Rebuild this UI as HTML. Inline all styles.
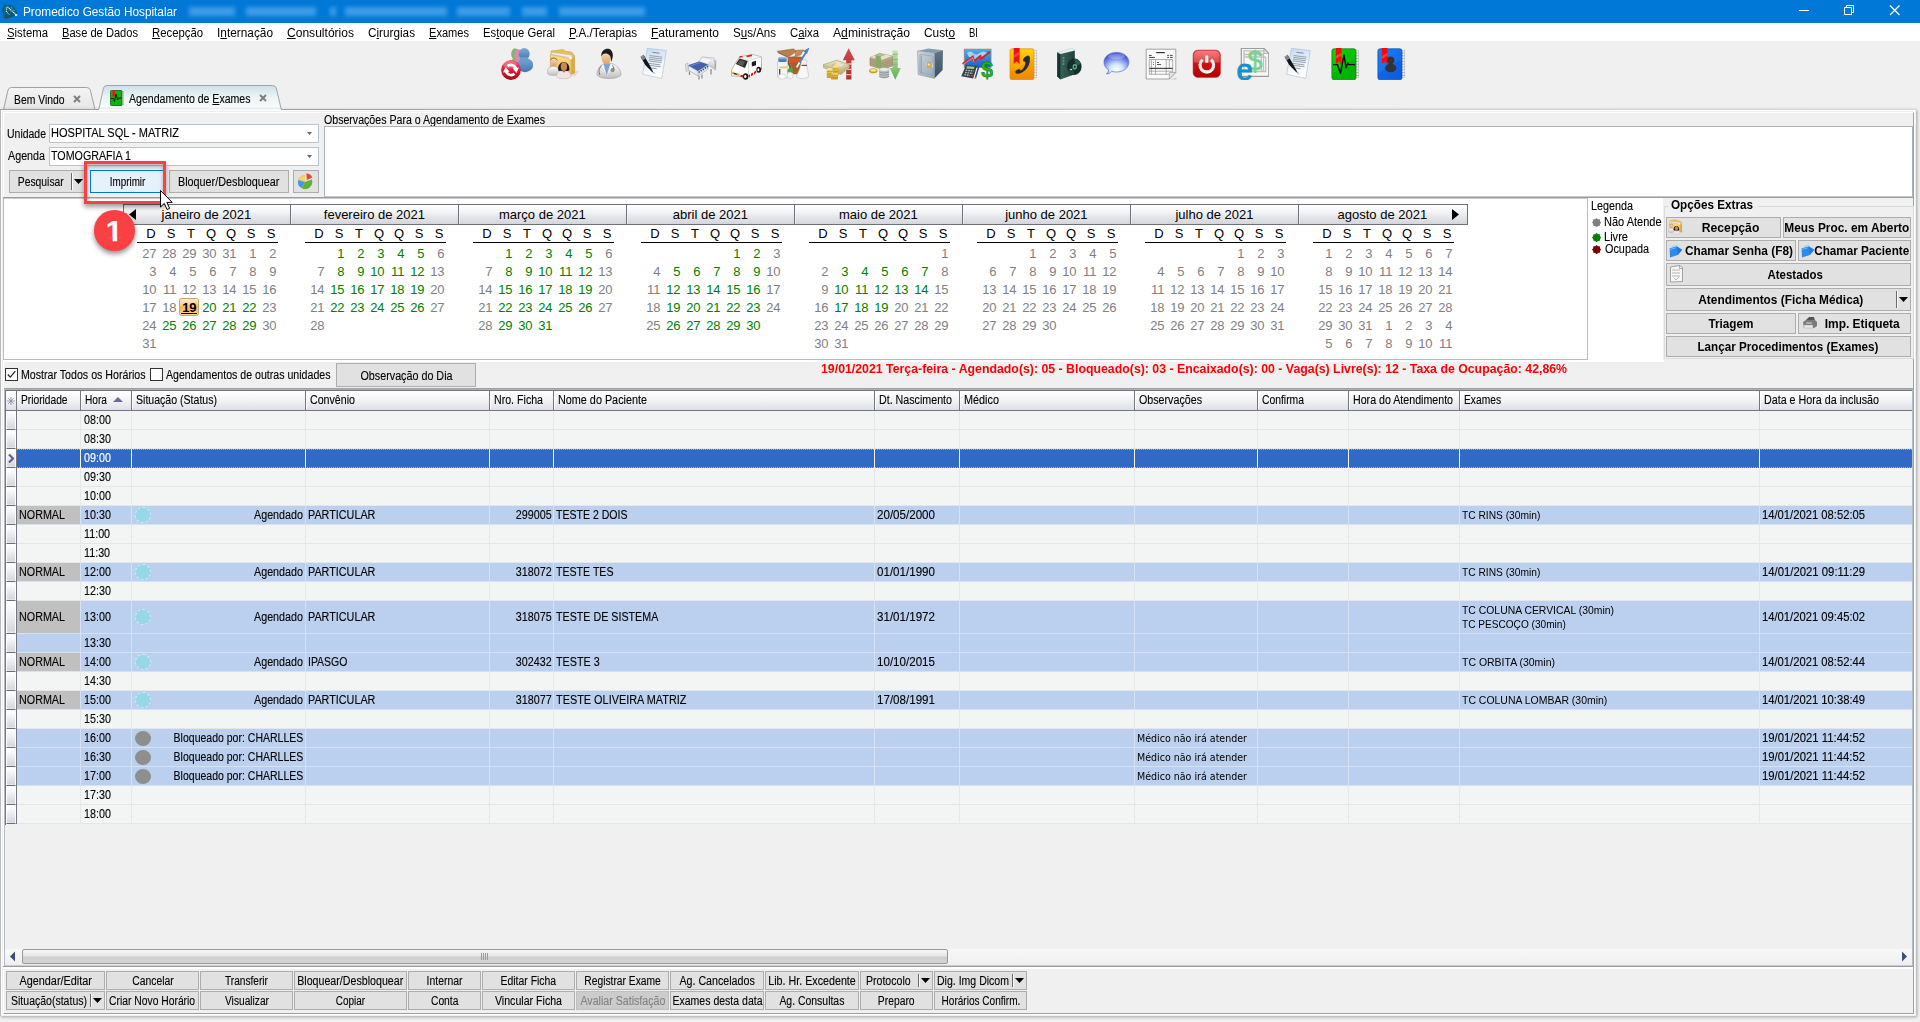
<!DOCTYPE html>
<html lang="pt-BR"><head><meta charset="utf-8"><title>Promedico Gestão Hospitalar</title>
<style>

html,body{margin:0;padding:0;}
body{width:1920px;height:1022px;overflow:hidden;background:#f0f0f0;position:relative;font-family:"Liberation Sans",sans-serif;color:#000;}
div,span.t,svg{position:absolute;box-sizing:border-box;}
span.t{white-space:nowrap;display:block;}
span.m{-webkit-text-stroke:.12px;}
.b{background:#e1e1e1;border:1px solid #adadad;}
.w{background:#fff;}
u{text-decoration:underline;text-underline-offset:1px;}
.hd{background:linear-gradient(#ffffff 0%,#f4f4f8 45%,#dfdfe8 100%);}
.ind{background:linear-gradient(#ffffff 8%,#ececf0 50%,#d6d8de 92%,#eeeef2);border-bottom:1px solid #6a6c72;border-left:1px solid #fff;border-right:1px solid #fff;}

</style></head>
<body>
<div class="" style="left:0px;top:0px;width:1920px;height:23px;background:#0078d7;"></div>
<svg style="left:0;top:0" width="22" height="23" viewBox="0 0 22 23"><path d="M4 4.500L10.500 5 14 7.500 17 12l-.5 3.500L7 18.700 3.500 16.500 2.300 9z" fill="#0b5a72"/><path d="M4 5l6 .5 3 2-9 8z" fill="#0e6a84"/><path d="M7.500 6.800l8.800 8.300" stroke="#fff" stroke-width="1.100" stroke-dasharray="1.200 .700"/><path d="M6.500 7.500v4.500l3.500 3" stroke="#e8f4f8" stroke-width="1" stroke-dasharray="1 .800" fill="none"/><path d="M11 7.500c2 1 3.500 3 3.800 5" stroke="#9fd0dc" stroke-width=".9" stroke-dasharray="1 1" fill="none"/><path d="M15 14.300h2.200v1.500h-2.200z" fill="#fff"/><path d="M4 16.500l2.500 2" stroke="#0a2a3a" stroke-width="1.400"/><path d="M4.500 16.800l1.800 1.400" stroke="#cfe" stroke-width=".6" stroke-dasharray=".8 .8"/></svg>
<span class="t" style="top:5.0px;line-height:15px;font-size:12px;color:#fff;left:22.8px;transform-origin:0 50%;transform:scaleX(0.9826);">Promedico Gestão Hospitalar</span>
<div style="left:0;top:0;width:700px;height:23px;filter:blur(2.2px);opacity:.5"><div style="left:189px;top:7px;width:46px;height:9px;background:#7cc0f8"></div><div style="left:246px;top:7px;width:70px;height:9px;background:#7cc0f8"></div><div style="left:330px;top:7px;width:6px;height:9px;background:#7cc0f8"></div><div style="left:345px;top:7px;width:102px;height:9px;background:#7cc0f8"></div><div style="left:457px;top:7px;width:53px;height:9px;background:#7cc0f8"></div><div style="left:522px;top:7px;width:25px;height:9px;background:#7cc0f8"></div><div style="left:559px;top:7px;width:86px;height:9px;background:#7cc0f8"></div></div>
<svg style="left:1780px;top:0" width="140" height="23" viewBox="0 0 140 23" fill="none" stroke="#fff" stroke-width="1"><path d="M19 10.5h10"/><path d="M64.5 7.5h7v7h-7zM66.5 7.5v-2h7v7h-2"/><path d="M110 5.5l9.5 9.5M119.5 5.5l-9.5 9.5" stroke-width="1.2"/></svg>
<div class="w" style="left:0px;top:23px;width:1920px;height:18px;"></div>
<span class="t" style="top:26.0px;line-height:15px;font-size:12px;left:6.8px;transform-origin:0 50%;transform:scaleX(0.9459);"><u>S</u>istema</span>
<span class="t" style="top:26.0px;line-height:15px;font-size:12px;left:61.8px;transform-origin:0 50%;transform:scaleX(0.9263);"><u>B</u>ase de Dados</span>
<span class="t" style="top:26.0px;line-height:15px;font-size:12px;left:151.8px;transform-origin:0 50%;transform:scaleX(0.9439);"><u>R</u>ecepção</span>
<span class="t" style="top:26.0px;line-height:15px;font-size:12px;left:216.8px;transform-origin:0 50%;transform:scaleX(0.9876);">I<u>n</u>ternação</span>
<span class="t" style="top:26.0px;line-height:15px;font-size:12px;left:286.8px;transform-origin:0 50%;transform:scaleX(1.0046);"><u>C</u>onsultórios</span>
<span class="t" style="top:26.0px;line-height:15px;font-size:12px;left:367.8px;transform-origin:0 50%;transform:scaleX(0.9790);">C<u>i</u>rurgias</span>
<span class="t" style="top:26.0px;line-height:15px;font-size:12px;left:428.8px;transform-origin:0 50%;transform:scaleX(0.9228);"><u>E</u>xames</span>
<span class="t" style="top:26.0px;line-height:15px;font-size:12px;left:482.8px;transform-origin:0 50%;transform:scaleX(0.9386);">Es<u>t</u>oque Geral</span>
<span class="t" style="top:26.0px;line-height:15px;font-size:12px;left:568.8px;transform-origin:0 50%;transform:scaleX(0.9740);"><u>P</u>.A./Terapias</span>
<span class="t" style="top:26.0px;line-height:15px;font-size:12px;left:650.8px;transform-origin:0 50%;transform:scaleX(0.9996);"><u>F</u>aturamento</span>
<span class="t" style="top:26.0px;line-height:15px;font-size:12px;left:732.8px;transform-origin:0 50%;transform:scaleX(0.9622);">S<u>u</u>s/Ans</span>
<span class="t" style="top:26.0px;line-height:15px;font-size:12px;left:789.8px;transform-origin:0 50%;transform:scaleX(0.9453);">C<u>a</u>ixa</span>
<span class="t" style="top:26.0px;line-height:15px;font-size:12px;left:832.8px;transform-origin:0 50%;transform:scaleX(1.0128);">A<u>d</u>ministração</span>
<span class="t" style="top:26.0px;line-height:15px;font-size:12px;left:923.8px;transform-origin:0 50%;transform:scaleX(0.9890);">Cust<u>o</u></span>
<span class="t" style="top:26.0px;line-height:15px;font-size:12px;left:968.8px;transform-origin:0 50%;transform:scaleX(0.7938);">BI</span>
<svg width="0" height="0" style="left:0;top:0"><defs>
<linearGradient id="gRed" x1="0" y1="0" x2="0" y2="1"><stop offset="0" stop-color="#f46"/><stop offset="1" stop-color="#b00010"/></linearGradient>
<linearGradient id="gBlue" x1="0" y1="0" x2="0" y2="1"><stop offset="0" stop-color="#7fa9d6"/><stop offset="1" stop-color="#3f78b4"/></linearGradient>
<linearGradient id="gFold" x1="0" y1="0" x2="0" y2="1"><stop offset="0" stop-color="#fbe08a"/><stop offset="1" stop-color="#e8b84a"/></linearGradient>
<linearGradient id="gSkin" x1="0" y1="0" x2="0" y2="1"><stop offset="0" stop-color="#fde3c0"/><stop offset="1" stop-color="#d9a066"/></linearGradient>
<linearGradient id="gCoat" x1="0" y1="0" x2="0" y2="1"><stop offset="0" stop-color="#ffffff"/><stop offset="1" stop-color="#bfbfbf"/></linearGradient>
<linearGradient id="gPaper" x1="0" y1="0" x2=".25" y2="1"><stop offset="0" stop-color="#bfd9f3"/><stop offset=".75" stop-color="#f4f8fc"/><stop offset="1" stop-color="#ffffff"/></linearGradient>
<linearGradient id="gSafe" x1="0" y1="0" x2="1" y2="1"><stop offset="0" stop-color="#b9c7d2"/><stop offset="1" stop-color="#6f8796"/></linearGradient>
<linearGradient id="gGreenA" x1="0" y1="0" x2="0" y2="1"><stop offset="0" stop-color="#bfe6a8"/><stop offset="1" stop-color="#5fae4a"/></linearGradient>
<linearGradient id="gRedA" x1="0" y1="0" x2="0" y2="1"><stop offset="0" stop-color="#d04a4a"/><stop offset="1" stop-color="#b03030"/></linearGradient>
<linearGradient id="gGold" x1="0" y1="0" x2="0" y2="1"><stop offset="0" stop-color="#f6d768"/><stop offset="1" stop-color="#c79a20"/></linearGradient>
<linearGradient id="gMoney" x1="0" y1="0" x2="0" y2="1"><stop offset="0" stop-color="#e9e3bd"/><stop offset="1" stop-color="#b9b07c"/></linearGradient>
<linearGradient id="gOrange" x1="0" y1="0" x2="0" y2="1"><stop offset="0" stop-color="#ffd200"/><stop offset="1" stop-color="#f08a00"/></linearGradient>
<linearGradient id="gBook" x1="0" y1="0" x2="1" y2="0"><stop offset="0" stop-color="#3f6a62"/><stop offset="1" stop-color="#1f3f3a"/></linearGradient>
<radialGradient id="gBubble" cx=".5" cy=".8" r=".75"><stop offset="0" stop-color="#ffffff"/><stop offset=".35" stop-color="#cfe6fa"/><stop offset=".7" stop-color="#7a8ee8"/><stop offset="1" stop-color="#3a44cc"/></radialGradient>
<linearGradient id="gPower" x1="0" y1="0" x2="0" y2="1"><stop offset="0" stop-color="#f36060"/><stop offset=".5" stop-color="#d01010"/><stop offset="1" stop-color="#b00000"/></linearGradient>
<linearGradient id="gGreenB" x1="0" y1="0" x2="1" y2="1"><stop offset="0" stop-color="#10d010"/><stop offset="1" stop-color="#00b400"/></linearGradient>
<linearGradient id="gBlueB" x1="0" y1="0" x2="1" y2="1"><stop offset="0" stop-color="#2080f8"/><stop offset="1" stop-color="#0a60e8"/></linearGradient>
<linearGradient id="gScreen" x1="0" y1="0" x2="0" y2="1"><stop offset="0" stop-color="#4ab0f0"/><stop offset="1" stop-color="#1a5cc4"/></linearGradient>
<linearGradient id="gHdr" x1="0" y1="0" x2="0" y2="1"><stop offset="0" stop-color="#fff"/><stop offset="1" stop-color="#d9dbe3"/></linearGradient>
<linearGradient id="gSafeF" x1="0" y1="0" x2="1" y2="1"><stop offset="0" stop-color="#ccd6de"/><stop offset="1" stop-color="#97a8b5"/></linearGradient><linearGradient id="gSafeR" x1="0" y1="0" x2="0" y2="1"><stop offset="0" stop-color="#5f7688"/><stop offset="1" stop-color="#3c5060"/></linearGradient>
</defs></svg>
<svg style="left:501px;top:48px" width="32" height="32" viewBox="0 0 32 32"><ellipse cx="14" cy="6" rx="3.800" ry="5.800" fill="#7fb86c"/><ellipse cx="14.500" cy="14" rx="4" ry="4" fill="#7fb86c"/><ellipse cx="17" cy="6.500" rx="3.600" ry="5.600" fill="#d98ab4"/><ellipse cx="17.500" cy="14" rx="3.500" ry="4" fill="#d98ab4"/><ellipse cx="24" cy="17" rx="8.200" ry="7.200" fill="url(#gBlue)"/><ellipse cx="23.200" cy="6" rx="5.500" ry="5.900" fill="url(#gBlue)"/><rect x="19.500" y="9" width="7.500" height="4" fill="#6e9bcb"/><circle cx="10" cy="22" r="9.900" fill="url(#gRed)"/><ellipse cx="9" cy="16.500" rx="7" ry="4" fill="#fff" opacity=".22"/><path d="M6.500 18.300A5.200 5.200 0 0 1 15 21" stroke="#fff" stroke-width="2.800" fill="none"/><path d="M11.600 20.200l6.400-.600-2.600 5.400z" fill="#fff"/><path d="M13.500 25.700A5.200 5.200 0 0 1 5 23" stroke="#fff" stroke-width="2.800" fill="none"/><path d="M8.400 23.800l-6.400.600 2.600-5.400z" fill="#fff"/></svg>
<svg style="left:547px;top:48px" width="32" height="32" viewBox="0 0 32 32"><path d="M24 22l8 1-4 5.500-6-1z" fill="#cfcfcf" opacity=".6"/><path d="M4 3l12-1.500 2.500 1.800 6 .8 3 3.500-.5 18-23-1z" fill="#e9bf55" stroke="#c8983a" stroke-width=".5"/><path d="M4.500 4.500l19 2.500 2 2.500-.3 13-20.700-1z" fill="#f2f2f4" stroke="#bdbdc4" stroke-width=".5"/><path d="M4.500 6.500l18 3" stroke="#c9c9d2" stroke-width=".8"/><path d="M3.500 6.500l17 3.500 3.500 2.500 1 13.500-22-1.500z" fill="url(#gFold)" stroke="#c8983a" stroke-width=".5"/><path d="M24 12l3.500-4.500.5 17.500-3 1z" fill="#d9a940"/><path d="M.300 24.500c0-4 2.400-6 6.200-6s5.800 2 5.800 6c0 1.800-2.600 2.900-6 2.900s-6-1.100-6-2.900z" fill="url(#gCoat)" stroke="#9a9a9a" stroke-width=".5"/><ellipse cx="6.700" cy="13.800" rx="3.500" ry="4.500" fill="url(#gSkin)"/><path d="M3 13.500c-.5-5.500 8-5.500 7.500 0-1-2.500-2-3-3.800-3s-3 1-3.700 3z" fill="#8a5a2e"/><path d="M9.500 28c0-3.500 2.500-5.400 7.200-5.400s7.200 1.900 7.200 5.400c0 1.600-3 2.600-7.200 2.600s-7.200-1-7.200-2.600z" fill="#f3e4e4" stroke="#b8a4a4" stroke-width=".5"/><path d="M11.300 22.600c-1.500-11.500 12.500-11.500 11 0-1.500.800-9.500.800-11 0z" fill="#1f1612"/><ellipse cx="16.900" cy="18.600" rx="3.200" ry="4.300" fill="#c48a5e"/><path d="M14.800 22.500l2.100 2.300 2.100-2.300z" fill="#b07a4e"/></svg>
<svg style="left:593px;top:48px" width="32" height="32" viewBox="0 0 32 32"><path d="M4 27c0-6 3-10 8-11.500h6.500c5 1.500 9.500 5.500 9.500 11.500-2 2.400-7 3.500-12 3.500s-10-1.100-12-3.500z" fill="url(#gCoat)" stroke="#9a9a9a" stroke-width=".6"/><path d="M10.300 15.800l3.400 12.200 3.900-12.200z" fill="#7aa4d8"/><path d="M10.300 15.800l3.400 12.200-5.200-9.500zM17.600 15.800l-3.900 12.200 6.300-9z" fill="#fff" stroke="#c4c4c4" stroke-width=".4"/><ellipse cx="13.300" cy="9.500" rx="4.800" ry="7" fill="url(#gSkin)"/><path d="M8.300 8.500C7.500 0 19-2.500 19.800 6.500c.2 3-.8 6-1.800 7.500.3-4-.5-7.500-4.500-8.500-2.500-.5-4.200.5-5.200 3z" fill="#1c1c1c"/><path d="M8.500 17.500c-2.800 3.500-3 7-1.500 9.500M19.500 17.500c1.500 2 1.500 3 1 4.500" stroke="#6a6a6a" stroke-width=".9" fill="none"/><circle cx="19.600" cy="22" r="1.700" fill="#999" stroke="#555" stroke-width=".5"/></svg>
<svg style="left:639px;top:48px" width="32" height="32" viewBox="0 0 32 32"><path d="M8.400 .300l18.900 2.300-4.500 27.800L3.600 26.300z" fill="url(#gPaper)" stroke="#a9bccf" stroke-width=".6"/><path d="M13.500 4.300l7 .900" stroke="#7f8894" stroke-width="1.100"/><path d="M10.500 7.500l13 1.700M10.200 9.300l13 1.700M9.900 11.100l13 1.700M9.600 12.900l13 1.700M9.300 15.300l12 1.600M9 17.100l12.500 1.700M8.700 19.500l9 1.300" stroke="#9aa2ad" stroke-width="1"/><path d="M1.600 8.800L4.500 6.800l5.200 8.800 5.100 9.500-2.200-1.700-6.300-6.500z" fill="#121418"/><path d="M1.600 8.800L4.500 6.800l2.100 3.600-3 2z" fill="#7d838c"/><path d="M2.300 8.600l1.900-1.300" stroke="#c9ccd2" stroke-width=".7"/><path d="M12.500 23l3.700 3.300" stroke="#777" stroke-width=".5"/></svg>
<svg style="left:685px;top:48px" width="32" height="32" viewBox="0 0 32 32"><path d="M14 13.500L17 9l11.500 1L31 13l-.5 9L23 16.500z" fill="url(#gCoat)" stroke="#9aa0a8" stroke-width=".6"/><path d="M17.300 9.700l9.700 1-4 5.300-8.500-2.500z" fill="#f6f7f8" stroke="#c4c8cc" stroke-width=".4"/><path d="M28.500 12c1.500 1 2 3 1.700 8" stroke="#8f959c" stroke-width=".9" fill="none"/><path d="M3 17.500L13 23l10-6.500V21l-10 7-10-6z" fill="#e9ebee" stroke="#9aa0a8" stroke-width=".6"/><path d="M3 17.300l11-3.800 9 3-10 6.500z" fill="#3f62a8"/><path d="M5 17.300l9-3 2 .7-9.500 3.300z" fill="#6f90cc" opacity=".7"/><path d="M.500 16l2.300-1 .5 7.500-2.300 1z" fill="#dfe2e6" stroke="#9aa0a8" stroke-width=".5"/><path d="M13.500 24.500l9.500-6.300" stroke="#2f4f90" stroke-width="1.600" stroke-dasharray="1.500 1"/><path d="M4.500 23.500v3.500M14 28v3.500M17 26.500v4M26 21v5.500" stroke="#8a8f96" stroke-width="1.300"/><path d="M13 23v5" stroke="#b4b9bf" stroke-width="1"/></svg>
<svg style="left:731px;top:48px" width="32" height="32" viewBox="0 0 32 32"><path d="M8.500 9l13-2.500 9 2.500v11l-14 8.500L.500 28v-6l4-7z" fill="#fff" stroke="#8f8f8f" stroke-width=".6"/><path d="M8.500 9l13-2.500 9 2.500-13 3.500z" fill="#f4f4f4" stroke="#b0b0b0" stroke-width=".4"/><path d="M17.500 12.500v15.500" stroke="#bbb" stroke-width=".5"/><path d="M4.800 16l3.700-5.500 8.300 2.500-2.800 7z" fill="#2a2a2a"/><path d="M6 16l3-4 5 1.500-2 4.500z" fill="#777" opacity=".6"/><path d="M17.500 27.200L30.500 19.200v2.600L17.500 29.800z" fill="#e01010"/><path d="M19.500 25v4M22.500 23.300v4M25.500 21.500v4M28.500 19.700v4" stroke="#fff" stroke-width=".9"/><path d="M9.500 26.800l7 1.300v2.300l-7-1.500z" fill="#e01010"/><path d="M20.800 14l4.200-1.200v4.500l-4.200 1.300z" fill="#1c1c1c"/><path d="M8.500 8.300l3-.600v1.500l-3 .600zM15.500 7.500l5.500-1v1.700l-5.500 1z" fill="#f01818"/><path d="M1 23.500l2 .500v2.300l-2-.500zM5.500 25l3 .700v2.300l-3-.700z" fill="#f0a020"/><path d="M2.800 24.800l3 .700v1.500l-3-.700z" fill="#222"/><ellipse cx="14.600" cy="28.500" rx="2.600" ry="3.200" fill="#111"/><ellipse cx="14.300" cy="28.500" rx="1.200" ry="1.700" fill="#f4f4f4"/><ellipse cx="27.700" cy="21.800" rx="2.300" ry="3" fill="#111"/><ellipse cx="27.400" cy="21.800" rx="1" ry="1.500" fill="#f4f4f4"/></svg>
<svg style="left:777px;top:48px" width="32" height="32" viewBox="0 0 32 32"><path d="M.200 3.200L16.600 .800l2.800 2.800-7.600 5.200z" fill="#b9804e" stroke="#8a5a30" stroke-width=".4"/><path d="M18.700 2.200l8.200-.300-3.400 5.100-5.500 1.200z" fill="#c48a58" stroke="#8a5a30" stroke-width=".4"/><path d="M10.800 9.100L18 8.200l8.300.800-4.900 17.300h-4.800z" fill="#a0622e"/><path d="M10.800 9.100l5.800 17.200-2.500-2-3.500-9z" fill="#8a5428"/><path d="M11.500 10.600l14.300-.200-1 3.500-12.200.300z" fill="#e0502a"/><path d="M.200 3.200l11.600 5.600-1 .900L.800 5z" fill="#9a6a3e"/><rect x=".500" y="12.500" width="9.900" height="17.900" rx="2.300" fill="#f1f4f8" stroke="#a9b2bc" stroke-width=".5"/><rect x="1.300" y="9.400" width="8.300" height="4.500" rx="1.200" fill="#4f78c4"/><rect x="1.500" y="10" width="7.900" height="1.200" fill="#8aa8e0"/><rect x="2.500" y="18.500" width="7.500" height="1.700" fill="#ecc85a"/><rect x="2" y="21" width="1.300" height="6" fill="#444"/><path d="M30.800 1.500L28 3.200l1.600 1.200zM29.500 3.500L22 15.500" stroke="#4f80c8" stroke-width="1.900"/><path d="M22.500 14.500L19.700 19.400" stroke="#f4f4f4" stroke-width="1.700"/><path d="M25 12h4.600v4.500l2.100 11.500c0 3.300-12.300 3.300-12.300 0l3.100-6.500z" fill="#f7f7f8" stroke="#b4b4b8" stroke-width=".5"/><rect x="24.600" y="16.800" width="5.400" height="1.200" fill="#555"/><path d="M10.300 24.500c0-6.500 5.600-6.500 5.600 0z" fill="#3fae3a"/><rect x="10.300" y="24.300" width="5.600" height="6.600" rx="2.300" fill="#f3f3f4" stroke="#b4b4b8" stroke-width=".4"/><ellipse cx="5" cy="28.600" rx="3.800" ry="2.600" fill="#fafafa" stroke="#b4b4b8" stroke-width=".4"/></svg>
<svg style="left:823px;top:48px" width="32" height="32" viewBox="0 0 32 32"><path d="M25.600 .200L31.800 12.200h-3.400v19.200h-5.200V12.200h-3.400z" fill="url(#gRedA)"/><path d="M23.200 16h5.200M23.200 21.400h5.200M23.200 26.600h5.200" stroke="#ecc0c0" stroke-width="1.300"/><path d="M.300 16.600l13.600-4.400 12.400 4.400v3l-8.300 6.900L.300 19.600z" fill="url(#gMoney)" stroke="#98905a" stroke-width=".5"/><path d="M.300 16.600l17.700 6.700 8.300-6.700" stroke="#a8a070" stroke-width=".5" fill="none"/><path d="M.300 18.100l17.700 6.800 8.300-6.800" stroke="#a8a070" stroke-width=".4" fill="none"/><ellipse cx="12.500" cy="17.200" rx="4" ry="1.700" fill="#c8c294"/><path d="M15 14.200l6 2.200-3.500 2.600-6-2.300z" fill="#efeacb" opacity=".8"/><rect x="3.800" y="21" width="5.800" height="9" rx=".8" fill="url(#gGold)"/><rect x="10" y="18.300" width="5.800" height="9" rx=".8" fill="url(#gGold)"/><rect x="8" y="25" width="7" height="6.500" rx=".8" fill="url(#gGold)"/><path d="M3.800 23.500h5.800M3.800 26h5.800M10 20.800h5.800M10 23.300h5.800M8 27.500h7M8 29.500h7" stroke="#a87c10" stroke-width=".5"/><ellipse cx="6.700" cy="21" rx="2.900" ry="1" fill="#fbe58a"/><ellipse cx="12.900" cy="18.300" rx="2.900" ry="1" fill="#fbe58a"/></svg>
<svg style="left:869px;top:48px" width="32" height="32" viewBox="0 0 32 32"><path d="M23.600 2.500h5.100V20h3.100l-5.500 11.800L20.800 20h2.800z" fill="url(#gGreenA)"/><path d="M23.600 6.300h5.100M23.600 11.500h5.100M23.600 16.300h5.100" stroke="#9aa89a" stroke-width="1.100"/><path d="M1 9.500l9.500-4 13 2.500v10l-10 3.500L1 17.500z" fill="#b4a484" stroke="#857a5a" stroke-width=".5"/><path d="M1 9.500l9.500-4 13 2.500-10 3.800z" fill="#e8e0c8"/><path d="M1 11.500l12.500 4 10-3.500M1 13.500l12.500 4 10-3.500M1 15.500l12.500 4 10-3.500" stroke="#8f8464" stroke-width=".5" fill="none"/><path d="M6.500 7.200l4-1.600 5.500 1.100-4.200 1.700 .200 11.600-5.300-1.700z" fill="#8aa86a"/><path d="M6.500 7.200l4-1.600 5.500 1.100-4.200 1.700z" fill="#a8c48a"/><ellipse cx="4.300" cy="22.800" rx="4" ry="2.200" fill="url(#gGold)" stroke="#a87c10" stroke-width=".5"/><ellipse cx="4.300" cy="22.300" rx="2.600" ry="1.200" fill="#fbe58a"/><path d="M10.200 21.500h9.900v7c0 2.500-9.900 2.500-9.900 0z" fill="#c4c8c8"/><path d="M10.200 23.800c2 1.600 7.900 1.600 9.900 0M10.200 26c2 1.600 7.900 1.600 9.900 0M10.200 28.200c2 1.600 7.900 1.600 9.900 0" stroke="#6f7676" stroke-width=".7" fill="none"/><ellipse cx="15.150" cy="21.500" rx="4.950" ry="1.900" fill="#e6eeee" stroke="#8f9696" stroke-width=".5"/></svg>
<svg style="left:915px;top:48px" width="32" height="32" viewBox="0 0 32 32"><path d="M2.500 2.900L13.200 .500 28 2.200 19.400 4.900z" fill="#8a9cac"/><path d="M19.400 4.900L28 2.200l-.400 19.900-8.200 8.300z" fill="url(#gSafeR)"/><path d="M2.500 2.900l16.900 2v25.500L3.200 26.600z" fill="url(#gSafeF)" stroke="#7f909e" stroke-width=".5"/><path d="M4.900 6.300l13.100 1.700v19.300L4.900 24.200z" fill="none" stroke="#8e9eac" stroke-width=".6"/><path d="M6.300 7.700v17.900" stroke="#8a9aa8" stroke-width=".9"/><path d="M10.400 14.200l7.600 1v4.500l-7.600-1z" fill="#d4dce3" stroke="#9aa8b4" stroke-width=".4"/><circle cx="14.200" cy="17" r="2.300" fill="#e8c040" stroke="#a8841a" stroke-width=".6"/><circle cx="13.700" cy="16.400" r=".900" fill="#fff2b0"/></svg>
<svg style="left:961px;top:48px" width="32" height="32" viewBox="0 0 32 32"><rect x="3.300" y="1.200" width="26.700" height="18.200" fill="url(#gScreen)" stroke="#8a8a8a" stroke-width=".9"/><path d="M6 5c2-2 5-1 6 0s3 2 5 1 4-3 7-2 3 3 1 4-6 0-8 2-5 1-7 0-3-2-3-3z" fill="#fff" opacity=".55"/><path d="M1.500 16L11.900 8.700l1 4.500L19.400 8l.600 2.800L28.500 4.200" stroke="#e02020" stroke-width="1.900" fill="none" stroke-linejoin="miter"/><path d="M1.500 16.900L11.900 9.700l1 4.500" stroke="#f8c8c8" stroke-width=".6" fill="none"/><path d="M29.800 3.200l-3.600 .200 2.300 2.700z" fill="#e02020"/><path d="M5 17.300l11 .700-3.800 12.400-12-2.100z" fill="#3a4048"/><path d="M6 18.300l7.600.500-.600 2.100-7.700-.500z" fill="#9fd07a"/><path d="M4.700 22.300l7.900.700M4 24.500l7.900.900M3.300 26.700l5.500.700" stroke="#b4bac2" stroke-width="1.300" stroke-dasharray="1.700 .800"/><path d="M9.800 27.600l2.400.300" stroke="#e03030" stroke-width="1.400"/><path d="M17.700 18.700l-3.400 11.700" stroke="#2a4a8a" stroke-width="1.500"/><path d="M14.600 29.200l-.500 1.800" stroke="#999" stroke-width=".8"/><text x="20" y="29.300" font-family="Liberation Sans,sans-serif" font-weight="bold" font-size="22" fill="#28b028" stroke="#0a7a0a" stroke-width=".5">$</text></svg>
<svg style="left:1007px;top:48px" width="32" height="32" viewBox="0 0 32 32"><rect x="26.500" y="2.200" width="3.300" height="27.500" fill="#f6f6f6" stroke="#aaa" stroke-width=".5"/><path d="M26.500 5h3.300M26.500 7.800h3.300M26.500 10.600h3.300M26.500 13.400h3.300M26.500 16.200h3.300M26.500 19h3.300M26.500 21.800h3.300M26.500 24.600h3.300M26.500 27.400h3.300" stroke="#aaa" stroke-width=".6"/><rect x="3" y=".800" width="24" height="31" rx="2" fill="url(#gOrange)" stroke="#d88400" stroke-width=".6"/><path d="M4 24c6-3 14-10 22-12v18.500H4z" fill="#f08800" opacity=".35"/><path d="M6.700 0h5.900v16l-2.950-2.600L6.700 16z" fill="#ee1020"/><path d="M6.700 7l5.900-3.500v3L6.700 10z" fill="#ff5a5a" opacity=".6"/><path d="M19.200 8.200c1.500-1.200 3.500-.600 3.700 1.800.600 7.500-4.600 14.700-12 15.700-2.800.300-3.300-2.300-1.500-3.500l2.800-1.300 1.300 1.600c2.900-1.300 4.900-4.800 4.900-8.500l-2-.800c-1.100-1.700.300-3.800 2.800-5z" fill="#252a38"/></svg>
<svg style="left:1053px;top:48px" width="32" height="32" viewBox="0 0 32 32"><path d="M4.300 4.300L21.800 2.200v24.100L7.400 31.400 4.300 28.300z" fill="url(#gBook)"/><path d="M4.300 4.300l3.100 1.700v25.400l-3.100-3.100z" fill="#16332f"/><path d="M4.600 4.600L19 .100l3 2.400L7.400 6z" fill="#eef2f2" stroke="#9aa" stroke-width=".3"/><path d="M10.500 9v9" stroke="#5f8a80" stroke-width="1.800" stroke-dasharray="2 1"/><ellipse cx="21.400" cy="18.700" rx="6.900" ry="8" fill="#14302c" stroke="#0c201c" stroke-width=".5"/><path d="M21.400 10.700a6.900 8 0 0 1 6.500 5.300l-5 2z" fill="#2f5a50"/><path d="M21.400 26.700a6.900 8 0 0 1-6.500-5.300l5-2z" fill="#24483f"/><ellipse cx="21.800" cy="18.700" rx="2.200" ry="2.700" fill="#5fae8a"/><ellipse cx="21.800" cy="18.700" rx="1" ry="1.300" fill="#14302c"/><circle cx="18" cy="21.500" r=".800" fill="#e8f0ee"/></svg>
<svg style="left:1099px;top:48px" width="32" height="32" viewBox="0 0 32 32"><path d="M17.400 4.400c7.300 0 12.400 4.300 12.400 9.800s-5.100 9.800-12.400 9.800c-1.700 0-3.400-.200-4.800-.700-1.300 1.700-3.200 2.800-5.200 2.600 1.300-1.100 2-2.500 2.200-4C6.700 20.100 5 17.400 5 14.200c0-5.500 5.100-9.800 12.400-9.800z" fill="url(#gBubble)" stroke="#5a6ad8" stroke-width=".7"/><ellipse cx="17.400" cy="8.200" rx="8.500" ry="3" fill="#fff" opacity=".25"/></svg>
<svg style="left:1145px;top:48px" width="32" height="32" viewBox="0 0 32 32"><path d="M25 31.600h6.500v-2z" fill="#bbb" opacity=".7"/><path d="M1.200 1.200h29.600v23.300L24.300 31H1.200z" fill="#fbfbfb" stroke="#8f8f8f" stroke-width=".8"/><path d="M11.200 4.600h8.600" stroke="#333" stroke-width="1.200"/><path d="M4 7.400h2.700M4 9.400h5.800M22.200 7.400h1.700M24.900 7.400h2.800M22.200 9.400h1.700M24.900 9.400h2.800" stroke="#444" stroke-width="1"/><path d="M4.300 11.500h23.400v14.800H4.300zM6.400 11.500v14.800M10.500 11.500v14.800M21.200 11.500v14.800M24.300 11.500v9M4.300 23.200h23.400" stroke="#9a9a9a" stroke-width=".8" fill="none"/><path d="M4.300 20.400h23.400" stroke="#444" stroke-width="1.200"/><path d="M8.200 14.500h.800M8.200 16.500h.800M12 14.500h2M12 16.500h4" stroke="#555" stroke-width="1"/><path d="M24.300 31v-6.500h6.500z" fill="#e4e4e4" stroke="#8f8f8f" stroke-width=".6"/></svg>
<svg style="left:1191px;top:48px" width="32" height="32" viewBox="0 0 32 32"><rect x="2.200" y="2.200" width="27.100" height="27.100" rx="4.500" fill="url(#gPower)" stroke="#b00000" stroke-width=".6"/><path d="M3 10c0-5 1.500-7 5-7h15.500c3.500 0 5 2 5 7v4.500H3z" fill="#fff" opacity=".2"/><path d="M11.600 11.800a6.800 6.800 0 1 0 8.400 0" stroke="#ececec" stroke-width="3.200" fill="none" stroke-linecap="butt"/><rect x="14.200" y="7.400" width="3.100" height="7.400" rx=".6" fill="#f2f2f2"/><path d="M9.600 21.500a7.600 7.600 0 0 0 12.400 0" stroke="#fff" stroke-width="1.400" fill="none" opacity=".7"/></svg>
<svg style="left:1237px;top:48px" width="32" height="32" viewBox="0 0 32 32"><path d="M4.300 .500H27l4.800 4.800v23H4.300z" fill="#f7f7f7" stroke="#9c9c9c" stroke-width="1.200"/><path d="M27 .500v4.800h4.800" fill="none" stroke="#9c9c9c" stroke-width=".8"/><path d="M7 2.900h19.500v20.600H7zM7 6.500h19.500M7 9h21.700M24.300 9v14.500M28.700 9v14.500h-4.400" stroke="#c0c0c0" stroke-width="1.300" fill="none"/><text x="10.600" y="22.300" font-family="Liberation Sans,sans-serif" font-size="27" fill="#7fd08a" stroke="#7fd08a" stroke-width=".7">$</text><text x="-.500" y="31.600" font-family="Liberation Sans,sans-serif" font-size="29" fill="#1290d0" stroke="#1290d0" stroke-width=".9">e</text></svg>
<svg style="left:1283px;top:48px" width="32" height="32" viewBox="0 0 32 32"><path d="M8.400 .300l18.900 2.300-4.500 27.800L3.600 26.300z" fill="url(#gPaper)" stroke="#a9bccf" stroke-width=".6"/><path d="M13.500 4.300l7 .900" stroke="#7f8894" stroke-width="1.100"/><path d="M10.500 7.500l13 1.700M10.200 9.300l13 1.700M9.900 11.100l13 1.700M9.600 12.900l13 1.700M9.300 15.300l12 1.600M9 17.100l12.500 1.700M8.700 19.500l9 1.300" stroke="#9aa2ad" stroke-width="1"/><path d="M1.600 8.800L4.500 6.800l5.200 8.800 5.100 9.500-2.200-1.700-6.300-6.500z" fill="#121418"/><path d="M1.600 8.800L4.500 6.800l2.100 3.600-3 2z" fill="#7d838c"/><path d="M2.300 8.600l1.900-1.300" stroke="#c9ccd2" stroke-width=".7"/><path d="M12.500 23l3.700 3.300" stroke="#777" stroke-width=".5"/></svg>
<svg style="left:1329px;top:48px" width="32" height="32" viewBox="0 0 32 32"><rect x="26.500" y="2.200" width="3.300" height="27.500" fill="#f6f6f6" stroke="#aaa" stroke-width=".5"/><path d="M26.500 5h3.300M26.500 7.800h3.300M26.500 10.600h3.300M26.500 13.400h3.300M26.500 16.200h3.300M26.500 19h3.300M26.500 21.800h3.300M26.500 24.600h3.300M26.500 27.400h3.300" stroke="#999" stroke-width=".7"/><rect x="2.900" y=".800" width="24.100" height="31" rx="2.200" fill="url(#gGreenB)" stroke="#007800" stroke-width=".7"/><path d="M3.500 25c7-3 15-11 23-13v19H3.500z" fill="#00a000" opacity=".35"/><path d="M6.900 0h5.600v16l-2.800-2.600L6.900 16z" fill="#fa0808"/><path d="M6.900 8l5.600-3.500v3L6.900 11z" fill="#ff6a5a" opacity=".5"/><path d="M4 16.600h4.400l3.100 8.600L15 7l2 12.700 1.700-4.800 1.100 1.700H26" stroke="#1a0a1a" stroke-width="1.400" fill="none" stroke-linejoin="round"/></svg>
<svg style="left:1375px;top:48px" width="32" height="32" viewBox="0 0 32 32"><rect x="26.500" y="2.200" width="3.300" height="27.500" fill="#f6f6f6" stroke="#aaa" stroke-width=".5"/><path d="M26.500 5h3.300M26.500 7.800h3.300M26.500 10.600h3.300M26.500 13.400h3.300M26.500 16.200h3.300M26.500 19h3.300M26.500 21.800h3.300M26.500 24.600h3.300M26.500 27.400h3.300" stroke="#999" stroke-width=".7"/><rect x="2.900" y=".800" width="24.100" height="31" rx="2.200" fill="url(#gBlueB)" stroke="#0048b0" stroke-width=".7"/><path d="M3.500 25c7-3 15-11 23-13v19H3.500z" fill="#0a50d0" opacity=".35"/><path d="M6.900 0h5.600v16l-2.800-2.600L6.900 16z" fill="#fa0808"/><path d="M6.900 8l5.600-3.500v3L6.900 11z" fill="#ff6a5a" opacity=".5"/><circle cx="15.700" cy="12.300" r="3.700" fill="#333"/><ellipse cx="15.700" cy="20" rx="5.600" ry="4.300" fill="#333"/><rect x="13.900" y="14" width="3.600" height="4" fill="#333"/></svg>
<svg style="left:0;top:82px" width="300" height="30" viewBox="0 82 300 30"><defs><linearGradient id="gTab1" x1="0" y1="0" x2="0" y2="1"><stop offset="0" stop-color="#f4f4f4"/><stop offset="1" stop-color="#e6e6e6"/></linearGradient><linearGradient id="gTab2" x1="0" y1="0" x2="0" y2="1"><stop offset="0" stop-color="#cfe0e8"/><stop offset=".5" stop-color="#eef5f8"/><stop offset="1" stop-color="#f8fbfc"/></linearGradient></defs><path d="M3.500 109.500 L8 90 Q8.800 87.500 11.500 87.500 H86.500 Q89.500 87.500 90.300 90 L95 109.500" fill="url(#gTab1)" stroke="#a0a0a0" stroke-width="1"/><path d="M98.500 110.500 L103.500 88 Q104.300 85.500 107 85.500 H272.500 Q275.500 85.500 276.300 88 L281.500 110.500" fill="url(#gTab2)" stroke="#9aa7ad" stroke-width="1"/></svg>
<span class="t m" style="top:91.5px;line-height:16px;font-size:12.5px;left:14.0px;transform-origin:0 50%;transform:scaleX(0.8290);">Bem Vindo</span>
<span class="t m" style="top:91.0px;line-height:16px;font-size:12.5px;left:129.2px;transform-origin:0 50%;transform:scaleX(0.8447);">Agendamento de <u>E</u>xames</span>
<svg style="left:73px;top:95px" width="8" height="8" viewBox="0 0 8 8"><path d="M1 1l6 6M7 1l-6 6" stroke="#808080" stroke-width="2"/></svg>
<svg style="left:259px;top:94px" width="8" height="8" viewBox="0 0 8 8"><path d="M1 1l6 6M7 1l-6 6" stroke="#808080" stroke-width="2"/></svg>
<svg style="left:110px;top:90px" width="14" height="16" viewBox="0 0 14 16"><rect x="11" y="1.500" width="2.500" height="13.500" fill="#eee" stroke="#999" stroke-width=".5"/><rect x=".5" y=".5" width="11.500" height="15" rx="1" fill="#10b010" stroke="#006800" stroke-width=".8"/><path d="M2.500 0h2.500v7l-1.200-1.200L2.500 7z" fill="#f01010"/><path d="M1 8.500h2.500l1 3 1.500-7.500 1.500 6 1-2h3" stroke="#111" stroke-width=".9" fill="none"/></svg>
<div class="" style="left:0px;top:109px;width:1916px;height:907px;background:#f0f0f0;border-left:1px solid #b9b9b9;border-top:1px solid #d9d9d9;box-shadow:1px 1px 3px rgba(0,0,0,.33);"></div>
<div class="" style="left:0px;top:109px;width:1916px;height:1px;background:linear-gradient(to right,#a0a0a0 0,#a2a2a2 320px,#c4c4c4 1000px,#dadada 1916px);"></div>
<div class="" style="left:1px;top:110px;width:1914px;height:905px;border:1px solid #fff;"></div>
<div class="" style="left:3px;top:112px;width:1911px;height:902px;border-top:1px solid #fff;border-left:1px solid #fff;border-right:1px solid #a0a0a0;border-bottom:1px solid #a0a0a0;"></div>
<div class="" style="left:99px;top:109px;width:182px;height:2px;background:#f6fafb;"></div>
<span class="t m" style="top:125.5px;line-height:16px;font-size:12.5px;left:7.0px;transform-origin:0 50%;transform:scaleX(0.8376);">Unidade</span>
<span class="t m" style="top:148.0px;line-height:16px;font-size:12.5px;left:7.5px;transform-origin:0 50%;transform:scaleX(0.8586);">Agenda</span>
<div class="w" style="left:49px;top:124px;width:270px;height:19px;border:1px solid #b8c4cf;"></div>
<span class="t m" style="top:124.7px;line-height:16px;font-size:12.5px;left:51.3px;transform-origin:0 50%;transform:scaleX(0.8818);">HOSPITAL SQL - MATRIZ</span>
<svg style="left:307px;top:132px" width="5" height="3" viewBox="0 0 5 3"><path d="M0 0h5L2.500 3z" fill="#666"/></svg>
<div class="w" style="left:49px;top:147px;width:270px;height:19px;border:1px solid #b8c4cf;"></div>
<span class="t m" style="top:147.7px;line-height:16px;font-size:12.5px;left:51.3px;transform-origin:0 50%;transform:scaleX(0.8553);">TOMOGRAFIA 1</span>
<svg style="left:307px;top:155px" width="5" height="3" viewBox="0 0 5 3"><path d="M0 0h5L2.500 3z" fill="#666"/></svg>
<div class="b" style="left:9px;top:170px;width:76px;height:23px;"></div>
<span class="t m" style="top:173.5px;line-height:16px;font-size:12.5px;left:11.7px;width:57.6px;text-align:center;transform-origin:50% 50%;transform:scaleX(0.8276);">Pesquisar</span>
<div class="" style="left:71px;top:173px;width:1px;height:17px;background:#6a6a6a;"></div>
<div class="" style="left:72px;top:173px;width:1px;height:17px;background:#fff;"></div>
<svg style="left:74px;top:179px" width="9" height="5" viewBox="0 0 9 5"><path d="M0 0h9L4.500 5z" fill="#000"/></svg>
<div class="" style="left:90px;top:170px;width:74px;height:23px;background:#e5f1fb;border:1px solid #0078d7;"></div>
<span class="t m" style="top:173.5px;line-height:16px;font-size:12.5px;left:104.0px;width:47.1px;text-align:center;transform-origin:50% 50%;transform:scaleX(0.7867);">Imprimir</span>
<div class="b" style="left:169px;top:170px;width:120px;height:23px;"></div>
<span class="t m" style="top:173.5px;line-height:16px;font-size:12.5px;left:169.3px;width:119.4px;text-align:center;transform-origin:50% 50%;transform:scaleX(0.8643);">Bloquer/Desbloquear</span>
<div class="b" style="left:293px;top:170px;width:26px;height:23px;"></div>
<svg style="left:297px;top:172px" width="17" height="18" viewBox="0 0 17 18"><path d="M8 10V3A7 7 0 0 0 1.300 8z" fill="#f2c230"/><path d="M8 10L1.300 8A7 7 0 0 0 4.500 16z" fill="#3f9ae0"/><path d="M8 10L4.500 16A7 7 0 0 0 14.700 7.500z" fill="#5fb03a"/><path d="M9.500 8.300V1.300a7 7 0 0 1 5.800 4.200z" fill="#e04a3a"/><ellipse cx="6.500" cy="6.500" rx="4" ry="2.300" fill="#fff" opacity=".3"/></svg>
<span class="t m" style="top:111.5px;line-height:16px;font-size:12.5px;left:324.2px;transform-origin:0 50%;transform:scaleX(0.8482);">Observações Para o Agendamento de Exames</span>
<div class="w" style="left:324px;top:126px;width:1589px;height:71px;border:1px solid #aab2bc;border-bottom-color:#c4c8cc;"></div>
<div class="" style="left:3px;top:197px;width:1911px;height:1px;background:#9a9c9e;"></div>
<div class="w" style="left:3px;top:198px;width:1585px;height:162px;border:1px solid #b4bcc8;border-top-color:#c4ccd4;"></div>
<div class="hdm" style="left:123px;top:204px;width:1345px;height:21px;background:linear-gradient(#ffffff 0%,#f4f5f7 35%,#e4e5e9 65%,#d4d6dc 100%);border:1px solid #6e7076;"></div>
<span class="t" style="top:206.0px;line-height:17px;font-size:13px;left:160.6px;width:91.6px;text-align:center;transform-origin:50% 50%;transform:scaleX(1.0000);">janeiro de 2021</span>
<span class="t" style="top:225.0px;line-height:17px;font-size:13px;left:145.3px;width:11.4px;text-align:center;transform-origin:50% 50%;transform:scaleX(1.0000);">D</span>
<span class="t" style="top:225.0px;line-height:17px;font-size:13px;left:165.7px;width:10.7px;text-align:center;transform-origin:50% 50%;transform:scaleX(1.0000);">S</span>
<span class="t" style="top:225.0px;line-height:17px;font-size:13px;left:186.0px;width:9.9px;text-align:center;transform-origin:50% 50%;transform:scaleX(1.0000);">T</span>
<span class="t" style="top:225.0px;line-height:17px;font-size:13px;left:204.9px;width:12.1px;text-align:center;transform-origin:50% 50%;transform:scaleX(1.0000);">Q</span>
<span class="t" style="top:225.0px;line-height:17px;font-size:13px;left:224.9px;width:12.1px;text-align:center;transform-origin:50% 50%;transform:scaleX(1.0000);">Q</span>
<span class="t" style="top:225.0px;line-height:17px;font-size:13px;left:245.7px;width:10.7px;text-align:center;transform-origin:50% 50%;transform:scaleX(1.0000);">S</span>
<span class="t" style="top:225.0px;line-height:17px;font-size:13px;left:265.7px;width:10.7px;text-align:center;transform-origin:50% 50%;transform:scaleX(1.0000);">S</span>
<div class="" style="left:137px;top:242px;width:141px;height:1px;background:#000;"></div>
<span class="t" style="top:245.0px;line-height:17px;font-size:13px;color:#7f7f7f;left:142.1px;width:16.5px;margin-left:-2px;text-align:right;transform-origin:100% 50%;transform:scaleX(1.0000);">27</span>
<span class="t" style="top:245.0px;line-height:17px;font-size:13px;color:#7f7f7f;left:162.1px;width:16.5px;margin-left:-2px;text-align:right;transform-origin:100% 50%;transform:scaleX(1.0000);">28</span>
<span class="t" style="top:245.0px;line-height:17px;font-size:13px;color:#7f7f7f;left:182.1px;width:16.5px;margin-left:-2px;text-align:right;transform-origin:100% 50%;transform:scaleX(1.0000);">29</span>
<span class="t" style="top:245.0px;line-height:17px;font-size:13px;color:#7f7f7f;left:202.1px;width:16.5px;margin-left:-2px;text-align:right;transform-origin:100% 50%;transform:scaleX(1.0000);">30</span>
<span class="t" style="top:245.0px;line-height:17px;font-size:13px;color:#7f7f7f;left:222.1px;width:16.5px;margin-left:-2px;text-align:right;transform-origin:100% 50%;transform:scaleX(1.0000);">31</span>
<span class="t" style="top:245.0px;line-height:17px;font-size:13px;color:#7f7f7f;left:249.4px;width:9.2px;margin-left:-2px;text-align:right;transform-origin:100% 50%;transform:scaleX(1.0000);">1</span>
<span class="t" style="top:245.0px;line-height:17px;font-size:13px;color:#7f7f7f;left:269.4px;width:9.2px;margin-left:-2px;text-align:right;transform-origin:100% 50%;transform:scaleX(1.0000);">2</span>
<span class="t" style="top:263.0px;line-height:17px;font-size:13px;color:#7f7f7f;left:149.4px;width:9.2px;margin-left:-2px;text-align:right;transform-origin:100% 50%;transform:scaleX(1.0000);">3</span>
<span class="t" style="top:263.0px;line-height:17px;font-size:13px;color:#7f7f7f;left:169.4px;width:9.2px;margin-left:-2px;text-align:right;transform-origin:100% 50%;transform:scaleX(1.0000);">4</span>
<span class="t" style="top:263.0px;line-height:17px;font-size:13px;color:#7f7f7f;left:189.4px;width:9.2px;margin-left:-2px;text-align:right;transform-origin:100% 50%;transform:scaleX(1.0000);">5</span>
<span class="t" style="top:263.0px;line-height:17px;font-size:13px;color:#7f7f7f;left:209.4px;width:9.2px;margin-left:-2px;text-align:right;transform-origin:100% 50%;transform:scaleX(1.0000);">6</span>
<span class="t" style="top:263.0px;line-height:17px;font-size:13px;color:#7f7f7f;left:229.4px;width:9.2px;margin-left:-2px;text-align:right;transform-origin:100% 50%;transform:scaleX(1.0000);">7</span>
<span class="t" style="top:263.0px;line-height:17px;font-size:13px;color:#7f7f7f;left:249.4px;width:9.2px;margin-left:-2px;text-align:right;transform-origin:100% 50%;transform:scaleX(1.0000);">8</span>
<span class="t" style="top:263.0px;line-height:17px;font-size:13px;color:#7f7f7f;left:269.4px;width:9.2px;margin-left:-2px;text-align:right;transform-origin:100% 50%;transform:scaleX(1.0000);">9</span>
<span class="t" style="top:281.0px;line-height:17px;font-size:13px;color:#7f7f7f;left:142.1px;width:16.5px;margin-left:-2px;text-align:right;transform-origin:100% 50%;transform:scaleX(1.0000);">10</span>
<span class="t" style="top:281.0px;line-height:17px;font-size:13px;color:#7f7f7f;left:163.1px;width:15.5px;margin-left:-2px;text-align:right;transform-origin:100% 50%;transform:scaleX(1.0000);">11</span>
<span class="t" style="top:281.0px;line-height:17px;font-size:13px;color:#7f7f7f;left:182.1px;width:16.5px;margin-left:-2px;text-align:right;transform-origin:100% 50%;transform:scaleX(1.0000);">12</span>
<span class="t" style="top:281.0px;line-height:17px;font-size:13px;color:#7f7f7f;left:202.1px;width:16.5px;margin-left:-2px;text-align:right;transform-origin:100% 50%;transform:scaleX(1.0000);">13</span>
<span class="t" style="top:281.0px;line-height:17px;font-size:13px;color:#7f7f7f;left:222.1px;width:16.5px;margin-left:-2px;text-align:right;transform-origin:100% 50%;transform:scaleX(1.0000);">14</span>
<span class="t" style="top:281.0px;line-height:17px;font-size:13px;color:#7f7f7f;left:242.1px;width:16.5px;margin-left:-2px;text-align:right;transform-origin:100% 50%;transform:scaleX(1.0000);">15</span>
<span class="t" style="top:281.0px;line-height:17px;font-size:13px;color:#7f7f7f;left:262.1px;width:16.5px;margin-left:-2px;text-align:right;transform-origin:100% 50%;transform:scaleX(1.0000);">16</span>
<span class="t" style="top:299.0px;line-height:17px;font-size:13px;color:#7f7f7f;left:142.1px;width:16.5px;margin-left:-2px;text-align:right;transform-origin:100% 50%;transform:scaleX(1.0000);">17</span>
<span class="t" style="top:299.0px;line-height:17px;font-size:13px;color:#7f7f7f;left:162.1px;width:16.5px;margin-left:-2px;text-align:right;transform-origin:100% 50%;transform:scaleX(1.0000);">18</span>
<div class="" style="left:179px;top:298px;width:20px;height:18px;background:linear-gradient(#fde6c6 0%,#fbd49a 30%,#fbbc52 50%,#fcc66a 75%,#fddc9c 100%);border:1px solid #c8a468;border-radius:2.5px;"></div>
<span class="t" style="top:299.0px;line-height:17px;font-size:13px;font-weight:bold;color:#000;left:182.1px;width:16.5px;margin-left:-2px;text-align:right;transform-origin:100% 50%;transform:scaleX(1.0000);">19</span>
<div class="" style="left:181px;top:313px;width:16px;height:1px;background:#000;"></div>
<span class="t" style="top:299.0px;line-height:17px;font-size:13px;color:#008000;left:202.1px;width:16.5px;margin-left:-2px;text-align:right;transform-origin:100% 50%;transform:scaleX(1.0000);">20</span>
<span class="t" style="top:299.0px;line-height:17px;font-size:13px;color:#008000;left:222.1px;width:16.5px;margin-left:-2px;text-align:right;transform-origin:100% 50%;transform:scaleX(1.0000);">21</span>
<span class="t" style="top:299.0px;line-height:17px;font-size:13px;color:#008000;left:242.1px;width:16.5px;margin-left:-2px;text-align:right;transform-origin:100% 50%;transform:scaleX(1.0000);">22</span>
<span class="t" style="top:299.0px;line-height:17px;font-size:13px;color:#7f7f7f;left:262.1px;width:16.5px;margin-left:-2px;text-align:right;transform-origin:100% 50%;transform:scaleX(1.0000);">23</span>
<span class="t" style="top:317.0px;line-height:17px;font-size:13px;color:#7f7f7f;left:142.1px;width:16.5px;margin-left:-2px;text-align:right;transform-origin:100% 50%;transform:scaleX(1.0000);">24</span>
<span class="t" style="top:317.0px;line-height:17px;font-size:13px;color:#008000;left:162.1px;width:16.5px;margin-left:-2px;text-align:right;transform-origin:100% 50%;transform:scaleX(1.0000);">25</span>
<span class="t" style="top:317.0px;line-height:17px;font-size:13px;color:#008000;left:182.1px;width:16.5px;margin-left:-2px;text-align:right;transform-origin:100% 50%;transform:scaleX(1.0000);">26</span>
<span class="t" style="top:317.0px;line-height:17px;font-size:13px;color:#008000;left:202.1px;width:16.5px;margin-left:-2px;text-align:right;transform-origin:100% 50%;transform:scaleX(1.0000);">27</span>
<span class="t" style="top:317.0px;line-height:17px;font-size:13px;color:#008000;left:222.1px;width:16.5px;margin-left:-2px;text-align:right;transform-origin:100% 50%;transform:scaleX(1.0000);">28</span>
<span class="t" style="top:317.0px;line-height:17px;font-size:13px;color:#008000;left:242.1px;width:16.5px;margin-left:-2px;text-align:right;transform-origin:100% 50%;transform:scaleX(1.0000);">29</span>
<span class="t" style="top:317.0px;line-height:17px;font-size:13px;color:#7f7f7f;left:262.1px;width:16.5px;margin-left:-2px;text-align:right;transform-origin:100% 50%;transform:scaleX(1.0000);">30</span>
<span class="t" style="top:335.0px;line-height:17px;font-size:13px;color:#7f7f7f;left:142.1px;width:16.5px;margin-left:-2px;text-align:right;transform-origin:100% 50%;transform:scaleX(1.0000);">31</span>
<div class="" style="left:290px;top:205px;width:1px;height:19px;background:#6e7076;"></div>
<div class="" style="left:291px;top:205px;width:1px;height:19px;background:rgba(255,255,255,.45);"></div>
<span class="t" style="top:206.0px;line-height:17px;font-size:13px;left:322.8px;width:103.2px;text-align:center;transform-origin:50% 50%;transform:scaleX(1.0000);">fevereiro de 2021</span>
<span class="t" style="top:225.0px;line-height:17px;font-size:13px;left:313.3px;width:11.4px;text-align:center;transform-origin:50% 50%;transform:scaleX(1.0000);">D</span>
<span class="t" style="top:225.0px;line-height:17px;font-size:13px;left:333.7px;width:10.7px;text-align:center;transform-origin:50% 50%;transform:scaleX(1.0000);">S</span>
<span class="t" style="top:225.0px;line-height:17px;font-size:13px;left:354.0px;width:9.9px;text-align:center;transform-origin:50% 50%;transform:scaleX(1.0000);">T</span>
<span class="t" style="top:225.0px;line-height:17px;font-size:13px;left:372.9px;width:12.1px;text-align:center;transform-origin:50% 50%;transform:scaleX(1.0000);">Q</span>
<span class="t" style="top:225.0px;line-height:17px;font-size:13px;left:392.9px;width:12.1px;text-align:center;transform-origin:50% 50%;transform:scaleX(1.0000);">Q</span>
<span class="t" style="top:225.0px;line-height:17px;font-size:13px;left:413.7px;width:10.7px;text-align:center;transform-origin:50% 50%;transform:scaleX(1.0000);">S</span>
<span class="t" style="top:225.0px;line-height:17px;font-size:13px;left:433.7px;width:10.7px;text-align:center;transform-origin:50% 50%;transform:scaleX(1.0000);">S</span>
<div class="" style="left:305px;top:242px;width:141px;height:1px;background:#000;"></div>
<span class="t" style="top:245.0px;line-height:17px;font-size:13px;color:#008000;left:337.4px;width:9.2px;margin-left:-2px;text-align:right;transform-origin:100% 50%;transform:scaleX(1.0000);">1</span>
<span class="t" style="top:245.0px;line-height:17px;font-size:13px;color:#008000;left:357.4px;width:9.2px;margin-left:-2px;text-align:right;transform-origin:100% 50%;transform:scaleX(1.0000);">2</span>
<span class="t" style="top:245.0px;line-height:17px;font-size:13px;color:#008000;left:377.4px;width:9.2px;margin-left:-2px;text-align:right;transform-origin:100% 50%;transform:scaleX(1.0000);">3</span>
<span class="t" style="top:245.0px;line-height:17px;font-size:13px;color:#008000;left:397.4px;width:9.2px;margin-left:-2px;text-align:right;transform-origin:100% 50%;transform:scaleX(1.0000);">4</span>
<span class="t" style="top:245.0px;line-height:17px;font-size:13px;color:#008000;left:417.4px;width:9.2px;margin-left:-2px;text-align:right;transform-origin:100% 50%;transform:scaleX(1.0000);">5</span>
<span class="t" style="top:245.0px;line-height:17px;font-size:13px;color:#7f7f7f;left:437.4px;width:9.2px;margin-left:-2px;text-align:right;transform-origin:100% 50%;transform:scaleX(1.0000);">6</span>
<span class="t" style="top:263.0px;line-height:17px;font-size:13px;color:#7f7f7f;left:317.4px;width:9.2px;margin-left:-2px;text-align:right;transform-origin:100% 50%;transform:scaleX(1.0000);">7</span>
<span class="t" style="top:263.0px;line-height:17px;font-size:13px;color:#008000;left:337.4px;width:9.2px;margin-left:-2px;text-align:right;transform-origin:100% 50%;transform:scaleX(1.0000);">8</span>
<span class="t" style="top:263.0px;line-height:17px;font-size:13px;color:#008000;left:357.4px;width:9.2px;margin-left:-2px;text-align:right;transform-origin:100% 50%;transform:scaleX(1.0000);">9</span>
<span class="t" style="top:263.0px;line-height:17px;font-size:13px;color:#008000;left:370.1px;width:16.5px;margin-left:-2px;text-align:right;transform-origin:100% 50%;transform:scaleX(1.0000);">10</span>
<span class="t" style="top:263.0px;line-height:17px;font-size:13px;color:#008000;left:391.1px;width:15.5px;margin-left:-2px;text-align:right;transform-origin:100% 50%;transform:scaleX(1.0000);">11</span>
<span class="t" style="top:263.0px;line-height:17px;font-size:13px;color:#008000;left:410.1px;width:16.5px;margin-left:-2px;text-align:right;transform-origin:100% 50%;transform:scaleX(1.0000);">12</span>
<span class="t" style="top:263.0px;line-height:17px;font-size:13px;color:#7f7f7f;left:430.1px;width:16.5px;margin-left:-2px;text-align:right;transform-origin:100% 50%;transform:scaleX(1.0000);">13</span>
<span class="t" style="top:281.0px;line-height:17px;font-size:13px;color:#7f7f7f;left:310.1px;width:16.5px;margin-left:-2px;text-align:right;transform-origin:100% 50%;transform:scaleX(1.0000);">14</span>
<span class="t" style="top:281.0px;line-height:17px;font-size:13px;color:#008000;left:330.1px;width:16.5px;margin-left:-2px;text-align:right;transform-origin:100% 50%;transform:scaleX(1.0000);">15</span>
<span class="t" style="top:281.0px;line-height:17px;font-size:13px;color:#008000;left:350.1px;width:16.5px;margin-left:-2px;text-align:right;transform-origin:100% 50%;transform:scaleX(1.0000);">16</span>
<span class="t" style="top:281.0px;line-height:17px;font-size:13px;color:#008000;left:370.1px;width:16.5px;margin-left:-2px;text-align:right;transform-origin:100% 50%;transform:scaleX(1.0000);">17</span>
<span class="t" style="top:281.0px;line-height:17px;font-size:13px;color:#008000;left:390.1px;width:16.5px;margin-left:-2px;text-align:right;transform-origin:100% 50%;transform:scaleX(1.0000);">18</span>
<span class="t" style="top:281.0px;line-height:17px;font-size:13px;color:#008000;left:410.1px;width:16.5px;margin-left:-2px;text-align:right;transform-origin:100% 50%;transform:scaleX(1.0000);">19</span>
<span class="t" style="top:281.0px;line-height:17px;font-size:13px;color:#7f7f7f;left:430.1px;width:16.5px;margin-left:-2px;text-align:right;transform-origin:100% 50%;transform:scaleX(1.0000);">20</span>
<span class="t" style="top:299.0px;line-height:17px;font-size:13px;color:#7f7f7f;left:310.1px;width:16.5px;margin-left:-2px;text-align:right;transform-origin:100% 50%;transform:scaleX(1.0000);">21</span>
<span class="t" style="top:299.0px;line-height:17px;font-size:13px;color:#008000;left:330.1px;width:16.5px;margin-left:-2px;text-align:right;transform-origin:100% 50%;transform:scaleX(1.0000);">22</span>
<span class="t" style="top:299.0px;line-height:17px;font-size:13px;color:#008000;left:350.1px;width:16.5px;margin-left:-2px;text-align:right;transform-origin:100% 50%;transform:scaleX(1.0000);">23</span>
<span class="t" style="top:299.0px;line-height:17px;font-size:13px;color:#008000;left:370.1px;width:16.5px;margin-left:-2px;text-align:right;transform-origin:100% 50%;transform:scaleX(1.0000);">24</span>
<span class="t" style="top:299.0px;line-height:17px;font-size:13px;color:#008000;left:390.1px;width:16.5px;margin-left:-2px;text-align:right;transform-origin:100% 50%;transform:scaleX(1.0000);">25</span>
<span class="t" style="top:299.0px;line-height:17px;font-size:13px;color:#008000;left:410.1px;width:16.5px;margin-left:-2px;text-align:right;transform-origin:100% 50%;transform:scaleX(1.0000);">26</span>
<span class="t" style="top:299.0px;line-height:17px;font-size:13px;color:#7f7f7f;left:430.1px;width:16.5px;margin-left:-2px;text-align:right;transform-origin:100% 50%;transform:scaleX(1.0000);">27</span>
<span class="t" style="top:317.0px;line-height:17px;font-size:13px;color:#7f7f7f;left:310.1px;width:16.5px;margin-left:-2px;text-align:right;transform-origin:100% 50%;transform:scaleX(1.0000);">28</span>
<div class="" style="left:458px;top:205px;width:1px;height:19px;background:#6e7076;"></div>
<div class="" style="left:459px;top:205px;width:1px;height:19px;background:rgba(255,255,255,.45);"></div>
<span class="t" style="top:206.0px;line-height:17px;font-size:13px;left:498.0px;width:88.7px;text-align:center;transform-origin:50% 50%;transform:scaleX(1.0000);">março de 2021</span>
<span class="t" style="top:225.0px;line-height:17px;font-size:13px;left:481.3px;width:11.4px;text-align:center;transform-origin:50% 50%;transform:scaleX(1.0000);">D</span>
<span class="t" style="top:225.0px;line-height:17px;font-size:13px;left:501.7px;width:10.7px;text-align:center;transform-origin:50% 50%;transform:scaleX(1.0000);">S</span>
<span class="t" style="top:225.0px;line-height:17px;font-size:13px;left:522.0px;width:9.9px;text-align:center;transform-origin:50% 50%;transform:scaleX(1.0000);">T</span>
<span class="t" style="top:225.0px;line-height:17px;font-size:13px;left:540.9px;width:12.1px;text-align:center;transform-origin:50% 50%;transform:scaleX(1.0000);">Q</span>
<span class="t" style="top:225.0px;line-height:17px;font-size:13px;left:560.9px;width:12.1px;text-align:center;transform-origin:50% 50%;transform:scaleX(1.0000);">Q</span>
<span class="t" style="top:225.0px;line-height:17px;font-size:13px;left:581.7px;width:10.7px;text-align:center;transform-origin:50% 50%;transform:scaleX(1.0000);">S</span>
<span class="t" style="top:225.0px;line-height:17px;font-size:13px;left:601.7px;width:10.7px;text-align:center;transform-origin:50% 50%;transform:scaleX(1.0000);">S</span>
<div class="" style="left:473px;top:242px;width:141px;height:1px;background:#000;"></div>
<span class="t" style="top:245.0px;line-height:17px;font-size:13px;color:#008000;left:505.4px;width:9.2px;margin-left:-2px;text-align:right;transform-origin:100% 50%;transform:scaleX(1.0000);">1</span>
<span class="t" style="top:245.0px;line-height:17px;font-size:13px;color:#008000;left:525.4px;width:9.2px;margin-left:-2px;text-align:right;transform-origin:100% 50%;transform:scaleX(1.0000);">2</span>
<span class="t" style="top:245.0px;line-height:17px;font-size:13px;color:#008000;left:545.4px;width:9.2px;margin-left:-2px;text-align:right;transform-origin:100% 50%;transform:scaleX(1.0000);">3</span>
<span class="t" style="top:245.0px;line-height:17px;font-size:13px;color:#008000;left:565.4px;width:9.2px;margin-left:-2px;text-align:right;transform-origin:100% 50%;transform:scaleX(1.0000);">4</span>
<span class="t" style="top:245.0px;line-height:17px;font-size:13px;color:#008000;left:585.4px;width:9.2px;margin-left:-2px;text-align:right;transform-origin:100% 50%;transform:scaleX(1.0000);">5</span>
<span class="t" style="top:245.0px;line-height:17px;font-size:13px;color:#7f7f7f;left:605.4px;width:9.2px;margin-left:-2px;text-align:right;transform-origin:100% 50%;transform:scaleX(1.0000);">6</span>
<span class="t" style="top:263.0px;line-height:17px;font-size:13px;color:#7f7f7f;left:485.4px;width:9.2px;margin-left:-2px;text-align:right;transform-origin:100% 50%;transform:scaleX(1.0000);">7</span>
<span class="t" style="top:263.0px;line-height:17px;font-size:13px;color:#008000;left:505.4px;width:9.2px;margin-left:-2px;text-align:right;transform-origin:100% 50%;transform:scaleX(1.0000);">8</span>
<span class="t" style="top:263.0px;line-height:17px;font-size:13px;color:#008000;left:525.4px;width:9.2px;margin-left:-2px;text-align:right;transform-origin:100% 50%;transform:scaleX(1.0000);">9</span>
<span class="t" style="top:263.0px;line-height:17px;font-size:13px;color:#008000;left:538.1px;width:16.5px;margin-left:-2px;text-align:right;transform-origin:100% 50%;transform:scaleX(1.0000);">10</span>
<span class="t" style="top:263.0px;line-height:17px;font-size:13px;color:#008000;left:559.1px;width:15.5px;margin-left:-2px;text-align:right;transform-origin:100% 50%;transform:scaleX(1.0000);">11</span>
<span class="t" style="top:263.0px;line-height:17px;font-size:13px;color:#008000;left:578.1px;width:16.5px;margin-left:-2px;text-align:right;transform-origin:100% 50%;transform:scaleX(1.0000);">12</span>
<span class="t" style="top:263.0px;line-height:17px;font-size:13px;color:#7f7f7f;left:598.1px;width:16.5px;margin-left:-2px;text-align:right;transform-origin:100% 50%;transform:scaleX(1.0000);">13</span>
<span class="t" style="top:281.0px;line-height:17px;font-size:13px;color:#7f7f7f;left:478.1px;width:16.5px;margin-left:-2px;text-align:right;transform-origin:100% 50%;transform:scaleX(1.0000);">14</span>
<span class="t" style="top:281.0px;line-height:17px;font-size:13px;color:#008000;left:498.1px;width:16.5px;margin-left:-2px;text-align:right;transform-origin:100% 50%;transform:scaleX(1.0000);">15</span>
<span class="t" style="top:281.0px;line-height:17px;font-size:13px;color:#008000;left:518.1px;width:16.5px;margin-left:-2px;text-align:right;transform-origin:100% 50%;transform:scaleX(1.0000);">16</span>
<span class="t" style="top:281.0px;line-height:17px;font-size:13px;color:#008000;left:538.1px;width:16.5px;margin-left:-2px;text-align:right;transform-origin:100% 50%;transform:scaleX(1.0000);">17</span>
<span class="t" style="top:281.0px;line-height:17px;font-size:13px;color:#008000;left:558.1px;width:16.5px;margin-left:-2px;text-align:right;transform-origin:100% 50%;transform:scaleX(1.0000);">18</span>
<span class="t" style="top:281.0px;line-height:17px;font-size:13px;color:#008000;left:578.1px;width:16.5px;margin-left:-2px;text-align:right;transform-origin:100% 50%;transform:scaleX(1.0000);">19</span>
<span class="t" style="top:281.0px;line-height:17px;font-size:13px;color:#7f7f7f;left:598.1px;width:16.5px;margin-left:-2px;text-align:right;transform-origin:100% 50%;transform:scaleX(1.0000);">20</span>
<span class="t" style="top:299.0px;line-height:17px;font-size:13px;color:#7f7f7f;left:478.1px;width:16.5px;margin-left:-2px;text-align:right;transform-origin:100% 50%;transform:scaleX(1.0000);">21</span>
<span class="t" style="top:299.0px;line-height:17px;font-size:13px;color:#008000;left:498.1px;width:16.5px;margin-left:-2px;text-align:right;transform-origin:100% 50%;transform:scaleX(1.0000);">22</span>
<span class="t" style="top:299.0px;line-height:17px;font-size:13px;color:#008000;left:518.1px;width:16.5px;margin-left:-2px;text-align:right;transform-origin:100% 50%;transform:scaleX(1.0000);">23</span>
<span class="t" style="top:299.0px;line-height:17px;font-size:13px;color:#008000;left:538.1px;width:16.5px;margin-left:-2px;text-align:right;transform-origin:100% 50%;transform:scaleX(1.0000);">24</span>
<span class="t" style="top:299.0px;line-height:17px;font-size:13px;color:#008000;left:558.1px;width:16.5px;margin-left:-2px;text-align:right;transform-origin:100% 50%;transform:scaleX(1.0000);">25</span>
<span class="t" style="top:299.0px;line-height:17px;font-size:13px;color:#008000;left:578.1px;width:16.5px;margin-left:-2px;text-align:right;transform-origin:100% 50%;transform:scaleX(1.0000);">26</span>
<span class="t" style="top:299.0px;line-height:17px;font-size:13px;color:#7f7f7f;left:598.1px;width:16.5px;margin-left:-2px;text-align:right;transform-origin:100% 50%;transform:scaleX(1.0000);">27</span>
<span class="t" style="top:317.0px;line-height:17px;font-size:13px;color:#7f7f7f;left:478.1px;width:16.5px;margin-left:-2px;text-align:right;transform-origin:100% 50%;transform:scaleX(1.0000);">28</span>
<span class="t" style="top:317.0px;line-height:17px;font-size:13px;color:#008000;left:498.1px;width:16.5px;margin-left:-2px;text-align:right;transform-origin:100% 50%;transform:scaleX(1.0000);">29</span>
<span class="t" style="top:317.0px;line-height:17px;font-size:13px;color:#008000;left:518.1px;width:16.5px;margin-left:-2px;text-align:right;transform-origin:100% 50%;transform:scaleX(1.0000);">30</span>
<span class="t" style="top:317.0px;line-height:17px;font-size:13px;color:#008000;left:538.1px;width:16.5px;margin-left:-2px;text-align:right;transform-origin:100% 50%;transform:scaleX(1.0000);">31</span>
<div class="" style="left:626px;top:205px;width:1px;height:19px;background:#6e7076;"></div>
<div class="" style="left:627px;top:205px;width:1px;height:19px;background:rgba(255,255,255,.45);"></div>
<span class="t" style="top:206.0px;line-height:17px;font-size:13px;left:671.8px;width:77.2px;text-align:center;transform-origin:50% 50%;transform:scaleX(1.0000);">abril de 2021</span>
<span class="t" style="top:225.0px;line-height:17px;font-size:13px;left:649.3px;width:11.4px;text-align:center;transform-origin:50% 50%;transform:scaleX(1.0000);">D</span>
<span class="t" style="top:225.0px;line-height:17px;font-size:13px;left:669.7px;width:10.7px;text-align:center;transform-origin:50% 50%;transform:scaleX(1.0000);">S</span>
<span class="t" style="top:225.0px;line-height:17px;font-size:13px;left:690.0px;width:9.9px;text-align:center;transform-origin:50% 50%;transform:scaleX(1.0000);">T</span>
<span class="t" style="top:225.0px;line-height:17px;font-size:13px;left:708.9px;width:12.1px;text-align:center;transform-origin:50% 50%;transform:scaleX(1.0000);">Q</span>
<span class="t" style="top:225.0px;line-height:17px;font-size:13px;left:728.9px;width:12.1px;text-align:center;transform-origin:50% 50%;transform:scaleX(1.0000);">Q</span>
<span class="t" style="top:225.0px;line-height:17px;font-size:13px;left:749.7px;width:10.7px;text-align:center;transform-origin:50% 50%;transform:scaleX(1.0000);">S</span>
<span class="t" style="top:225.0px;line-height:17px;font-size:13px;left:769.7px;width:10.7px;text-align:center;transform-origin:50% 50%;transform:scaleX(1.0000);">S</span>
<div class="" style="left:641px;top:242px;width:141px;height:1px;background:#000;"></div>
<span class="t" style="top:245.0px;line-height:17px;font-size:13px;color:#008000;left:733.4px;width:9.2px;margin-left:-2px;text-align:right;transform-origin:100% 50%;transform:scaleX(1.0000);">1</span>
<span class="t" style="top:245.0px;line-height:17px;font-size:13px;color:#008000;left:753.4px;width:9.2px;margin-left:-2px;text-align:right;transform-origin:100% 50%;transform:scaleX(1.0000);">2</span>
<span class="t" style="top:245.0px;line-height:17px;font-size:13px;color:#7f7f7f;left:773.4px;width:9.2px;margin-left:-2px;text-align:right;transform-origin:100% 50%;transform:scaleX(1.0000);">3</span>
<span class="t" style="top:263.0px;line-height:17px;font-size:13px;color:#7f7f7f;left:653.4px;width:9.2px;margin-left:-2px;text-align:right;transform-origin:100% 50%;transform:scaleX(1.0000);">4</span>
<span class="t" style="top:263.0px;line-height:17px;font-size:13px;color:#008000;left:673.4px;width:9.2px;margin-left:-2px;text-align:right;transform-origin:100% 50%;transform:scaleX(1.0000);">5</span>
<span class="t" style="top:263.0px;line-height:17px;font-size:13px;color:#008000;left:693.4px;width:9.2px;margin-left:-2px;text-align:right;transform-origin:100% 50%;transform:scaleX(1.0000);">6</span>
<span class="t" style="top:263.0px;line-height:17px;font-size:13px;color:#008000;left:713.4px;width:9.2px;margin-left:-2px;text-align:right;transform-origin:100% 50%;transform:scaleX(1.0000);">7</span>
<span class="t" style="top:263.0px;line-height:17px;font-size:13px;color:#008000;left:733.4px;width:9.2px;margin-left:-2px;text-align:right;transform-origin:100% 50%;transform:scaleX(1.0000);">8</span>
<span class="t" style="top:263.0px;line-height:17px;font-size:13px;color:#008000;left:753.4px;width:9.2px;margin-left:-2px;text-align:right;transform-origin:100% 50%;transform:scaleX(1.0000);">9</span>
<span class="t" style="top:263.0px;line-height:17px;font-size:13px;color:#7f7f7f;left:766.1px;width:16.5px;margin-left:-2px;text-align:right;transform-origin:100% 50%;transform:scaleX(1.0000);">10</span>
<span class="t" style="top:281.0px;line-height:17px;font-size:13px;color:#7f7f7f;left:647.1px;width:15.5px;margin-left:-2px;text-align:right;transform-origin:100% 50%;transform:scaleX(1.0000);">11</span>
<span class="t" style="top:281.0px;line-height:17px;font-size:13px;color:#008000;left:666.1px;width:16.5px;margin-left:-2px;text-align:right;transform-origin:100% 50%;transform:scaleX(1.0000);">12</span>
<span class="t" style="top:281.0px;line-height:17px;font-size:13px;color:#008000;left:686.1px;width:16.5px;margin-left:-2px;text-align:right;transform-origin:100% 50%;transform:scaleX(1.0000);">13</span>
<span class="t" style="top:281.0px;line-height:17px;font-size:13px;color:#008000;left:706.1px;width:16.5px;margin-left:-2px;text-align:right;transform-origin:100% 50%;transform:scaleX(1.0000);">14</span>
<span class="t" style="top:281.0px;line-height:17px;font-size:13px;color:#008000;left:726.1px;width:16.5px;margin-left:-2px;text-align:right;transform-origin:100% 50%;transform:scaleX(1.0000);">15</span>
<span class="t" style="top:281.0px;line-height:17px;font-size:13px;color:#008000;left:746.1px;width:16.5px;margin-left:-2px;text-align:right;transform-origin:100% 50%;transform:scaleX(1.0000);">16</span>
<span class="t" style="top:281.0px;line-height:17px;font-size:13px;color:#7f7f7f;left:766.1px;width:16.5px;margin-left:-2px;text-align:right;transform-origin:100% 50%;transform:scaleX(1.0000);">17</span>
<span class="t" style="top:299.0px;line-height:17px;font-size:13px;color:#7f7f7f;left:646.1px;width:16.5px;margin-left:-2px;text-align:right;transform-origin:100% 50%;transform:scaleX(1.0000);">18</span>
<span class="t" style="top:299.0px;line-height:17px;font-size:13px;color:#008000;left:666.1px;width:16.5px;margin-left:-2px;text-align:right;transform-origin:100% 50%;transform:scaleX(1.0000);">19</span>
<span class="t" style="top:299.0px;line-height:17px;font-size:13px;color:#008000;left:686.1px;width:16.5px;margin-left:-2px;text-align:right;transform-origin:100% 50%;transform:scaleX(1.0000);">20</span>
<span class="t" style="top:299.0px;line-height:17px;font-size:13px;color:#008000;left:706.1px;width:16.5px;margin-left:-2px;text-align:right;transform-origin:100% 50%;transform:scaleX(1.0000);">21</span>
<span class="t" style="top:299.0px;line-height:17px;font-size:13px;color:#008000;left:726.1px;width:16.5px;margin-left:-2px;text-align:right;transform-origin:100% 50%;transform:scaleX(1.0000);">22</span>
<span class="t" style="top:299.0px;line-height:17px;font-size:13px;color:#008000;left:746.1px;width:16.5px;margin-left:-2px;text-align:right;transform-origin:100% 50%;transform:scaleX(1.0000);">23</span>
<span class="t" style="top:299.0px;line-height:17px;font-size:13px;color:#7f7f7f;left:766.1px;width:16.5px;margin-left:-2px;text-align:right;transform-origin:100% 50%;transform:scaleX(1.0000);">24</span>
<span class="t" style="top:317.0px;line-height:17px;font-size:13px;color:#7f7f7f;left:646.1px;width:16.5px;margin-left:-2px;text-align:right;transform-origin:100% 50%;transform:scaleX(1.0000);">25</span>
<span class="t" style="top:317.0px;line-height:17px;font-size:13px;color:#008000;left:666.1px;width:16.5px;margin-left:-2px;text-align:right;transform-origin:100% 50%;transform:scaleX(1.0000);">26</span>
<span class="t" style="top:317.0px;line-height:17px;font-size:13px;color:#008000;left:686.1px;width:16.5px;margin-left:-2px;text-align:right;transform-origin:100% 50%;transform:scaleX(1.0000);">27</span>
<span class="t" style="top:317.0px;line-height:17px;font-size:13px;color:#008000;left:706.1px;width:16.5px;margin-left:-2px;text-align:right;transform-origin:100% 50%;transform:scaleX(1.0000);">28</span>
<span class="t" style="top:317.0px;line-height:17px;font-size:13px;color:#008000;left:726.1px;width:16.5px;margin-left:-2px;text-align:right;transform-origin:100% 50%;transform:scaleX(1.0000);">29</span>
<span class="t" style="top:317.0px;line-height:17px;font-size:13px;color:#008000;left:746.1px;width:16.5px;margin-left:-2px;text-align:right;transform-origin:100% 50%;transform:scaleX(1.0000);">30</span>
<div class="" style="left:794px;top:205px;width:1px;height:19px;background:#6e7076;"></div>
<div class="" style="left:795px;top:205px;width:1px;height:19px;background:rgba(255,255,255,.45);"></div>
<span class="t" style="top:206.0px;line-height:17px;font-size:13px;left:838.0px;width:80.8px;text-align:center;transform-origin:50% 50%;transform:scaleX(1.0000);">maio de 2021</span>
<span class="t" style="top:225.0px;line-height:17px;font-size:13px;left:817.3px;width:11.4px;text-align:center;transform-origin:50% 50%;transform:scaleX(1.0000);">D</span>
<span class="t" style="top:225.0px;line-height:17px;font-size:13px;left:837.7px;width:10.7px;text-align:center;transform-origin:50% 50%;transform:scaleX(1.0000);">S</span>
<span class="t" style="top:225.0px;line-height:17px;font-size:13px;left:858.0px;width:9.9px;text-align:center;transform-origin:50% 50%;transform:scaleX(1.0000);">T</span>
<span class="t" style="top:225.0px;line-height:17px;font-size:13px;left:876.9px;width:12.1px;text-align:center;transform-origin:50% 50%;transform:scaleX(1.0000);">Q</span>
<span class="t" style="top:225.0px;line-height:17px;font-size:13px;left:896.9px;width:12.1px;text-align:center;transform-origin:50% 50%;transform:scaleX(1.0000);">Q</span>
<span class="t" style="top:225.0px;line-height:17px;font-size:13px;left:917.7px;width:10.7px;text-align:center;transform-origin:50% 50%;transform:scaleX(1.0000);">S</span>
<span class="t" style="top:225.0px;line-height:17px;font-size:13px;left:937.7px;width:10.7px;text-align:center;transform-origin:50% 50%;transform:scaleX(1.0000);">S</span>
<div class="" style="left:809px;top:242px;width:141px;height:1px;background:#000;"></div>
<span class="t" style="top:245.0px;line-height:17px;font-size:13px;color:#7f7f7f;left:941.4px;width:9.2px;margin-left:-2px;text-align:right;transform-origin:100% 50%;transform:scaleX(1.0000);">1</span>
<span class="t" style="top:263.0px;line-height:17px;font-size:13px;color:#7f7f7f;left:821.4px;width:9.2px;margin-left:-2px;text-align:right;transform-origin:100% 50%;transform:scaleX(1.0000);">2</span>
<span class="t" style="top:263.0px;line-height:17px;font-size:13px;color:#008000;left:841.4px;width:9.2px;margin-left:-2px;text-align:right;transform-origin:100% 50%;transform:scaleX(1.0000);">3</span>
<span class="t" style="top:263.0px;line-height:17px;font-size:13px;color:#008000;left:861.4px;width:9.2px;margin-left:-2px;text-align:right;transform-origin:100% 50%;transform:scaleX(1.0000);">4</span>
<span class="t" style="top:263.0px;line-height:17px;font-size:13px;color:#008000;left:881.4px;width:9.2px;margin-left:-2px;text-align:right;transform-origin:100% 50%;transform:scaleX(1.0000);">5</span>
<span class="t" style="top:263.0px;line-height:17px;font-size:13px;color:#008000;left:901.4px;width:9.2px;margin-left:-2px;text-align:right;transform-origin:100% 50%;transform:scaleX(1.0000);">6</span>
<span class="t" style="top:263.0px;line-height:17px;font-size:13px;color:#008000;left:921.4px;width:9.2px;margin-left:-2px;text-align:right;transform-origin:100% 50%;transform:scaleX(1.0000);">7</span>
<span class="t" style="top:263.0px;line-height:17px;font-size:13px;color:#7f7f7f;left:941.4px;width:9.2px;margin-left:-2px;text-align:right;transform-origin:100% 50%;transform:scaleX(1.0000);">8</span>
<span class="t" style="top:281.0px;line-height:17px;font-size:13px;color:#7f7f7f;left:821.4px;width:9.2px;margin-left:-2px;text-align:right;transform-origin:100% 50%;transform:scaleX(1.0000);">9</span>
<span class="t" style="top:281.0px;line-height:17px;font-size:13px;color:#008000;left:834.1px;width:16.5px;margin-left:-2px;text-align:right;transform-origin:100% 50%;transform:scaleX(1.0000);">10</span>
<span class="t" style="top:281.0px;line-height:17px;font-size:13px;color:#008000;left:855.1px;width:15.5px;margin-left:-2px;text-align:right;transform-origin:100% 50%;transform:scaleX(1.0000);">11</span>
<span class="t" style="top:281.0px;line-height:17px;font-size:13px;color:#008000;left:874.1px;width:16.5px;margin-left:-2px;text-align:right;transform-origin:100% 50%;transform:scaleX(1.0000);">12</span>
<span class="t" style="top:281.0px;line-height:17px;font-size:13px;color:#008000;left:894.1px;width:16.5px;margin-left:-2px;text-align:right;transform-origin:100% 50%;transform:scaleX(1.0000);">13</span>
<span class="t" style="top:281.0px;line-height:17px;font-size:13px;color:#008000;left:914.1px;width:16.5px;margin-left:-2px;text-align:right;transform-origin:100% 50%;transform:scaleX(1.0000);">14</span>
<span class="t" style="top:281.0px;line-height:17px;font-size:13px;color:#7f7f7f;left:934.1px;width:16.5px;margin-left:-2px;text-align:right;transform-origin:100% 50%;transform:scaleX(1.0000);">15</span>
<span class="t" style="top:299.0px;line-height:17px;font-size:13px;color:#7f7f7f;left:814.1px;width:16.5px;margin-left:-2px;text-align:right;transform-origin:100% 50%;transform:scaleX(1.0000);">16</span>
<span class="t" style="top:299.0px;line-height:17px;font-size:13px;color:#008000;left:834.1px;width:16.5px;margin-left:-2px;text-align:right;transform-origin:100% 50%;transform:scaleX(1.0000);">17</span>
<span class="t" style="top:299.0px;line-height:17px;font-size:13px;color:#008000;left:854.1px;width:16.5px;margin-left:-2px;text-align:right;transform-origin:100% 50%;transform:scaleX(1.0000);">18</span>
<span class="t" style="top:299.0px;line-height:17px;font-size:13px;color:#008000;left:874.1px;width:16.5px;margin-left:-2px;text-align:right;transform-origin:100% 50%;transform:scaleX(1.0000);">19</span>
<span class="t" style="top:299.0px;line-height:17px;font-size:13px;color:#7f7f7f;left:894.1px;width:16.5px;margin-left:-2px;text-align:right;transform-origin:100% 50%;transform:scaleX(1.0000);">20</span>
<span class="t" style="top:299.0px;line-height:17px;font-size:13px;color:#7f7f7f;left:914.1px;width:16.5px;margin-left:-2px;text-align:right;transform-origin:100% 50%;transform:scaleX(1.0000);">21</span>
<span class="t" style="top:299.0px;line-height:17px;font-size:13px;color:#7f7f7f;left:934.1px;width:16.5px;margin-left:-2px;text-align:right;transform-origin:100% 50%;transform:scaleX(1.0000);">22</span>
<span class="t" style="top:317.0px;line-height:17px;font-size:13px;color:#7f7f7f;left:814.1px;width:16.5px;margin-left:-2px;text-align:right;transform-origin:100% 50%;transform:scaleX(1.0000);">23</span>
<span class="t" style="top:317.0px;line-height:17px;font-size:13px;color:#7f7f7f;left:834.1px;width:16.5px;margin-left:-2px;text-align:right;transform-origin:100% 50%;transform:scaleX(1.0000);">24</span>
<span class="t" style="top:317.0px;line-height:17px;font-size:13px;color:#7f7f7f;left:854.1px;width:16.5px;margin-left:-2px;text-align:right;transform-origin:100% 50%;transform:scaleX(1.0000);">25</span>
<span class="t" style="top:317.0px;line-height:17px;font-size:13px;color:#7f7f7f;left:874.1px;width:16.5px;margin-left:-2px;text-align:right;transform-origin:100% 50%;transform:scaleX(1.0000);">26</span>
<span class="t" style="top:317.0px;line-height:17px;font-size:13px;color:#7f7f7f;left:894.1px;width:16.5px;margin-left:-2px;text-align:right;transform-origin:100% 50%;transform:scaleX(1.0000);">27</span>
<span class="t" style="top:317.0px;line-height:17px;font-size:13px;color:#7f7f7f;left:914.1px;width:16.5px;margin-left:-2px;text-align:right;transform-origin:100% 50%;transform:scaleX(1.0000);">28</span>
<span class="t" style="top:317.0px;line-height:17px;font-size:13px;color:#7f7f7f;left:934.1px;width:16.5px;margin-left:-2px;text-align:right;transform-origin:100% 50%;transform:scaleX(1.0000);">29</span>
<span class="t" style="top:335.0px;line-height:17px;font-size:13px;color:#7f7f7f;left:814.1px;width:16.5px;margin-left:-2px;text-align:right;transform-origin:100% 50%;transform:scaleX(1.0000);">30</span>
<span class="t" style="top:335.0px;line-height:17px;font-size:13px;color:#7f7f7f;left:834.1px;width:16.5px;margin-left:-2px;text-align:right;transform-origin:100% 50%;transform:scaleX(1.0000);">31</span>
<div class="" style="left:962px;top:205px;width:1px;height:19px;background:#6e7076;"></div>
<div class="" style="left:963px;top:205px;width:1px;height:19px;background:rgba(255,255,255,.45);"></div>
<span class="t" style="top:206.0px;line-height:17px;font-size:13px;left:1004.2px;width:84.4px;text-align:center;transform-origin:50% 50%;transform:scaleX(1.0000);">junho de 2021</span>
<span class="t" style="top:225.0px;line-height:17px;font-size:13px;left:985.3px;width:11.4px;text-align:center;transform-origin:50% 50%;transform:scaleX(1.0000);">D</span>
<span class="t" style="top:225.0px;line-height:17px;font-size:13px;left:1005.7px;width:10.7px;text-align:center;transform-origin:50% 50%;transform:scaleX(1.0000);">S</span>
<span class="t" style="top:225.0px;line-height:17px;font-size:13px;left:1026.0px;width:9.9px;text-align:center;transform-origin:50% 50%;transform:scaleX(1.0000);">T</span>
<span class="t" style="top:225.0px;line-height:17px;font-size:13px;left:1044.9px;width:12.1px;text-align:center;transform-origin:50% 50%;transform:scaleX(1.0000);">Q</span>
<span class="t" style="top:225.0px;line-height:17px;font-size:13px;left:1064.9px;width:12.1px;text-align:center;transform-origin:50% 50%;transform:scaleX(1.0000);">Q</span>
<span class="t" style="top:225.0px;line-height:17px;font-size:13px;left:1085.7px;width:10.7px;text-align:center;transform-origin:50% 50%;transform:scaleX(1.0000);">S</span>
<span class="t" style="top:225.0px;line-height:17px;font-size:13px;left:1105.7px;width:10.7px;text-align:center;transform-origin:50% 50%;transform:scaleX(1.0000);">S</span>
<div class="" style="left:977px;top:242px;width:141px;height:1px;background:#000;"></div>
<span class="t" style="top:245.0px;line-height:17px;font-size:13px;color:#7f7f7f;left:1029.4px;width:9.2px;margin-left:-2px;text-align:right;transform-origin:100% 50%;transform:scaleX(1.0000);">1</span>
<span class="t" style="top:245.0px;line-height:17px;font-size:13px;color:#7f7f7f;left:1049.4px;width:9.2px;margin-left:-2px;text-align:right;transform-origin:100% 50%;transform:scaleX(1.0000);">2</span>
<span class="t" style="top:245.0px;line-height:17px;font-size:13px;color:#7f7f7f;left:1069.4px;width:9.2px;margin-left:-2px;text-align:right;transform-origin:100% 50%;transform:scaleX(1.0000);">3</span>
<span class="t" style="top:245.0px;line-height:17px;font-size:13px;color:#7f7f7f;left:1089.4px;width:9.2px;margin-left:-2px;text-align:right;transform-origin:100% 50%;transform:scaleX(1.0000);">4</span>
<span class="t" style="top:245.0px;line-height:17px;font-size:13px;color:#7f7f7f;left:1109.4px;width:9.2px;margin-left:-2px;text-align:right;transform-origin:100% 50%;transform:scaleX(1.0000);">5</span>
<span class="t" style="top:263.0px;line-height:17px;font-size:13px;color:#7f7f7f;left:989.4px;width:9.2px;margin-left:-2px;text-align:right;transform-origin:100% 50%;transform:scaleX(1.0000);">6</span>
<span class="t" style="top:263.0px;line-height:17px;font-size:13px;color:#7f7f7f;left:1009.4px;width:9.2px;margin-left:-2px;text-align:right;transform-origin:100% 50%;transform:scaleX(1.0000);">7</span>
<span class="t" style="top:263.0px;line-height:17px;font-size:13px;color:#7f7f7f;left:1029.4px;width:9.2px;margin-left:-2px;text-align:right;transform-origin:100% 50%;transform:scaleX(1.0000);">8</span>
<span class="t" style="top:263.0px;line-height:17px;font-size:13px;color:#7f7f7f;left:1049.4px;width:9.2px;margin-left:-2px;text-align:right;transform-origin:100% 50%;transform:scaleX(1.0000);">9</span>
<span class="t" style="top:263.0px;line-height:17px;font-size:13px;color:#7f7f7f;left:1062.1px;width:16.5px;margin-left:-2px;text-align:right;transform-origin:100% 50%;transform:scaleX(1.0000);">10</span>
<span class="t" style="top:263.0px;line-height:17px;font-size:13px;color:#7f7f7f;left:1083.1px;width:15.5px;margin-left:-2px;text-align:right;transform-origin:100% 50%;transform:scaleX(1.0000);">11</span>
<span class="t" style="top:263.0px;line-height:17px;font-size:13px;color:#7f7f7f;left:1102.1px;width:16.5px;margin-left:-2px;text-align:right;transform-origin:100% 50%;transform:scaleX(1.0000);">12</span>
<span class="t" style="top:281.0px;line-height:17px;font-size:13px;color:#7f7f7f;left:982.1px;width:16.5px;margin-left:-2px;text-align:right;transform-origin:100% 50%;transform:scaleX(1.0000);">13</span>
<span class="t" style="top:281.0px;line-height:17px;font-size:13px;color:#7f7f7f;left:1002.1px;width:16.5px;margin-left:-2px;text-align:right;transform-origin:100% 50%;transform:scaleX(1.0000);">14</span>
<span class="t" style="top:281.0px;line-height:17px;font-size:13px;color:#7f7f7f;left:1022.1px;width:16.5px;margin-left:-2px;text-align:right;transform-origin:100% 50%;transform:scaleX(1.0000);">15</span>
<span class="t" style="top:281.0px;line-height:17px;font-size:13px;color:#7f7f7f;left:1042.1px;width:16.5px;margin-left:-2px;text-align:right;transform-origin:100% 50%;transform:scaleX(1.0000);">16</span>
<span class="t" style="top:281.0px;line-height:17px;font-size:13px;color:#7f7f7f;left:1062.1px;width:16.5px;margin-left:-2px;text-align:right;transform-origin:100% 50%;transform:scaleX(1.0000);">17</span>
<span class="t" style="top:281.0px;line-height:17px;font-size:13px;color:#7f7f7f;left:1082.1px;width:16.5px;margin-left:-2px;text-align:right;transform-origin:100% 50%;transform:scaleX(1.0000);">18</span>
<span class="t" style="top:281.0px;line-height:17px;font-size:13px;color:#7f7f7f;left:1102.1px;width:16.5px;margin-left:-2px;text-align:right;transform-origin:100% 50%;transform:scaleX(1.0000);">19</span>
<span class="t" style="top:299.0px;line-height:17px;font-size:13px;color:#7f7f7f;left:982.1px;width:16.5px;margin-left:-2px;text-align:right;transform-origin:100% 50%;transform:scaleX(1.0000);">20</span>
<span class="t" style="top:299.0px;line-height:17px;font-size:13px;color:#7f7f7f;left:1002.1px;width:16.5px;margin-left:-2px;text-align:right;transform-origin:100% 50%;transform:scaleX(1.0000);">21</span>
<span class="t" style="top:299.0px;line-height:17px;font-size:13px;color:#7f7f7f;left:1022.1px;width:16.5px;margin-left:-2px;text-align:right;transform-origin:100% 50%;transform:scaleX(1.0000);">22</span>
<span class="t" style="top:299.0px;line-height:17px;font-size:13px;color:#7f7f7f;left:1042.1px;width:16.5px;margin-left:-2px;text-align:right;transform-origin:100% 50%;transform:scaleX(1.0000);">23</span>
<span class="t" style="top:299.0px;line-height:17px;font-size:13px;color:#7f7f7f;left:1062.1px;width:16.5px;margin-left:-2px;text-align:right;transform-origin:100% 50%;transform:scaleX(1.0000);">24</span>
<span class="t" style="top:299.0px;line-height:17px;font-size:13px;color:#7f7f7f;left:1082.1px;width:16.5px;margin-left:-2px;text-align:right;transform-origin:100% 50%;transform:scaleX(1.0000);">25</span>
<span class="t" style="top:299.0px;line-height:17px;font-size:13px;color:#7f7f7f;left:1102.1px;width:16.5px;margin-left:-2px;text-align:right;transform-origin:100% 50%;transform:scaleX(1.0000);">26</span>
<span class="t" style="top:317.0px;line-height:17px;font-size:13px;color:#7f7f7f;left:982.1px;width:16.5px;margin-left:-2px;text-align:right;transform-origin:100% 50%;transform:scaleX(1.0000);">27</span>
<span class="t" style="top:317.0px;line-height:17px;font-size:13px;color:#7f7f7f;left:1002.1px;width:16.5px;margin-left:-2px;text-align:right;transform-origin:100% 50%;transform:scaleX(1.0000);">28</span>
<span class="t" style="top:317.0px;line-height:17px;font-size:13px;color:#7f7f7f;left:1022.1px;width:16.5px;margin-left:-2px;text-align:right;transform-origin:100% 50%;transform:scaleX(1.0000);">29</span>
<span class="t" style="top:317.0px;line-height:17px;font-size:13px;color:#7f7f7f;left:1042.1px;width:16.5px;margin-left:-2px;text-align:right;transform-origin:100% 50%;transform:scaleX(1.0000);">30</span>
<div class="" style="left:1130px;top:205px;width:1px;height:19px;background:#6e7076;"></div>
<div class="" style="left:1131px;top:205px;width:1px;height:19px;background:rgba(255,255,255,.45);"></div>
<span class="t" style="top:206.0px;line-height:17px;font-size:13px;left:1174.4px;width:80.1px;text-align:center;transform-origin:50% 50%;transform:scaleX(1.0000);">julho de 2021</span>
<span class="t" style="top:225.0px;line-height:17px;font-size:13px;left:1153.3px;width:11.4px;text-align:center;transform-origin:50% 50%;transform:scaleX(1.0000);">D</span>
<span class="t" style="top:225.0px;line-height:17px;font-size:13px;left:1173.7px;width:10.7px;text-align:center;transform-origin:50% 50%;transform:scaleX(1.0000);">S</span>
<span class="t" style="top:225.0px;line-height:17px;font-size:13px;left:1194.0px;width:9.9px;text-align:center;transform-origin:50% 50%;transform:scaleX(1.0000);">T</span>
<span class="t" style="top:225.0px;line-height:17px;font-size:13px;left:1212.9px;width:12.1px;text-align:center;transform-origin:50% 50%;transform:scaleX(1.0000);">Q</span>
<span class="t" style="top:225.0px;line-height:17px;font-size:13px;left:1232.9px;width:12.1px;text-align:center;transform-origin:50% 50%;transform:scaleX(1.0000);">Q</span>
<span class="t" style="top:225.0px;line-height:17px;font-size:13px;left:1253.7px;width:10.7px;text-align:center;transform-origin:50% 50%;transform:scaleX(1.0000);">S</span>
<span class="t" style="top:225.0px;line-height:17px;font-size:13px;left:1273.7px;width:10.7px;text-align:center;transform-origin:50% 50%;transform:scaleX(1.0000);">S</span>
<div class="" style="left:1145px;top:242px;width:141px;height:1px;background:#000;"></div>
<span class="t" style="top:245.0px;line-height:17px;font-size:13px;color:#7f7f7f;left:1237.4px;width:9.2px;margin-left:-2px;text-align:right;transform-origin:100% 50%;transform:scaleX(1.0000);">1</span>
<span class="t" style="top:245.0px;line-height:17px;font-size:13px;color:#7f7f7f;left:1257.4px;width:9.2px;margin-left:-2px;text-align:right;transform-origin:100% 50%;transform:scaleX(1.0000);">2</span>
<span class="t" style="top:245.0px;line-height:17px;font-size:13px;color:#7f7f7f;left:1277.4px;width:9.2px;margin-left:-2px;text-align:right;transform-origin:100% 50%;transform:scaleX(1.0000);">3</span>
<span class="t" style="top:263.0px;line-height:17px;font-size:13px;color:#7f7f7f;left:1157.4px;width:9.2px;margin-left:-2px;text-align:right;transform-origin:100% 50%;transform:scaleX(1.0000);">4</span>
<span class="t" style="top:263.0px;line-height:17px;font-size:13px;color:#7f7f7f;left:1177.4px;width:9.2px;margin-left:-2px;text-align:right;transform-origin:100% 50%;transform:scaleX(1.0000);">5</span>
<span class="t" style="top:263.0px;line-height:17px;font-size:13px;color:#7f7f7f;left:1197.4px;width:9.2px;margin-left:-2px;text-align:right;transform-origin:100% 50%;transform:scaleX(1.0000);">6</span>
<span class="t" style="top:263.0px;line-height:17px;font-size:13px;color:#7f7f7f;left:1217.4px;width:9.2px;margin-left:-2px;text-align:right;transform-origin:100% 50%;transform:scaleX(1.0000);">7</span>
<span class="t" style="top:263.0px;line-height:17px;font-size:13px;color:#7f7f7f;left:1237.4px;width:9.2px;margin-left:-2px;text-align:right;transform-origin:100% 50%;transform:scaleX(1.0000);">8</span>
<span class="t" style="top:263.0px;line-height:17px;font-size:13px;color:#7f7f7f;left:1257.4px;width:9.2px;margin-left:-2px;text-align:right;transform-origin:100% 50%;transform:scaleX(1.0000);">9</span>
<span class="t" style="top:263.0px;line-height:17px;font-size:13px;color:#7f7f7f;left:1270.1px;width:16.5px;margin-left:-2px;text-align:right;transform-origin:100% 50%;transform:scaleX(1.0000);">10</span>
<span class="t" style="top:281.0px;line-height:17px;font-size:13px;color:#7f7f7f;left:1151.1px;width:15.5px;margin-left:-2px;text-align:right;transform-origin:100% 50%;transform:scaleX(1.0000);">11</span>
<span class="t" style="top:281.0px;line-height:17px;font-size:13px;color:#7f7f7f;left:1170.1px;width:16.5px;margin-left:-2px;text-align:right;transform-origin:100% 50%;transform:scaleX(1.0000);">12</span>
<span class="t" style="top:281.0px;line-height:17px;font-size:13px;color:#7f7f7f;left:1190.1px;width:16.5px;margin-left:-2px;text-align:right;transform-origin:100% 50%;transform:scaleX(1.0000);">13</span>
<span class="t" style="top:281.0px;line-height:17px;font-size:13px;color:#7f7f7f;left:1210.1px;width:16.5px;margin-left:-2px;text-align:right;transform-origin:100% 50%;transform:scaleX(1.0000);">14</span>
<span class="t" style="top:281.0px;line-height:17px;font-size:13px;color:#7f7f7f;left:1230.1px;width:16.5px;margin-left:-2px;text-align:right;transform-origin:100% 50%;transform:scaleX(1.0000);">15</span>
<span class="t" style="top:281.0px;line-height:17px;font-size:13px;color:#7f7f7f;left:1250.1px;width:16.5px;margin-left:-2px;text-align:right;transform-origin:100% 50%;transform:scaleX(1.0000);">16</span>
<span class="t" style="top:281.0px;line-height:17px;font-size:13px;color:#7f7f7f;left:1270.1px;width:16.5px;margin-left:-2px;text-align:right;transform-origin:100% 50%;transform:scaleX(1.0000);">17</span>
<span class="t" style="top:299.0px;line-height:17px;font-size:13px;color:#7f7f7f;left:1150.1px;width:16.5px;margin-left:-2px;text-align:right;transform-origin:100% 50%;transform:scaleX(1.0000);">18</span>
<span class="t" style="top:299.0px;line-height:17px;font-size:13px;color:#7f7f7f;left:1170.1px;width:16.5px;margin-left:-2px;text-align:right;transform-origin:100% 50%;transform:scaleX(1.0000);">19</span>
<span class="t" style="top:299.0px;line-height:17px;font-size:13px;color:#7f7f7f;left:1190.1px;width:16.5px;margin-left:-2px;text-align:right;transform-origin:100% 50%;transform:scaleX(1.0000);">20</span>
<span class="t" style="top:299.0px;line-height:17px;font-size:13px;color:#7f7f7f;left:1210.1px;width:16.5px;margin-left:-2px;text-align:right;transform-origin:100% 50%;transform:scaleX(1.0000);">21</span>
<span class="t" style="top:299.0px;line-height:17px;font-size:13px;color:#7f7f7f;left:1230.1px;width:16.5px;margin-left:-2px;text-align:right;transform-origin:100% 50%;transform:scaleX(1.0000);">22</span>
<span class="t" style="top:299.0px;line-height:17px;font-size:13px;color:#7f7f7f;left:1250.1px;width:16.5px;margin-left:-2px;text-align:right;transform-origin:100% 50%;transform:scaleX(1.0000);">23</span>
<span class="t" style="top:299.0px;line-height:17px;font-size:13px;color:#7f7f7f;left:1270.1px;width:16.5px;margin-left:-2px;text-align:right;transform-origin:100% 50%;transform:scaleX(1.0000);">24</span>
<span class="t" style="top:317.0px;line-height:17px;font-size:13px;color:#7f7f7f;left:1150.1px;width:16.5px;margin-left:-2px;text-align:right;transform-origin:100% 50%;transform:scaleX(1.0000);">25</span>
<span class="t" style="top:317.0px;line-height:17px;font-size:13px;color:#7f7f7f;left:1170.1px;width:16.5px;margin-left:-2px;text-align:right;transform-origin:100% 50%;transform:scaleX(1.0000);">26</span>
<span class="t" style="top:317.0px;line-height:17px;font-size:13px;color:#7f7f7f;left:1190.1px;width:16.5px;margin-left:-2px;text-align:right;transform-origin:100% 50%;transform:scaleX(1.0000);">27</span>
<span class="t" style="top:317.0px;line-height:17px;font-size:13px;color:#7f7f7f;left:1210.1px;width:16.5px;margin-left:-2px;text-align:right;transform-origin:100% 50%;transform:scaleX(1.0000);">28</span>
<span class="t" style="top:317.0px;line-height:17px;font-size:13px;color:#7f7f7f;left:1230.1px;width:16.5px;margin-left:-2px;text-align:right;transform-origin:100% 50%;transform:scaleX(1.0000);">29</span>
<span class="t" style="top:317.0px;line-height:17px;font-size:13px;color:#7f7f7f;left:1250.1px;width:16.5px;margin-left:-2px;text-align:right;transform-origin:100% 50%;transform:scaleX(1.0000);">30</span>
<span class="t" style="top:317.0px;line-height:17px;font-size:13px;color:#7f7f7f;left:1270.1px;width:16.5px;margin-left:-2px;text-align:right;transform-origin:100% 50%;transform:scaleX(1.0000);">31</span>
<div class="" style="left:1298px;top:205px;width:1px;height:19px;background:#6e7076;"></div>
<div class="" style="left:1299px;top:205px;width:1px;height:19px;background:rgba(255,255,255,.45);"></div>
<span class="t" style="top:206.0px;line-height:17px;font-size:13px;left:1336.6px;width:91.6px;text-align:center;transform-origin:50% 50%;transform:scaleX(1.0000);">agosto de 2021</span>
<span class="t" style="top:225.0px;line-height:17px;font-size:13px;left:1321.3px;width:11.4px;text-align:center;transform-origin:50% 50%;transform:scaleX(1.0000);">D</span>
<span class="t" style="top:225.0px;line-height:17px;font-size:13px;left:1341.7px;width:10.7px;text-align:center;transform-origin:50% 50%;transform:scaleX(1.0000);">S</span>
<span class="t" style="top:225.0px;line-height:17px;font-size:13px;left:1362.0px;width:9.9px;text-align:center;transform-origin:50% 50%;transform:scaleX(1.0000);">T</span>
<span class="t" style="top:225.0px;line-height:17px;font-size:13px;left:1380.9px;width:12.1px;text-align:center;transform-origin:50% 50%;transform:scaleX(1.0000);">Q</span>
<span class="t" style="top:225.0px;line-height:17px;font-size:13px;left:1400.9px;width:12.1px;text-align:center;transform-origin:50% 50%;transform:scaleX(1.0000);">Q</span>
<span class="t" style="top:225.0px;line-height:17px;font-size:13px;left:1421.7px;width:10.7px;text-align:center;transform-origin:50% 50%;transform:scaleX(1.0000);">S</span>
<span class="t" style="top:225.0px;line-height:17px;font-size:13px;left:1441.7px;width:10.7px;text-align:center;transform-origin:50% 50%;transform:scaleX(1.0000);">S</span>
<div class="" style="left:1313px;top:242px;width:141px;height:1px;background:#000;"></div>
<span class="t" style="top:245.0px;line-height:17px;font-size:13px;color:#7f7f7f;left:1325.4px;width:9.2px;margin-left:-2px;text-align:right;transform-origin:100% 50%;transform:scaleX(1.0000);">1</span>
<span class="t" style="top:245.0px;line-height:17px;font-size:13px;color:#7f7f7f;left:1345.4px;width:9.2px;margin-left:-2px;text-align:right;transform-origin:100% 50%;transform:scaleX(1.0000);">2</span>
<span class="t" style="top:245.0px;line-height:17px;font-size:13px;color:#7f7f7f;left:1365.4px;width:9.2px;margin-left:-2px;text-align:right;transform-origin:100% 50%;transform:scaleX(1.0000);">3</span>
<span class="t" style="top:245.0px;line-height:17px;font-size:13px;color:#7f7f7f;left:1385.4px;width:9.2px;margin-left:-2px;text-align:right;transform-origin:100% 50%;transform:scaleX(1.0000);">4</span>
<span class="t" style="top:245.0px;line-height:17px;font-size:13px;color:#7f7f7f;left:1405.4px;width:9.2px;margin-left:-2px;text-align:right;transform-origin:100% 50%;transform:scaleX(1.0000);">5</span>
<span class="t" style="top:245.0px;line-height:17px;font-size:13px;color:#7f7f7f;left:1425.4px;width:9.2px;margin-left:-2px;text-align:right;transform-origin:100% 50%;transform:scaleX(1.0000);">6</span>
<span class="t" style="top:245.0px;line-height:17px;font-size:13px;color:#7f7f7f;left:1445.4px;width:9.2px;margin-left:-2px;text-align:right;transform-origin:100% 50%;transform:scaleX(1.0000);">7</span>
<span class="t" style="top:263.0px;line-height:17px;font-size:13px;color:#7f7f7f;left:1325.4px;width:9.2px;margin-left:-2px;text-align:right;transform-origin:100% 50%;transform:scaleX(1.0000);">8</span>
<span class="t" style="top:263.0px;line-height:17px;font-size:13px;color:#7f7f7f;left:1345.4px;width:9.2px;margin-left:-2px;text-align:right;transform-origin:100% 50%;transform:scaleX(1.0000);">9</span>
<span class="t" style="top:263.0px;line-height:17px;font-size:13px;color:#7f7f7f;left:1358.1px;width:16.5px;margin-left:-2px;text-align:right;transform-origin:100% 50%;transform:scaleX(1.0000);">10</span>
<span class="t" style="top:263.0px;line-height:17px;font-size:13px;color:#7f7f7f;left:1379.1px;width:15.5px;margin-left:-2px;text-align:right;transform-origin:100% 50%;transform:scaleX(1.0000);">11</span>
<span class="t" style="top:263.0px;line-height:17px;font-size:13px;color:#7f7f7f;left:1398.1px;width:16.5px;margin-left:-2px;text-align:right;transform-origin:100% 50%;transform:scaleX(1.0000);">12</span>
<span class="t" style="top:263.0px;line-height:17px;font-size:13px;color:#7f7f7f;left:1418.1px;width:16.5px;margin-left:-2px;text-align:right;transform-origin:100% 50%;transform:scaleX(1.0000);">13</span>
<span class="t" style="top:263.0px;line-height:17px;font-size:13px;color:#7f7f7f;left:1438.1px;width:16.5px;margin-left:-2px;text-align:right;transform-origin:100% 50%;transform:scaleX(1.0000);">14</span>
<span class="t" style="top:281.0px;line-height:17px;font-size:13px;color:#7f7f7f;left:1318.1px;width:16.5px;margin-left:-2px;text-align:right;transform-origin:100% 50%;transform:scaleX(1.0000);">15</span>
<span class="t" style="top:281.0px;line-height:17px;font-size:13px;color:#7f7f7f;left:1338.1px;width:16.5px;margin-left:-2px;text-align:right;transform-origin:100% 50%;transform:scaleX(1.0000);">16</span>
<span class="t" style="top:281.0px;line-height:17px;font-size:13px;color:#7f7f7f;left:1358.1px;width:16.5px;margin-left:-2px;text-align:right;transform-origin:100% 50%;transform:scaleX(1.0000);">17</span>
<span class="t" style="top:281.0px;line-height:17px;font-size:13px;color:#7f7f7f;left:1378.1px;width:16.5px;margin-left:-2px;text-align:right;transform-origin:100% 50%;transform:scaleX(1.0000);">18</span>
<span class="t" style="top:281.0px;line-height:17px;font-size:13px;color:#7f7f7f;left:1398.1px;width:16.5px;margin-left:-2px;text-align:right;transform-origin:100% 50%;transform:scaleX(1.0000);">19</span>
<span class="t" style="top:281.0px;line-height:17px;font-size:13px;color:#7f7f7f;left:1418.1px;width:16.5px;margin-left:-2px;text-align:right;transform-origin:100% 50%;transform:scaleX(1.0000);">20</span>
<span class="t" style="top:281.0px;line-height:17px;font-size:13px;color:#7f7f7f;left:1438.1px;width:16.5px;margin-left:-2px;text-align:right;transform-origin:100% 50%;transform:scaleX(1.0000);">21</span>
<span class="t" style="top:299.0px;line-height:17px;font-size:13px;color:#7f7f7f;left:1318.1px;width:16.5px;margin-left:-2px;text-align:right;transform-origin:100% 50%;transform:scaleX(1.0000);">22</span>
<span class="t" style="top:299.0px;line-height:17px;font-size:13px;color:#7f7f7f;left:1338.1px;width:16.5px;margin-left:-2px;text-align:right;transform-origin:100% 50%;transform:scaleX(1.0000);">23</span>
<span class="t" style="top:299.0px;line-height:17px;font-size:13px;color:#7f7f7f;left:1358.1px;width:16.5px;margin-left:-2px;text-align:right;transform-origin:100% 50%;transform:scaleX(1.0000);">24</span>
<span class="t" style="top:299.0px;line-height:17px;font-size:13px;color:#7f7f7f;left:1378.1px;width:16.5px;margin-left:-2px;text-align:right;transform-origin:100% 50%;transform:scaleX(1.0000);">25</span>
<span class="t" style="top:299.0px;line-height:17px;font-size:13px;color:#7f7f7f;left:1398.1px;width:16.5px;margin-left:-2px;text-align:right;transform-origin:100% 50%;transform:scaleX(1.0000);">26</span>
<span class="t" style="top:299.0px;line-height:17px;font-size:13px;color:#7f7f7f;left:1418.1px;width:16.5px;margin-left:-2px;text-align:right;transform-origin:100% 50%;transform:scaleX(1.0000);">27</span>
<span class="t" style="top:299.0px;line-height:17px;font-size:13px;color:#7f7f7f;left:1438.1px;width:16.5px;margin-left:-2px;text-align:right;transform-origin:100% 50%;transform:scaleX(1.0000);">28</span>
<span class="t" style="top:317.0px;line-height:17px;font-size:13px;color:#7f7f7f;left:1318.1px;width:16.5px;margin-left:-2px;text-align:right;transform-origin:100% 50%;transform:scaleX(1.0000);">29</span>
<span class="t" style="top:317.0px;line-height:17px;font-size:13px;color:#7f7f7f;left:1338.1px;width:16.5px;margin-left:-2px;text-align:right;transform-origin:100% 50%;transform:scaleX(1.0000);">30</span>
<span class="t" style="top:317.0px;line-height:17px;font-size:13px;color:#7f7f7f;left:1358.1px;width:16.5px;margin-left:-2px;text-align:right;transform-origin:100% 50%;transform:scaleX(1.0000);">31</span>
<span class="t" style="top:317.0px;line-height:17px;font-size:13px;color:#7f7f7f;left:1385.4px;width:9.2px;margin-left:-2px;text-align:right;transform-origin:100% 50%;transform:scaleX(1.0000);">1</span>
<span class="t" style="top:317.0px;line-height:17px;font-size:13px;color:#7f7f7f;left:1405.4px;width:9.2px;margin-left:-2px;text-align:right;transform-origin:100% 50%;transform:scaleX(1.0000);">2</span>
<span class="t" style="top:317.0px;line-height:17px;font-size:13px;color:#7f7f7f;left:1425.4px;width:9.2px;margin-left:-2px;text-align:right;transform-origin:100% 50%;transform:scaleX(1.0000);">3</span>
<span class="t" style="top:317.0px;line-height:17px;font-size:13px;color:#7f7f7f;left:1445.4px;width:9.2px;margin-left:-2px;text-align:right;transform-origin:100% 50%;transform:scaleX(1.0000);">4</span>
<span class="t" style="top:335.0px;line-height:17px;font-size:13px;color:#7f7f7f;left:1325.4px;width:9.2px;margin-left:-2px;text-align:right;transform-origin:100% 50%;transform:scaleX(1.0000);">5</span>
<span class="t" style="top:335.0px;line-height:17px;font-size:13px;color:#7f7f7f;left:1345.4px;width:9.2px;margin-left:-2px;text-align:right;transform-origin:100% 50%;transform:scaleX(1.0000);">6</span>
<span class="t" style="top:335.0px;line-height:17px;font-size:13px;color:#7f7f7f;left:1365.4px;width:9.2px;margin-left:-2px;text-align:right;transform-origin:100% 50%;transform:scaleX(1.0000);">7</span>
<span class="t" style="top:335.0px;line-height:17px;font-size:13px;color:#7f7f7f;left:1385.4px;width:9.2px;margin-left:-2px;text-align:right;transform-origin:100% 50%;transform:scaleX(1.0000);">8</span>
<span class="t" style="top:335.0px;line-height:17px;font-size:13px;color:#7f7f7f;left:1405.4px;width:9.2px;margin-left:-2px;text-align:right;transform-origin:100% 50%;transform:scaleX(1.0000);">9</span>
<span class="t" style="top:335.0px;line-height:17px;font-size:13px;color:#7f7f7f;left:1418.1px;width:16.5px;margin-left:-2px;text-align:right;transform-origin:100% 50%;transform:scaleX(1.0000);">10</span>
<span class="t" style="top:335.0px;line-height:17px;font-size:13px;color:#7f7f7f;left:1439.1px;width:15.5px;margin-left:-2px;text-align:right;transform-origin:100% 50%;transform:scaleX(1.0000);">11</span>
<svg style="left:129px;top:209px" width="7" height="11" viewBox="0 0 7 11"><path d="M7 0v11L0 5.500z" fill="#000"/></svg>
<svg style="left:1452px;top:209px" width="7" height="11" viewBox="0 0 7 11"><path d="M0 0v11L7 5.500z" fill="#000"/></svg>
<div class="w" style="left:1588px;top:198px;width:75px;height:164px;"></div>
<div class="w" style="left:3px;top:360px;width:1661px;height:2px;"></div>
<span class="t m" style="top:198.0px;line-height:16px;font-size:12.5px;left:1591.0px;transform-origin:0 50%;transform:scaleX(0.8632);">Legenda</span>
<span class="t m" style="top:214.0px;line-height:16px;font-size:12.5px;left:1603.5px;transform-origin:0 50%;transform:scaleX(0.8802);">Não Atende</span>
<span class="t m" style="top:229.0px;line-height:16px;font-size:12.5px;left:1603.5px;transform-origin:0 50%;transform:scaleX(0.8859);">Livre</span>
<span class="t m" style="top:241.0px;line-height:16px;font-size:12.5px;left:1604.5px;transform-origin:0 50%;transform:scaleX(0.8674);">Ocupada</span>
<svg style="left:1591.6000000000001px;top:217.9px" width="9.2" height="9.2" viewBox="0 0 9.2 9.2"><polygon points="9.20,4.60 8.02,6.02 7.85,7.85 6.02,8.02 4.60,9.20 3.18,8.02 1.35,7.85 1.18,6.02 0.00,4.60 1.18,3.18 1.35,1.35 3.18,1.18 4.60,0.00 6.02,1.18 7.85,1.35 8.02,3.18" fill="#7f7f7f"/></svg>
<svg style="left:1591.6000000000001px;top:232.9px" width="9.2" height="9.2" viewBox="0 0 9.2 9.2"><polygon points="9.20,4.60 8.02,6.02 7.85,7.85 6.02,8.02 4.60,9.20 3.18,8.02 1.35,7.85 1.18,6.02 0.00,4.60 1.18,3.18 1.35,1.35 3.18,1.18 4.60,0.00 6.02,1.18 7.85,1.35 8.02,3.18" fill="#008000"/></svg>
<svg style="left:1591.6000000000001px;top:244.9px" width="9.2" height="9.2" viewBox="0 0 9.2 9.2"><polygon points="9.20,4.60 8.02,6.02 7.85,7.85 6.02,8.02 4.60,9.20 3.18,8.02 1.35,7.85 1.18,6.02 0.00,4.60 1.18,3.18 1.35,1.35 3.18,1.18 4.60,0.00 6.02,1.18 7.85,1.35 8.02,3.18" fill="#800000"/></svg>
<div class="" style="left:1664px;top:206px;width:250px;height:153px;border:1px solid #dcdcdc;border-top-color:#d8d8d8;"></div>
<div class="" style="left:1668px;top:199px;width:90px;height:13px;background:#f0f0f0;"></div>
<span class="t" style="top:197.0px;line-height:16px;font-size:12.5px;font-weight:bold;left:1670.5px;transform-origin:0 50%;transform:scaleX(0.9367);">Opções Extras</span>
<div class="b" style="left:1666px;top:217px;width:115px;height:21px;"></div>
<span class="t" style="top:220.0px;line-height:16px;font-size:12.5px;font-weight:bold;left:1699.9px;width:61.1px;text-align:center;transform-origin:50% 50%;transform:scaleX(0.9754);">Recepção</span>
<div class="b" style="left:1783px;top:217px;width:128px;height:21px;"></div>
<span class="t" style="top:220.0px;line-height:16px;font-size:12.5px;font-weight:bold;left:1780.2px;width:133.5px;text-align:center;transform-origin:50% 50%;transform:scaleX(0.9505);">Meus Proc. em Aberto</span>
<div class="b" style="left:1666px;top:240px;width:130px;height:21px;"></div>
<span class="t" style="top:243.0px;line-height:16px;font-size:12.5px;font-weight:bold;left:1680.5px;width:115.9px;text-align:center;transform-origin:50% 50%;transform:scaleX(0.9481);">Chamar Senha (F8)</span>
<div class="b" style="left:1798px;top:240px;width:113px;height:21px;"></div>
<span class="t" style="top:243.0px;line-height:16px;font-size:12.5px;font-weight:bold;left:1810.3px;width:103.4px;text-align:center;transform-origin:50% 50%;transform:scaleX(0.9366);">Chamar Paciente</span>
<div class="b" style="left:1666px;top:263px;width:245px;height:23px;"></div>
<span class="t" style="top:267.0px;line-height:16px;font-size:12.5px;font-weight:bold;left:1764.3px;width:62.4px;text-align:center;transform-origin:50% 50%;transform:scaleX(0.9152);">Atestados</span>
<div class="b" style="left:1666px;top:288px;width:245px;height:23px;"></div>
<span class="t" style="top:292.0px;line-height:16px;font-size:12.5px;font-weight:bold;left:1692.7px;width:175.6px;text-align:center;transform-origin:50% 50%;transform:scaleX(0.9504);">Atendimentos (Ficha Médica)</span>
<div class="b" style="left:1666px;top:313px;width:130px;height:21px;"></div>
<span class="t" style="top:316.0px;line-height:16px;font-size:12.5px;font-weight:bold;left:1706.0px;width:49.9px;text-align:center;transform-origin:50% 50%;transform:scaleX(0.9388);">Triagem</span>
<div class="b" style="left:1798px;top:313px;width:113px;height:21px;"></div>
<span class="t" style="top:316.0px;line-height:16px;font-size:12.5px;font-weight:bold;left:1821.8px;width:80.5px;text-align:center;transform-origin:50% 50%;transform:scaleX(0.9557);">Imp. Etiqueta</span>
<div class="b" style="left:1666px;top:336px;width:245px;height:21px;"></div>
<span class="t" style="top:339.0px;line-height:16px;font-size:12.5px;font-weight:bold;left:1690.1px;width:195.8px;text-align:center;transform-origin:50% 50%;transform:scaleX(0.9339);">Lançar Procedimentos (Exames)</span>
<div class="" style="left:1896px;top:291px;width:1px;height:17px;background:#6a6a6a;"></div>
<div class="" style="left:1897px;top:291px;width:1px;height:17px;background:#fff;"></div>
<svg style="left:1899px;top:297px" width="9" height="5" viewBox="0 0 9 5"><path d="M0 0h9L4.500 5z" fill="#000"/></svg>
<svg style="left:1668px;top:219px" width="16" height="16" viewBox="0 0 32 32"><path d="M24 22l8 1-4 5.500-6-1z" fill="#cfcfcf" opacity=".6"/><path d="M4 3l12-1.500 2.500 1.800 6 .8 3 3.500-.5 18-23-1z" fill="#e9bf55" stroke="#c8983a" stroke-width=".5"/><path d="M4.500 4.500l19 2.500 2 2.500-.3 13-20.700-1z" fill="#f2f2f4" stroke="#bdbdc4" stroke-width=".5"/><path d="M4.500 6.500l18 3" stroke="#c9c9d2" stroke-width=".8"/><path d="M3.500 6.500l17 3.500 3.500 2.500 1 13.500-22-1.500z" fill="url(#gFold)" stroke="#c8983a" stroke-width=".5"/><path d="M24 12l3.500-4.500.5 17.500-3 1z" fill="#d9a940"/><path d="M.300 24.500c0-4 2.400-6 6.200-6s5.800 2 5.800 6c0 1.800-2.600 2.900-6 2.900s-6-1.100-6-2.900z" fill="url(#gCoat)" stroke="#9a9a9a" stroke-width=".5"/><ellipse cx="6.700" cy="13.800" rx="3.500" ry="4.500" fill="url(#gSkin)"/><path d="M3 13.500c-.5-5.500 8-5.500 7.500 0-1-2.500-2-3-3.800-3s-3 1-3.700 3z" fill="#8a5a2e"/><path d="M9.500 28c0-3.500 2.500-5.400 7.200-5.400s7.200 1.900 7.200 5.400c0 1.600-3 2.600-7.200 2.600s-7.200-1-7.200-2.600z" fill="#f3e4e4" stroke="#b8a4a4" stroke-width=".5"/><path d="M11.300 22.600c-1.500-11.500 12.500-11.500 11 0-1.500.800-9.500.800-11 0z" fill="#1f1612"/><ellipse cx="16.900" cy="18.600" rx="3.200" ry="4.300" fill="#c48a5e"/><path d="M14.800 22.500l2.100 2.300 2.100-2.300z" fill="#b07a4e"/></svg>
<svg style="left:1669px;top:243px" width="14" height="15" viewBox="0 0 14 15"><path d="M.600 5.200L7.500 3.200 13.200 6.800 8.800 12 1 14.600z" fill="#2f8af0"/><path d="M.600 5.200L4.200 2.400 9 1.300 7.500 3.200z" fill="#a8d4ff"/><path d="M7.500 3.200l5.700 3.600-4.400 5.200z" fill="#2478e0"/><path d="M1 6.500l5.500-1.600" stroke="#7fbcff" stroke-width=".8"/></svg>
<svg style="left:1801px;top:243px" width="14" height="15" viewBox="0 0 14 15"><path d="M.600 5.200L7.500 3.200 13.200 6.800 8.800 12 1 14.600z" fill="#2f8af0"/><path d="M.600 5.200L4.200 2.400 9 1.300 7.500 3.200z" fill="#a8d4ff"/><path d="M7.500 3.200l5.700 3.600-4.400 5.200z" fill="#2478e0"/><path d="M1 6.500l5.500-1.600" stroke="#7fbcff" stroke-width=".8"/></svg>
<svg style="left:1669px;top:265px" width="15" height="18" viewBox="0 0 15 18"><path d="M1.500 2l9-1.500 3 2v14l-12 .5z" fill="#f6f6f6" stroke="#8f8f8f" stroke-width=".8"/><path d="M3 5h8M3 8h8M3 11h8M5 13l2 2 3-3" stroke="#a8a8a8" stroke-width=".8" fill="none"/><path d="M10.500 .500v3h3" fill="none" stroke="#8f8f8f" stroke-width=".7"/></svg>
<svg style="left:1802px;top:316px" width="16" height="13" viewBox="0 0 16 13"><path d="M4 4l3-3h5l1 4z" fill="#555"/><path d="M1 6l3-2h9l2 2v4l-3 2H2z" fill="#7a7a7a"/><path d="M2 9h9v3H2z" fill="#e8e8e8" stroke="#999" stroke-width=".4"/><path d="M4 7h6" stroke="#ddd" stroke-width="1"/></svg>
<div class="w" style="left:5px;top:368px;width:13px;height:13px;border:1px solid #333;"></div>
<div class="w" style="left:150px;top:368px;width:13px;height:13px;border:1px solid #333;"></div>
<svg style="left:7px;top:370px" width="9" height="9" viewBox="0 0 9 9"><path d="M.800 4.500l2.500 2.700L8.300 1.200" stroke="#222" stroke-width="1.200" fill="none"/></svg>
<span class="t m" style="top:367.0px;line-height:16px;font-size:12.5px;left:21.2px;transform-origin:0 50%;transform:scaleX(0.8508);">Mostrar Todos os Horários</span>
<span class="t m" style="top:367.0px;line-height:16px;font-size:12.5px;left:165.5px;transform-origin:0 50%;transform:scaleX(0.8485);">Agendamentos de outras unidades</span>
<div class="b" style="left:336px;top:363px;width:140px;height:24px;"></div>
<span class="t m" style="top:368.0px;line-height:16px;font-size:12.5px;left:351.5px;width:109.0px;text-align:center;transform-origin:50% 50%;transform:scaleX(0.8599);">Observação do Dia</span>
<span class="t" style="top:361.0px;line-height:16px;font-size:12.5px;font-weight:bold;color:#ff0000;left:820.5px;transform-origin:0 50%;transform:scaleX(0.9856);">19/01/2021 Terça-feira - Agendado(s): 05 - Bloqueado(s): 03 - Encaixado(s): 00 - Vaga(s) Livre(s): 12 - Taxa de Ocupação: 42,86%</span>
<div class="" style="left:4px;top:388px;width:1909px;height:1px;background:#a0a0a0;"></div>
<div class="" style="left:4px;top:388px;width:1px;height:578px;background:#b4bcc8;"></div>
<div class="" style="left:5px;top:389px;width:1907px;height:1px;background:#a9b0b8;"></div>
<div class="" style="left:5px;top:390px;width:1907px;height:1px;background:#72767e;"></div>
<div class="" style="left:1912px;top:389px;width:1px;height:577px;background:#b4bcc8;"></div>
<div class="hd" style="left:5px;top:391px;width:1907px;height:19px;"></div>
<div class="" style="left:5px;top:410px;width:1907px;height:1px;background:#72767e;"></div>
<div class="" style="left:5px;top:391px;width:1px;height:434px;background:#72767e;"></div>
<div class="" style="left:16px;top:391px;width:1px;height:19px;background:#72767e;"></div>
<svg style="left:7px;top:397px" width="8" height="8" viewBox="0 0 8 8"><path d="M4 0v8M0 4h8M1.200 1.200l5.600 5.600M6.800 1.200L1.200 6.800" stroke="#8a8aa0" stroke-width=".8"/></svg>
<div class="" style="left:80px;top:391px;width:1px;height:19px;background:#72767e;"></div>
<div class="" style="left:81px;top:392px;width:1px;height:17px;background:#fff;"></div>
<span class="t m" style="top:392.0px;line-height:16px;font-size:12.5px;left:21.0px;transform-origin:0 50%;transform:scaleX(0.8162);">Prioridade</span>
<div class="" style="left:131px;top:391px;width:1px;height:19px;background:#72767e;"></div>
<div class="" style="left:132px;top:392px;width:1px;height:17px;background:#fff;"></div>
<span class="t m" style="top:392.0px;line-height:16px;font-size:12.5px;left:85.0px;transform-origin:0 50%;transform:scaleX(0.8121);">Hora</span>
<div class="" style="left:305px;top:391px;width:1px;height:19px;background:#72767e;"></div>
<div class="" style="left:306px;top:392px;width:1px;height:17px;background:#fff;"></div>
<span class="t m" style="top:392.0px;line-height:16px;font-size:12.5px;left:136.0px;transform-origin:0 50%;transform:scaleX(0.8449);">Situação (Status)</span>
<div class="" style="left:489px;top:391px;width:1px;height:19px;background:#72767e;"></div>
<div class="" style="left:490px;top:392px;width:1px;height:17px;background:#fff;"></div>
<span class="t m" style="top:392.0px;line-height:16px;font-size:12.5px;left:310.0px;transform-origin:0 50%;transform:scaleX(0.8521);">Convênio</span>
<div class="" style="left:553px;top:391px;width:1px;height:19px;background:#72767e;"></div>
<div class="" style="left:554px;top:392px;width:1px;height:17px;background:#fff;"></div>
<span class="t m" style="top:392.0px;line-height:16px;font-size:12.5px;left:494.0px;transform-origin:0 50%;transform:scaleX(0.8500);">Nro. Ficha</span>
<div class="" style="left:874px;top:391px;width:1px;height:19px;background:#72767e;"></div>
<div class="" style="left:875px;top:392px;width:1px;height:17px;background:#fff;"></div>
<span class="t m" style="top:392.0px;line-height:16px;font-size:12.5px;left:558.0px;transform-origin:0 50%;transform:scaleX(0.8655);">Nome do Paciente</span>
<div class="" style="left:959px;top:391px;width:1px;height:19px;background:#72767e;"></div>
<div class="" style="left:960px;top:392px;width:1px;height:17px;background:#fff;"></div>
<span class="t m" style="top:392.0px;line-height:16px;font-size:12.5px;left:879.0px;transform-origin:0 50%;transform:scaleX(0.8544);">Dt. Nascimento</span>
<div class="" style="left:1134px;top:391px;width:1px;height:19px;background:#72767e;"></div>
<div class="" style="left:1135px;top:392px;width:1px;height:17px;background:#fff;"></div>
<span class="t m" style="top:392.0px;line-height:16px;font-size:12.5px;left:964.0px;transform-origin:0 50%;transform:scaleX(0.8686);">Médico</span>
<div class="" style="left:1257px;top:391px;width:1px;height:19px;background:#72767e;"></div>
<div class="" style="left:1258px;top:392px;width:1px;height:17px;background:#fff;"></div>
<span class="t m" style="top:392.0px;line-height:16px;font-size:12.5px;left:1139.0px;transform-origin:0 50%;transform:scaleX(0.8555);">Observações</span>
<div class="" style="left:1348px;top:391px;width:1px;height:19px;background:#72767e;"></div>
<div class="" style="left:1349px;top:392px;width:1px;height:17px;background:#fff;"></div>
<span class="t m" style="top:392.0px;line-height:16px;font-size:12.5px;left:1262.0px;transform-origin:0 50%;transform:scaleX(0.8283);">Confirma</span>
<div class="" style="left:1459px;top:391px;width:1px;height:19px;background:#72767e;"></div>
<div class="" style="left:1460px;top:392px;width:1px;height:17px;background:#fff;"></div>
<span class="t m" style="top:392.0px;line-height:16px;font-size:12.5px;left:1353.0px;transform-origin:0 50%;transform:scaleX(0.8516);">Hora do Atendimento</span>
<div class="" style="left:1759px;top:391px;width:1px;height:19px;background:#72767e;"></div>
<div class="" style="left:1760px;top:392px;width:1px;height:17px;background:#fff;"></div>
<span class="t m" style="top:392.0px;line-height:16px;font-size:12.5px;left:1464.0px;transform-origin:0 50%;transform:scaleX(0.8194);">Exames</span>
<span class="t m" style="top:392.0px;line-height:16px;font-size:12.5px;left:1764.0px;transform-origin:0 50%;transform:scaleX(0.8576);">Data e Hora da inclusão</span>
<svg style="left:113px;top:397px" width="10" height="5" viewBox="0 0 10 5"><path d="M0 5h10L5 0z" fill="#6a6a94"/></svg>
<div class="ind" style="left:6px;top:411px;width:10px;height:19px;"></div>
<div class="" style="left:16px;top:411px;width:1px;height:19px;background:#72767e;"></div>
<div class="" style="left:17px;top:411px;width:1895px;height:19px;background:#f3f5f5;"></div>
<div class="" style="left:17px;top:429px;width:1895px;height:1px;background:#e4e6ea;"></div>
<div class="" style="left:80px;top:411px;width:1px;height:19px;background:#e6e8e8;"></div>
<div class="" style="left:131px;top:411px;width:1px;height:19px;background:#e6e8e8;"></div>
<div class="" style="left:305px;top:411px;width:1px;height:19px;background:#e6e8e8;"></div>
<div class="" style="left:489px;top:411px;width:1px;height:19px;background:#e6e8e8;"></div>
<div class="" style="left:553px;top:411px;width:1px;height:19px;background:#e6e8e8;"></div>
<div class="" style="left:874px;top:411px;width:1px;height:19px;background:#e6e8e8;"></div>
<div class="" style="left:959px;top:411px;width:1px;height:19px;background:#e6e8e8;"></div>
<div class="" style="left:1134px;top:411px;width:1px;height:19px;background:#e6e8e8;"></div>
<div class="" style="left:1257px;top:411px;width:1px;height:19px;background:#e6e8e8;"></div>
<div class="" style="left:1348px;top:411px;width:1px;height:19px;background:#e6e8e8;"></div>
<div class="" style="left:1459px;top:411px;width:1px;height:19px;background:#e6e8e8;"></div>
<div class="" style="left:1759px;top:411px;width:1px;height:19px;background:#e6e8e8;"></div>
<span class="t m" style="top:411.5px;line-height:16px;font-size:12.5px;left:83.7px;transform-origin:0 50%;transform:scaleX(0.8600);">08:00</span>
<div class="ind" style="left:6px;top:430px;width:10px;height:19px;"></div>
<div class="" style="left:16px;top:430px;width:1px;height:19px;background:#72767e;"></div>
<div class="" style="left:17px;top:430px;width:1895px;height:19px;background:#f3f5f5;"></div>
<div class="" style="left:17px;top:448px;width:1895px;height:1px;background:#e4e6ea;"></div>
<div class="" style="left:80px;top:430px;width:1px;height:19px;background:#e6e8e8;"></div>
<div class="" style="left:131px;top:430px;width:1px;height:19px;background:#e6e8e8;"></div>
<div class="" style="left:305px;top:430px;width:1px;height:19px;background:#e6e8e8;"></div>
<div class="" style="left:489px;top:430px;width:1px;height:19px;background:#e6e8e8;"></div>
<div class="" style="left:553px;top:430px;width:1px;height:19px;background:#e6e8e8;"></div>
<div class="" style="left:874px;top:430px;width:1px;height:19px;background:#e6e8e8;"></div>
<div class="" style="left:959px;top:430px;width:1px;height:19px;background:#e6e8e8;"></div>
<div class="" style="left:1134px;top:430px;width:1px;height:19px;background:#e6e8e8;"></div>
<div class="" style="left:1257px;top:430px;width:1px;height:19px;background:#e6e8e8;"></div>
<div class="" style="left:1348px;top:430px;width:1px;height:19px;background:#e6e8e8;"></div>
<div class="" style="left:1459px;top:430px;width:1px;height:19px;background:#e6e8e8;"></div>
<div class="" style="left:1759px;top:430px;width:1px;height:19px;background:#e6e8e8;"></div>
<span class="t m" style="top:430.5px;line-height:16px;font-size:12.5px;left:83.7px;transform-origin:0 50%;transform:scaleX(0.8600);">08:30</span>
<div class="ind" style="left:6px;top:449px;width:10px;height:19px;"></div>
<div class="" style="left:16px;top:449px;width:1px;height:19px;background:#72767e;"></div>
<div class="" style="left:17px;top:449px;width:1895px;height:19px;background:#316ac5;"></div>
<div class="" style="left:17px;top:449px;width:1895px;height:19px;border-top:1px dotted #e8a030;border-bottom:1px dotted #e8a030;"></div>
<svg style="left:8px;top:454px" width="6" height="9" viewBox="0 0 6 9"><path d="M1 .500l4 4-4 4" stroke="#5a5a8c" stroke-width="2" fill="none"/></svg>
<div class="" style="left:80px;top:449px;width:1px;height:19px;background:#f4f4fa;"></div>
<div class="" style="left:131px;top:449px;width:1px;height:19px;background:#f4f4fa;"></div>
<div class="" style="left:305px;top:449px;width:1px;height:19px;background:#f4f4fa;"></div>
<div class="" style="left:489px;top:449px;width:1px;height:19px;background:#f4f4fa;"></div>
<div class="" style="left:553px;top:449px;width:1px;height:19px;background:#f4f4fa;"></div>
<div class="" style="left:874px;top:449px;width:1px;height:19px;background:#f4f4fa;"></div>
<div class="" style="left:959px;top:449px;width:1px;height:19px;background:#f4f4fa;"></div>
<div class="" style="left:1134px;top:449px;width:1px;height:19px;background:#f4f4fa;"></div>
<div class="" style="left:1257px;top:449px;width:1px;height:19px;background:#f4f4fa;"></div>
<div class="" style="left:1348px;top:449px;width:1px;height:19px;background:#f4f4fa;"></div>
<div class="" style="left:1459px;top:449px;width:1px;height:19px;background:#f4f4fa;"></div>
<div class="" style="left:1759px;top:449px;width:1px;height:19px;background:#f4f4fa;"></div>
<span class="t m" style="top:449.5px;line-height:16px;font-size:12.5px;color:#fff;left:83.7px;transform-origin:0 50%;transform:scaleX(0.8600);">09:00</span>
<div class="ind" style="left:6px;top:468px;width:10px;height:19px;"></div>
<div class="" style="left:16px;top:468px;width:1px;height:19px;background:#72767e;"></div>
<div class="" style="left:17px;top:468px;width:1895px;height:19px;background:#f3f5f5;"></div>
<div class="" style="left:17px;top:486px;width:1895px;height:1px;background:#e4e6ea;"></div>
<div class="" style="left:80px;top:468px;width:1px;height:19px;background:#e6e8e8;"></div>
<div class="" style="left:131px;top:468px;width:1px;height:19px;background:#e6e8e8;"></div>
<div class="" style="left:305px;top:468px;width:1px;height:19px;background:#e6e8e8;"></div>
<div class="" style="left:489px;top:468px;width:1px;height:19px;background:#e6e8e8;"></div>
<div class="" style="left:553px;top:468px;width:1px;height:19px;background:#e6e8e8;"></div>
<div class="" style="left:874px;top:468px;width:1px;height:19px;background:#e6e8e8;"></div>
<div class="" style="left:959px;top:468px;width:1px;height:19px;background:#e6e8e8;"></div>
<div class="" style="left:1134px;top:468px;width:1px;height:19px;background:#e6e8e8;"></div>
<div class="" style="left:1257px;top:468px;width:1px;height:19px;background:#e6e8e8;"></div>
<div class="" style="left:1348px;top:468px;width:1px;height:19px;background:#e6e8e8;"></div>
<div class="" style="left:1459px;top:468px;width:1px;height:19px;background:#e6e8e8;"></div>
<div class="" style="left:1759px;top:468px;width:1px;height:19px;background:#e6e8e8;"></div>
<span class="t m" style="top:468.5px;line-height:16px;font-size:12.5px;left:83.7px;transform-origin:0 50%;transform:scaleX(0.8600);">09:30</span>
<div class="ind" style="left:6px;top:487px;width:10px;height:19px;"></div>
<div class="" style="left:16px;top:487px;width:1px;height:19px;background:#72767e;"></div>
<div class="" style="left:17px;top:487px;width:1895px;height:19px;background:#f3f5f5;"></div>
<div class="" style="left:17px;top:505px;width:1895px;height:1px;background:#e4e6ea;"></div>
<div class="" style="left:80px;top:487px;width:1px;height:19px;background:#e6e8e8;"></div>
<div class="" style="left:131px;top:487px;width:1px;height:19px;background:#e6e8e8;"></div>
<div class="" style="left:305px;top:487px;width:1px;height:19px;background:#e6e8e8;"></div>
<div class="" style="left:489px;top:487px;width:1px;height:19px;background:#e6e8e8;"></div>
<div class="" style="left:553px;top:487px;width:1px;height:19px;background:#e6e8e8;"></div>
<div class="" style="left:874px;top:487px;width:1px;height:19px;background:#e6e8e8;"></div>
<div class="" style="left:959px;top:487px;width:1px;height:19px;background:#e6e8e8;"></div>
<div class="" style="left:1134px;top:487px;width:1px;height:19px;background:#e6e8e8;"></div>
<div class="" style="left:1257px;top:487px;width:1px;height:19px;background:#e6e8e8;"></div>
<div class="" style="left:1348px;top:487px;width:1px;height:19px;background:#e6e8e8;"></div>
<div class="" style="left:1459px;top:487px;width:1px;height:19px;background:#e6e8e8;"></div>
<div class="" style="left:1759px;top:487px;width:1px;height:19px;background:#e6e8e8;"></div>
<span class="t m" style="top:487.5px;line-height:16px;font-size:12.5px;left:83.7px;transform-origin:0 50%;transform:scaleX(0.8600);">10:00</span>
<div class="ind" style="left:6px;top:506px;width:10px;height:19px;"></div>
<div class="" style="left:16px;top:506px;width:1px;height:19px;background:#72767e;"></div>
<div class="" style="left:17px;top:506px;width:1895px;height:19px;background:#bbcfee;"></div>
<div class="" style="left:17px;top:524px;width:1895px;height:1px;background:#d6e1f4;"></div>
<div class="" style="left:80px;top:506px;width:1px;height:19px;background:#d6e1f4;"></div>
<div class="" style="left:131px;top:506px;width:1px;height:19px;background:#d6e1f4;"></div>
<div class="" style="left:305px;top:506px;width:1px;height:19px;background:#d6e1f4;"></div>
<div class="" style="left:489px;top:506px;width:1px;height:19px;background:#d6e1f4;"></div>
<div class="" style="left:553px;top:506px;width:1px;height:19px;background:#d6e1f4;"></div>
<div class="" style="left:874px;top:506px;width:1px;height:19px;background:#d6e1f4;"></div>
<div class="" style="left:959px;top:506px;width:1px;height:19px;background:#d6e1f4;"></div>
<div class="" style="left:1134px;top:506px;width:1px;height:19px;background:#d6e1f4;"></div>
<div class="" style="left:1257px;top:506px;width:1px;height:19px;background:#d6e1f4;"></div>
<div class="" style="left:1348px;top:506px;width:1px;height:19px;background:#d6e1f4;"></div>
<div class="" style="left:1459px;top:506px;width:1px;height:19px;background:#d6e1f4;"></div>
<div class="" style="left:1759px;top:506px;width:1px;height:19px;background:#d6e1f4;"></div>
<span class="t m" style="top:506.5px;line-height:16px;font-size:12.5px;left:83.7px;transform-origin:0 50%;transform:scaleX(0.8600);">10:30</span>
<div class="" style="left:17px;top:506px;width:63px;height:18px;background:#c0c0c0;"></div>
<span class="t m" style="top:506.5px;line-height:16px;font-size:12.5px;left:19.3px;transform-origin:0 50%;transform:scaleX(0.8602);">NORMAL</span>
<div class="" style="left:135px;top:507px;width:16px;height:16px;background:#97d7e7;border-radius:50%;border:1px dashed #cfeef6;"></div>
<span class="t m" style="top:506.5px;line-height:16px;font-size:12.5px;left:246.0px;width:59.0px;margin-left:-2px;text-align:right;transform-origin:100% 50%;transform:scaleX(0.8597);">Agendado</span>
<span class="t m" style="top:506.5px;line-height:16px;font-size:12.5px;left:307.8px;transform-origin:0 50%;transform:scaleX(0.8638);">PARTICULAR</span>
<span class="t m" style="top:506.5px;line-height:16px;font-size:12.5px;left:509.8px;width:43.7px;margin-left:-2px;text-align:right;transform-origin:100% 50%;transform:scaleX(0.8600);">299005</span>
<span class="t m" style="top:506.5px;line-height:16px;font-size:12.5px;left:556.3px;transform-origin:0 50%;transform:scaleX(0.8438);">TESTE 2 DOIS</span>
<span class="t m" style="top:506.5px;line-height:16px;font-size:12.5px;left:877.0px;transform-origin:0 50%;transform:scaleX(0.9272);">20/05/2000</span>
<span class="t" style="top:507.5px;line-height:14px;font-size:11px;left:1461.5px;transform-origin:0 50%;transform:scaleX(0.9284);">TC RINS (30min)</span>
<span class="t m" style="top:506.5px;line-height:16px;font-size:12.5px;left:1762.3px;transform-origin:0 50%;transform:scaleX(0.8982);">14/01/2021 08:52:05</span>
<div class="ind" style="left:6px;top:525px;width:10px;height:19px;"></div>
<div class="" style="left:16px;top:525px;width:1px;height:19px;background:#72767e;"></div>
<div class="" style="left:17px;top:525px;width:1895px;height:19px;background:#f3f5f5;"></div>
<div class="" style="left:17px;top:543px;width:1895px;height:1px;background:#e4e6ea;"></div>
<div class="" style="left:80px;top:525px;width:1px;height:19px;background:#e6e8e8;"></div>
<div class="" style="left:131px;top:525px;width:1px;height:19px;background:#e6e8e8;"></div>
<div class="" style="left:305px;top:525px;width:1px;height:19px;background:#e6e8e8;"></div>
<div class="" style="left:489px;top:525px;width:1px;height:19px;background:#e6e8e8;"></div>
<div class="" style="left:553px;top:525px;width:1px;height:19px;background:#e6e8e8;"></div>
<div class="" style="left:874px;top:525px;width:1px;height:19px;background:#e6e8e8;"></div>
<div class="" style="left:959px;top:525px;width:1px;height:19px;background:#e6e8e8;"></div>
<div class="" style="left:1134px;top:525px;width:1px;height:19px;background:#e6e8e8;"></div>
<div class="" style="left:1257px;top:525px;width:1px;height:19px;background:#e6e8e8;"></div>
<div class="" style="left:1348px;top:525px;width:1px;height:19px;background:#e6e8e8;"></div>
<div class="" style="left:1459px;top:525px;width:1px;height:19px;background:#e6e8e8;"></div>
<div class="" style="left:1759px;top:525px;width:1px;height:19px;background:#e6e8e8;"></div>
<span class="t m" style="top:525.5px;line-height:16px;font-size:12.5px;left:83.7px;transform-origin:0 50%;transform:scaleX(0.8600);">11:00</span>
<div class="ind" style="left:6px;top:544px;width:10px;height:19px;"></div>
<div class="" style="left:16px;top:544px;width:1px;height:19px;background:#72767e;"></div>
<div class="" style="left:17px;top:544px;width:1895px;height:19px;background:#f3f5f5;"></div>
<div class="" style="left:17px;top:562px;width:1895px;height:1px;background:#e4e6ea;"></div>
<div class="" style="left:80px;top:544px;width:1px;height:19px;background:#e6e8e8;"></div>
<div class="" style="left:131px;top:544px;width:1px;height:19px;background:#e6e8e8;"></div>
<div class="" style="left:305px;top:544px;width:1px;height:19px;background:#e6e8e8;"></div>
<div class="" style="left:489px;top:544px;width:1px;height:19px;background:#e6e8e8;"></div>
<div class="" style="left:553px;top:544px;width:1px;height:19px;background:#e6e8e8;"></div>
<div class="" style="left:874px;top:544px;width:1px;height:19px;background:#e6e8e8;"></div>
<div class="" style="left:959px;top:544px;width:1px;height:19px;background:#e6e8e8;"></div>
<div class="" style="left:1134px;top:544px;width:1px;height:19px;background:#e6e8e8;"></div>
<div class="" style="left:1257px;top:544px;width:1px;height:19px;background:#e6e8e8;"></div>
<div class="" style="left:1348px;top:544px;width:1px;height:19px;background:#e6e8e8;"></div>
<div class="" style="left:1459px;top:544px;width:1px;height:19px;background:#e6e8e8;"></div>
<div class="" style="left:1759px;top:544px;width:1px;height:19px;background:#e6e8e8;"></div>
<span class="t m" style="top:544.5px;line-height:16px;font-size:12.5px;left:83.7px;transform-origin:0 50%;transform:scaleX(0.8600);">11:30</span>
<div class="ind" style="left:6px;top:563px;width:10px;height:19px;"></div>
<div class="" style="left:16px;top:563px;width:1px;height:19px;background:#72767e;"></div>
<div class="" style="left:17px;top:563px;width:1895px;height:19px;background:#bbcfee;"></div>
<div class="" style="left:17px;top:581px;width:1895px;height:1px;background:#d6e1f4;"></div>
<div class="" style="left:80px;top:563px;width:1px;height:19px;background:#d6e1f4;"></div>
<div class="" style="left:131px;top:563px;width:1px;height:19px;background:#d6e1f4;"></div>
<div class="" style="left:305px;top:563px;width:1px;height:19px;background:#d6e1f4;"></div>
<div class="" style="left:489px;top:563px;width:1px;height:19px;background:#d6e1f4;"></div>
<div class="" style="left:553px;top:563px;width:1px;height:19px;background:#d6e1f4;"></div>
<div class="" style="left:874px;top:563px;width:1px;height:19px;background:#d6e1f4;"></div>
<div class="" style="left:959px;top:563px;width:1px;height:19px;background:#d6e1f4;"></div>
<div class="" style="left:1134px;top:563px;width:1px;height:19px;background:#d6e1f4;"></div>
<div class="" style="left:1257px;top:563px;width:1px;height:19px;background:#d6e1f4;"></div>
<div class="" style="left:1348px;top:563px;width:1px;height:19px;background:#d6e1f4;"></div>
<div class="" style="left:1459px;top:563px;width:1px;height:19px;background:#d6e1f4;"></div>
<div class="" style="left:1759px;top:563px;width:1px;height:19px;background:#d6e1f4;"></div>
<span class="t m" style="top:563.5px;line-height:16px;font-size:12.5px;left:83.7px;transform-origin:0 50%;transform:scaleX(0.8600);">12:00</span>
<div class="" style="left:17px;top:563px;width:63px;height:18px;background:#c0c0c0;"></div>
<span class="t m" style="top:563.5px;line-height:16px;font-size:12.5px;left:19.3px;transform-origin:0 50%;transform:scaleX(0.8602);">NORMAL</span>
<div class="" style="left:135px;top:564px;width:16px;height:16px;background:#97d7e7;border-radius:50%;border:1px dashed #cfeef6;"></div>
<span class="t m" style="top:563.5px;line-height:16px;font-size:12.5px;left:246.0px;width:59.0px;margin-left:-2px;text-align:right;transform-origin:100% 50%;transform:scaleX(0.8597);">Agendado</span>
<span class="t m" style="top:563.5px;line-height:16px;font-size:12.5px;left:307.8px;transform-origin:0 50%;transform:scaleX(0.8638);">PARTICULAR</span>
<span class="t m" style="top:563.5px;line-height:16px;font-size:12.5px;left:509.8px;width:43.7px;margin-left:-2px;text-align:right;transform-origin:100% 50%;transform:scaleX(0.8600);">318072</span>
<span class="t m" style="top:563.5px;line-height:16px;font-size:12.5px;left:556.3px;transform-origin:0 50%;transform:scaleX(0.8476);">TESTE TES</span>
<span class="t m" style="top:563.5px;line-height:16px;font-size:12.5px;left:877.0px;transform-origin:0 50%;transform:scaleX(0.9272);">01/01/1990</span>
<span class="t" style="top:564.5px;line-height:14px;font-size:11px;left:1461.5px;transform-origin:0 50%;transform:scaleX(0.9284);">TC RINS (30min)</span>
<span class="t m" style="top:563.5px;line-height:16px;font-size:12.5px;left:1762.3px;transform-origin:0 50%;transform:scaleX(0.9055);">14/01/2021 09:11:29</span>
<div class="ind" style="left:6px;top:582px;width:10px;height:19px;"></div>
<div class="" style="left:16px;top:582px;width:1px;height:19px;background:#72767e;"></div>
<div class="" style="left:17px;top:582px;width:1895px;height:19px;background:#f3f5f5;"></div>
<div class="" style="left:17px;top:600px;width:1895px;height:1px;background:#e4e6ea;"></div>
<div class="" style="left:80px;top:582px;width:1px;height:19px;background:#e6e8e8;"></div>
<div class="" style="left:131px;top:582px;width:1px;height:19px;background:#e6e8e8;"></div>
<div class="" style="left:305px;top:582px;width:1px;height:19px;background:#e6e8e8;"></div>
<div class="" style="left:489px;top:582px;width:1px;height:19px;background:#e6e8e8;"></div>
<div class="" style="left:553px;top:582px;width:1px;height:19px;background:#e6e8e8;"></div>
<div class="" style="left:874px;top:582px;width:1px;height:19px;background:#e6e8e8;"></div>
<div class="" style="left:959px;top:582px;width:1px;height:19px;background:#e6e8e8;"></div>
<div class="" style="left:1134px;top:582px;width:1px;height:19px;background:#e6e8e8;"></div>
<div class="" style="left:1257px;top:582px;width:1px;height:19px;background:#e6e8e8;"></div>
<div class="" style="left:1348px;top:582px;width:1px;height:19px;background:#e6e8e8;"></div>
<div class="" style="left:1459px;top:582px;width:1px;height:19px;background:#e6e8e8;"></div>
<div class="" style="left:1759px;top:582px;width:1px;height:19px;background:#e6e8e8;"></div>
<span class="t m" style="top:582.5px;line-height:16px;font-size:12.5px;left:83.7px;transform-origin:0 50%;transform:scaleX(0.8600);">12:30</span>
<div class="ind" style="left:6px;top:601px;width:10px;height:33px;"></div>
<div class="" style="left:16px;top:601px;width:1px;height:33px;background:#72767e;"></div>
<div class="" style="left:17px;top:601px;width:1895px;height:33px;background:#bbcfee;"></div>
<div class="" style="left:17px;top:633px;width:1895px;height:1px;background:#d6e1f4;"></div>
<div class="" style="left:80px;top:601px;width:1px;height:33px;background:#d6e1f4;"></div>
<div class="" style="left:131px;top:601px;width:1px;height:33px;background:#d6e1f4;"></div>
<div class="" style="left:305px;top:601px;width:1px;height:33px;background:#d6e1f4;"></div>
<div class="" style="left:489px;top:601px;width:1px;height:33px;background:#d6e1f4;"></div>
<div class="" style="left:553px;top:601px;width:1px;height:33px;background:#d6e1f4;"></div>
<div class="" style="left:874px;top:601px;width:1px;height:33px;background:#d6e1f4;"></div>
<div class="" style="left:959px;top:601px;width:1px;height:33px;background:#d6e1f4;"></div>
<div class="" style="left:1134px;top:601px;width:1px;height:33px;background:#d6e1f4;"></div>
<div class="" style="left:1257px;top:601px;width:1px;height:33px;background:#d6e1f4;"></div>
<div class="" style="left:1348px;top:601px;width:1px;height:33px;background:#d6e1f4;"></div>
<div class="" style="left:1459px;top:601px;width:1px;height:33px;background:#d6e1f4;"></div>
<div class="" style="left:1759px;top:601px;width:1px;height:33px;background:#d6e1f4;"></div>
<span class="t m" style="top:608.5px;line-height:16px;font-size:12.5px;left:83.7px;transform-origin:0 50%;transform:scaleX(0.8600);">13:00</span>
<div class="" style="left:17px;top:601px;width:63px;height:32px;background:#c0c0c0;"></div>
<span class="t m" style="top:608.5px;line-height:16px;font-size:12.5px;left:19.3px;transform-origin:0 50%;transform:scaleX(0.8602);">NORMAL</span>
<div class="" style="left:135px;top:609px;width:16px;height:16px;background:#97d7e7;border-radius:50%;border:1px dashed #cfeef6;"></div>
<span class="t m" style="top:608.5px;line-height:16px;font-size:12.5px;left:246.0px;width:59.0px;margin-left:-2px;text-align:right;transform-origin:100% 50%;transform:scaleX(0.8597);">Agendado</span>
<span class="t m" style="top:608.5px;line-height:16px;font-size:12.5px;left:307.8px;transform-origin:0 50%;transform:scaleX(0.8638);">PARTICULAR</span>
<span class="t m" style="top:608.5px;line-height:16px;font-size:12.5px;left:509.8px;width:43.7px;margin-left:-2px;text-align:right;transform-origin:100% 50%;transform:scaleX(0.8600);">318075</span>
<span class="t m" style="top:608.5px;line-height:16px;font-size:12.5px;left:556.3px;transform-origin:0 50%;transform:scaleX(0.8563);">TESTE DE SISTEMA</span>
<span class="t m" style="top:608.5px;line-height:16px;font-size:12.5px;left:877.0px;transform-origin:0 50%;transform:scaleX(0.9272);">31/01/1972</span>
<span class="t" style="top:602.5px;line-height:14px;font-size:11px;left:1461.5px;transform-origin:0 50%;transform:scaleX(0.9455);">TC COLUNA CERVICAL (30min)</span>
<span class="t" style="top:616.5px;line-height:14px;font-size:11px;left:1461.5px;transform-origin:0 50%;transform:scaleX(0.9180);">TC PESCOÇO (30min)</span>
<span class="t m" style="top:608.5px;line-height:16px;font-size:12.5px;left:1762.3px;transform-origin:0 50%;transform:scaleX(0.8982);">14/01/2021 09:45:02</span>
<div class="ind" style="left:6px;top:634px;width:10px;height:19px;"></div>
<div class="" style="left:16px;top:634px;width:1px;height:19px;background:#72767e;"></div>
<div class="" style="left:17px;top:634px;width:1895px;height:19px;background:#bbcfee;"></div>
<div class="" style="left:17px;top:652px;width:1895px;height:1px;background:#d6e1f4;"></div>
<div class="" style="left:80px;top:634px;width:1px;height:19px;background:#d6e1f4;"></div>
<div class="" style="left:131px;top:634px;width:1px;height:19px;background:#d6e1f4;"></div>
<div class="" style="left:305px;top:634px;width:1px;height:19px;background:#d6e1f4;"></div>
<div class="" style="left:489px;top:634px;width:1px;height:19px;background:#d6e1f4;"></div>
<div class="" style="left:553px;top:634px;width:1px;height:19px;background:#d6e1f4;"></div>
<div class="" style="left:874px;top:634px;width:1px;height:19px;background:#d6e1f4;"></div>
<div class="" style="left:959px;top:634px;width:1px;height:19px;background:#d6e1f4;"></div>
<div class="" style="left:1134px;top:634px;width:1px;height:19px;background:#d6e1f4;"></div>
<div class="" style="left:1257px;top:634px;width:1px;height:19px;background:#d6e1f4;"></div>
<div class="" style="left:1348px;top:634px;width:1px;height:19px;background:#d6e1f4;"></div>
<div class="" style="left:1459px;top:634px;width:1px;height:19px;background:#d6e1f4;"></div>
<div class="" style="left:1759px;top:634px;width:1px;height:19px;background:#d6e1f4;"></div>
<span class="t m" style="top:634.5px;line-height:16px;font-size:12.5px;left:83.7px;transform-origin:0 50%;transform:scaleX(0.8600);">13:30</span>
<div class="ind" style="left:6px;top:653px;width:10px;height:19px;"></div>
<div class="" style="left:16px;top:653px;width:1px;height:19px;background:#72767e;"></div>
<div class="" style="left:17px;top:653px;width:1895px;height:19px;background:#bbcfee;"></div>
<div class="" style="left:17px;top:671px;width:1895px;height:1px;background:#d6e1f4;"></div>
<div class="" style="left:80px;top:653px;width:1px;height:19px;background:#d6e1f4;"></div>
<div class="" style="left:131px;top:653px;width:1px;height:19px;background:#d6e1f4;"></div>
<div class="" style="left:305px;top:653px;width:1px;height:19px;background:#d6e1f4;"></div>
<div class="" style="left:489px;top:653px;width:1px;height:19px;background:#d6e1f4;"></div>
<div class="" style="left:553px;top:653px;width:1px;height:19px;background:#d6e1f4;"></div>
<div class="" style="left:874px;top:653px;width:1px;height:19px;background:#d6e1f4;"></div>
<div class="" style="left:959px;top:653px;width:1px;height:19px;background:#d6e1f4;"></div>
<div class="" style="left:1134px;top:653px;width:1px;height:19px;background:#d6e1f4;"></div>
<div class="" style="left:1257px;top:653px;width:1px;height:19px;background:#d6e1f4;"></div>
<div class="" style="left:1348px;top:653px;width:1px;height:19px;background:#d6e1f4;"></div>
<div class="" style="left:1459px;top:653px;width:1px;height:19px;background:#d6e1f4;"></div>
<div class="" style="left:1759px;top:653px;width:1px;height:19px;background:#d6e1f4;"></div>
<span class="t m" style="top:653.5px;line-height:16px;font-size:12.5px;left:83.7px;transform-origin:0 50%;transform:scaleX(0.8600);">14:00</span>
<div class="" style="left:17px;top:653px;width:63px;height:18px;background:#c0c0c0;"></div>
<span class="t m" style="top:653.5px;line-height:16px;font-size:12.5px;left:19.3px;transform-origin:0 50%;transform:scaleX(0.8602);">NORMAL</span>
<div class="" style="left:135px;top:654px;width:16px;height:16px;background:#97d7e7;border-radius:50%;border:1px dashed #cfeef6;"></div>
<span class="t m" style="top:653.5px;line-height:16px;font-size:12.5px;left:246.0px;width:59.0px;margin-left:-2px;text-align:right;transform-origin:100% 50%;transform:scaleX(0.8597);">Agendado</span>
<span class="t m" style="top:653.5px;line-height:16px;font-size:12.5px;left:307.8px;transform-origin:0 50%;transform:scaleX(0.8382);">IPASGO</span>
<span class="t m" style="top:653.5px;line-height:16px;font-size:12.5px;left:509.8px;width:43.7px;margin-left:-2px;text-align:right;transform-origin:100% 50%;transform:scaleX(0.8600);">302432</span>
<span class="t m" style="top:653.5px;line-height:16px;font-size:12.5px;left:556.3px;transform-origin:0 50%;transform:scaleX(0.8638);">TESTE 3</span>
<span class="t m" style="top:653.5px;line-height:16px;font-size:12.5px;left:877.0px;transform-origin:0 50%;transform:scaleX(0.9272);">10/10/2015</span>
<span class="t" style="top:654.5px;line-height:14px;font-size:11px;left:1461.5px;transform-origin:0 50%;transform:scaleX(0.9530);">TC ORBITA (30min)</span>
<span class="t m" style="top:653.5px;line-height:16px;font-size:12.5px;left:1762.3px;transform-origin:0 50%;transform:scaleX(0.8982);">14/01/2021 08:52:44</span>
<div class="ind" style="left:6px;top:672px;width:10px;height:19px;"></div>
<div class="" style="left:16px;top:672px;width:1px;height:19px;background:#72767e;"></div>
<div class="" style="left:17px;top:672px;width:1895px;height:19px;background:#f3f5f5;"></div>
<div class="" style="left:17px;top:690px;width:1895px;height:1px;background:#e4e6ea;"></div>
<div class="" style="left:80px;top:672px;width:1px;height:19px;background:#e6e8e8;"></div>
<div class="" style="left:131px;top:672px;width:1px;height:19px;background:#e6e8e8;"></div>
<div class="" style="left:305px;top:672px;width:1px;height:19px;background:#e6e8e8;"></div>
<div class="" style="left:489px;top:672px;width:1px;height:19px;background:#e6e8e8;"></div>
<div class="" style="left:553px;top:672px;width:1px;height:19px;background:#e6e8e8;"></div>
<div class="" style="left:874px;top:672px;width:1px;height:19px;background:#e6e8e8;"></div>
<div class="" style="left:959px;top:672px;width:1px;height:19px;background:#e6e8e8;"></div>
<div class="" style="left:1134px;top:672px;width:1px;height:19px;background:#e6e8e8;"></div>
<div class="" style="left:1257px;top:672px;width:1px;height:19px;background:#e6e8e8;"></div>
<div class="" style="left:1348px;top:672px;width:1px;height:19px;background:#e6e8e8;"></div>
<div class="" style="left:1459px;top:672px;width:1px;height:19px;background:#e6e8e8;"></div>
<div class="" style="left:1759px;top:672px;width:1px;height:19px;background:#e6e8e8;"></div>
<span class="t m" style="top:672.5px;line-height:16px;font-size:12.5px;left:83.7px;transform-origin:0 50%;transform:scaleX(0.8600);">14:30</span>
<div class="ind" style="left:6px;top:691px;width:10px;height:19px;"></div>
<div class="" style="left:16px;top:691px;width:1px;height:19px;background:#72767e;"></div>
<div class="" style="left:17px;top:691px;width:1895px;height:19px;background:#bbcfee;"></div>
<div class="" style="left:17px;top:709px;width:1895px;height:1px;background:#d6e1f4;"></div>
<div class="" style="left:80px;top:691px;width:1px;height:19px;background:#d6e1f4;"></div>
<div class="" style="left:131px;top:691px;width:1px;height:19px;background:#d6e1f4;"></div>
<div class="" style="left:305px;top:691px;width:1px;height:19px;background:#d6e1f4;"></div>
<div class="" style="left:489px;top:691px;width:1px;height:19px;background:#d6e1f4;"></div>
<div class="" style="left:553px;top:691px;width:1px;height:19px;background:#d6e1f4;"></div>
<div class="" style="left:874px;top:691px;width:1px;height:19px;background:#d6e1f4;"></div>
<div class="" style="left:959px;top:691px;width:1px;height:19px;background:#d6e1f4;"></div>
<div class="" style="left:1134px;top:691px;width:1px;height:19px;background:#d6e1f4;"></div>
<div class="" style="left:1257px;top:691px;width:1px;height:19px;background:#d6e1f4;"></div>
<div class="" style="left:1348px;top:691px;width:1px;height:19px;background:#d6e1f4;"></div>
<div class="" style="left:1459px;top:691px;width:1px;height:19px;background:#d6e1f4;"></div>
<div class="" style="left:1759px;top:691px;width:1px;height:19px;background:#d6e1f4;"></div>
<span class="t m" style="top:691.5px;line-height:16px;font-size:12.5px;left:83.7px;transform-origin:0 50%;transform:scaleX(0.8600);">15:00</span>
<div class="" style="left:17px;top:691px;width:63px;height:18px;background:#c0c0c0;"></div>
<span class="t m" style="top:691.5px;line-height:16px;font-size:12.5px;left:19.3px;transform-origin:0 50%;transform:scaleX(0.8602);">NORMAL</span>
<div class="" style="left:135px;top:692px;width:16px;height:16px;background:#97d7e7;border-radius:50%;border:1px dashed #cfeef6;"></div>
<span class="t m" style="top:691.5px;line-height:16px;font-size:12.5px;left:246.0px;width:59.0px;margin-left:-2px;text-align:right;transform-origin:100% 50%;transform:scaleX(0.8597);">Agendado</span>
<span class="t m" style="top:691.5px;line-height:16px;font-size:12.5px;left:307.8px;transform-origin:0 50%;transform:scaleX(0.8638);">PARTICULAR</span>
<span class="t m" style="top:691.5px;line-height:16px;font-size:12.5px;left:509.8px;width:43.7px;margin-left:-2px;text-align:right;transform-origin:100% 50%;transform:scaleX(0.8600);">318077</span>
<span class="t m" style="top:691.5px;line-height:16px;font-size:12.5px;left:556.3px;transform-origin:0 50%;transform:scaleX(0.8712);">TESTE OLIVEIRA MATRIZ</span>
<span class="t m" style="top:691.5px;line-height:16px;font-size:12.5px;left:877.0px;transform-origin:0 50%;transform:scaleX(0.9272);">17/08/1991</span>
<span class="t" style="top:692.5px;line-height:14px;font-size:11px;left:1461.5px;transform-origin:0 50%;transform:scaleX(0.9509);">TC COLUNA LOMBAR (30min)</span>
<span class="t m" style="top:691.5px;line-height:16px;font-size:12.5px;left:1762.3px;transform-origin:0 50%;transform:scaleX(0.8982);">14/01/2021 10:38:49</span>
<div class="ind" style="left:6px;top:710px;width:10px;height:19px;"></div>
<div class="" style="left:16px;top:710px;width:1px;height:19px;background:#72767e;"></div>
<div class="" style="left:17px;top:710px;width:1895px;height:19px;background:#f3f5f5;"></div>
<div class="" style="left:17px;top:728px;width:1895px;height:1px;background:#e4e6ea;"></div>
<div class="" style="left:80px;top:710px;width:1px;height:19px;background:#e6e8e8;"></div>
<div class="" style="left:131px;top:710px;width:1px;height:19px;background:#e6e8e8;"></div>
<div class="" style="left:305px;top:710px;width:1px;height:19px;background:#e6e8e8;"></div>
<div class="" style="left:489px;top:710px;width:1px;height:19px;background:#e6e8e8;"></div>
<div class="" style="left:553px;top:710px;width:1px;height:19px;background:#e6e8e8;"></div>
<div class="" style="left:874px;top:710px;width:1px;height:19px;background:#e6e8e8;"></div>
<div class="" style="left:959px;top:710px;width:1px;height:19px;background:#e6e8e8;"></div>
<div class="" style="left:1134px;top:710px;width:1px;height:19px;background:#e6e8e8;"></div>
<div class="" style="left:1257px;top:710px;width:1px;height:19px;background:#e6e8e8;"></div>
<div class="" style="left:1348px;top:710px;width:1px;height:19px;background:#e6e8e8;"></div>
<div class="" style="left:1459px;top:710px;width:1px;height:19px;background:#e6e8e8;"></div>
<div class="" style="left:1759px;top:710px;width:1px;height:19px;background:#e6e8e8;"></div>
<span class="t m" style="top:710.5px;line-height:16px;font-size:12.5px;left:83.7px;transform-origin:0 50%;transform:scaleX(0.8600);">15:30</span>
<div class="ind" style="left:6px;top:729px;width:10px;height:19px;"></div>
<div class="" style="left:16px;top:729px;width:1px;height:19px;background:#72767e;"></div>
<div class="" style="left:17px;top:729px;width:1895px;height:19px;background:#bbcfee;"></div>
<div class="" style="left:17px;top:747px;width:1895px;height:1px;background:#d6e1f4;"></div>
<div class="" style="left:80px;top:729px;width:1px;height:19px;background:#d6e1f4;"></div>
<div class="" style="left:131px;top:729px;width:1px;height:19px;background:#d6e1f4;"></div>
<div class="" style="left:305px;top:729px;width:1px;height:19px;background:#d6e1f4;"></div>
<div class="" style="left:489px;top:729px;width:1px;height:19px;background:#d6e1f4;"></div>
<div class="" style="left:553px;top:729px;width:1px;height:19px;background:#d6e1f4;"></div>
<div class="" style="left:874px;top:729px;width:1px;height:19px;background:#d6e1f4;"></div>
<div class="" style="left:959px;top:729px;width:1px;height:19px;background:#d6e1f4;"></div>
<div class="" style="left:1134px;top:729px;width:1px;height:19px;background:#d6e1f4;"></div>
<div class="" style="left:1257px;top:729px;width:1px;height:19px;background:#d6e1f4;"></div>
<div class="" style="left:1348px;top:729px;width:1px;height:19px;background:#d6e1f4;"></div>
<div class="" style="left:1459px;top:729px;width:1px;height:19px;background:#d6e1f4;"></div>
<div class="" style="left:1759px;top:729px;width:1px;height:19px;background:#d6e1f4;"></div>
<span class="t m" style="top:729.5px;line-height:16px;font-size:12.5px;left:83.7px;transform-origin:0 50%;transform:scaleX(0.8600);">16:00</span>
<div class="" style="left:135px;top:731px;width:16px;height:15px;background:#8e8e8e;border-radius:50%;"></div>
<span class="t m" style="top:729.5px;line-height:16px;font-size:12.5px;left:148.5px;width:156.3px;margin-left:-2px;text-align:right;transform-origin:100% 50%;transform:scaleX(0.8408);">Bloqueado por: CHARLLES</span>
<span class="t" style="top:731.5px;line-height:13px;font-size:10px;left:1137.0px;transform-origin:0 50%;transform:scaleX(0.9498);font-family:'DejaVu Sans','Liberation Sans',sans-serif;">Médico não irá atender</span>
<span class="t m" style="top:729.5px;line-height:16px;font-size:12.5px;left:1762.3px;transform-origin:0 50%;transform:scaleX(0.9055);">19/01/2021 11:44:52</span>
<div class="ind" style="left:6px;top:748px;width:10px;height:19px;"></div>
<div class="" style="left:16px;top:748px;width:1px;height:19px;background:#72767e;"></div>
<div class="" style="left:17px;top:748px;width:1895px;height:19px;background:#bbcfee;"></div>
<div class="" style="left:17px;top:766px;width:1895px;height:1px;background:#d6e1f4;"></div>
<div class="" style="left:80px;top:748px;width:1px;height:19px;background:#d6e1f4;"></div>
<div class="" style="left:131px;top:748px;width:1px;height:19px;background:#d6e1f4;"></div>
<div class="" style="left:305px;top:748px;width:1px;height:19px;background:#d6e1f4;"></div>
<div class="" style="left:489px;top:748px;width:1px;height:19px;background:#d6e1f4;"></div>
<div class="" style="left:553px;top:748px;width:1px;height:19px;background:#d6e1f4;"></div>
<div class="" style="left:874px;top:748px;width:1px;height:19px;background:#d6e1f4;"></div>
<div class="" style="left:959px;top:748px;width:1px;height:19px;background:#d6e1f4;"></div>
<div class="" style="left:1134px;top:748px;width:1px;height:19px;background:#d6e1f4;"></div>
<div class="" style="left:1257px;top:748px;width:1px;height:19px;background:#d6e1f4;"></div>
<div class="" style="left:1348px;top:748px;width:1px;height:19px;background:#d6e1f4;"></div>
<div class="" style="left:1459px;top:748px;width:1px;height:19px;background:#d6e1f4;"></div>
<div class="" style="left:1759px;top:748px;width:1px;height:19px;background:#d6e1f4;"></div>
<span class="t m" style="top:748.5px;line-height:16px;font-size:12.5px;left:83.7px;transform-origin:0 50%;transform:scaleX(0.8600);">16:30</span>
<div class="" style="left:135px;top:750px;width:16px;height:15px;background:#8e8e8e;border-radius:50%;"></div>
<span class="t m" style="top:748.5px;line-height:16px;font-size:12.5px;left:148.5px;width:156.3px;margin-left:-2px;text-align:right;transform-origin:100% 50%;transform:scaleX(0.8408);">Bloqueado por: CHARLLES</span>
<span class="t" style="top:750.5px;line-height:13px;font-size:10px;left:1137.0px;transform-origin:0 50%;transform:scaleX(0.9498);font-family:'DejaVu Sans','Liberation Sans',sans-serif;">Médico não irá atender</span>
<span class="t m" style="top:748.5px;line-height:16px;font-size:12.5px;left:1762.3px;transform-origin:0 50%;transform:scaleX(0.9055);">19/01/2021 11:44:52</span>
<div class="ind" style="left:6px;top:767px;width:10px;height:19px;"></div>
<div class="" style="left:16px;top:767px;width:1px;height:19px;background:#72767e;"></div>
<div class="" style="left:17px;top:767px;width:1895px;height:19px;background:#bbcfee;"></div>
<div class="" style="left:17px;top:785px;width:1895px;height:1px;background:#d6e1f4;"></div>
<div class="" style="left:80px;top:767px;width:1px;height:19px;background:#d6e1f4;"></div>
<div class="" style="left:131px;top:767px;width:1px;height:19px;background:#d6e1f4;"></div>
<div class="" style="left:305px;top:767px;width:1px;height:19px;background:#d6e1f4;"></div>
<div class="" style="left:489px;top:767px;width:1px;height:19px;background:#d6e1f4;"></div>
<div class="" style="left:553px;top:767px;width:1px;height:19px;background:#d6e1f4;"></div>
<div class="" style="left:874px;top:767px;width:1px;height:19px;background:#d6e1f4;"></div>
<div class="" style="left:959px;top:767px;width:1px;height:19px;background:#d6e1f4;"></div>
<div class="" style="left:1134px;top:767px;width:1px;height:19px;background:#d6e1f4;"></div>
<div class="" style="left:1257px;top:767px;width:1px;height:19px;background:#d6e1f4;"></div>
<div class="" style="left:1348px;top:767px;width:1px;height:19px;background:#d6e1f4;"></div>
<div class="" style="left:1459px;top:767px;width:1px;height:19px;background:#d6e1f4;"></div>
<div class="" style="left:1759px;top:767px;width:1px;height:19px;background:#d6e1f4;"></div>
<span class="t m" style="top:767.5px;line-height:16px;font-size:12.5px;left:83.7px;transform-origin:0 50%;transform:scaleX(0.8600);">17:00</span>
<div class="" style="left:135px;top:769px;width:16px;height:15px;background:#8e8e8e;border-radius:50%;"></div>
<span class="t m" style="top:767.5px;line-height:16px;font-size:12.5px;left:148.5px;width:156.3px;margin-left:-2px;text-align:right;transform-origin:100% 50%;transform:scaleX(0.8408);">Bloqueado por: CHARLLES</span>
<span class="t" style="top:769.5px;line-height:13px;font-size:10px;left:1137.0px;transform-origin:0 50%;transform:scaleX(0.9498);font-family:'DejaVu Sans','Liberation Sans',sans-serif;">Médico não irá atender</span>
<span class="t m" style="top:767.5px;line-height:16px;font-size:12.5px;left:1762.3px;transform-origin:0 50%;transform:scaleX(0.9055);">19/01/2021 11:44:52</span>
<div class="ind" style="left:6px;top:786px;width:10px;height:19px;"></div>
<div class="" style="left:16px;top:786px;width:1px;height:19px;background:#72767e;"></div>
<div class="" style="left:17px;top:786px;width:1895px;height:19px;background:#f3f5f5;"></div>
<div class="" style="left:17px;top:804px;width:1895px;height:1px;background:#e4e6ea;"></div>
<div class="" style="left:80px;top:786px;width:1px;height:19px;background:#e6e8e8;"></div>
<div class="" style="left:131px;top:786px;width:1px;height:19px;background:#e6e8e8;"></div>
<div class="" style="left:305px;top:786px;width:1px;height:19px;background:#e6e8e8;"></div>
<div class="" style="left:489px;top:786px;width:1px;height:19px;background:#e6e8e8;"></div>
<div class="" style="left:553px;top:786px;width:1px;height:19px;background:#e6e8e8;"></div>
<div class="" style="left:874px;top:786px;width:1px;height:19px;background:#e6e8e8;"></div>
<div class="" style="left:959px;top:786px;width:1px;height:19px;background:#e6e8e8;"></div>
<div class="" style="left:1134px;top:786px;width:1px;height:19px;background:#e6e8e8;"></div>
<div class="" style="left:1257px;top:786px;width:1px;height:19px;background:#e6e8e8;"></div>
<div class="" style="left:1348px;top:786px;width:1px;height:19px;background:#e6e8e8;"></div>
<div class="" style="left:1459px;top:786px;width:1px;height:19px;background:#e6e8e8;"></div>
<div class="" style="left:1759px;top:786px;width:1px;height:19px;background:#e6e8e8;"></div>
<span class="t m" style="top:786.5px;line-height:16px;font-size:12.5px;left:83.7px;transform-origin:0 50%;transform:scaleX(0.8600);">17:30</span>
<div class="ind" style="left:6px;top:805px;width:10px;height:19px;"></div>
<div class="" style="left:16px;top:805px;width:1px;height:19px;background:#72767e;"></div>
<div class="" style="left:17px;top:805px;width:1895px;height:19px;background:#f3f5f5;"></div>
<div class="" style="left:17px;top:823px;width:1895px;height:1px;background:#e4e6ea;"></div>
<div class="" style="left:80px;top:805px;width:1px;height:19px;background:#e6e8e8;"></div>
<div class="" style="left:131px;top:805px;width:1px;height:19px;background:#e6e8e8;"></div>
<div class="" style="left:305px;top:805px;width:1px;height:19px;background:#e6e8e8;"></div>
<div class="" style="left:489px;top:805px;width:1px;height:19px;background:#e6e8e8;"></div>
<div class="" style="left:553px;top:805px;width:1px;height:19px;background:#e6e8e8;"></div>
<div class="" style="left:874px;top:805px;width:1px;height:19px;background:#e6e8e8;"></div>
<div class="" style="left:959px;top:805px;width:1px;height:19px;background:#e6e8e8;"></div>
<div class="" style="left:1134px;top:805px;width:1px;height:19px;background:#e6e8e8;"></div>
<div class="" style="left:1257px;top:805px;width:1px;height:19px;background:#e6e8e8;"></div>
<div class="" style="left:1348px;top:805px;width:1px;height:19px;background:#e6e8e8;"></div>
<div class="" style="left:1459px;top:805px;width:1px;height:19px;background:#e6e8e8;"></div>
<div class="" style="left:1759px;top:805px;width:1px;height:19px;background:#e6e8e8;"></div>
<span class="t m" style="top:805.5px;line-height:16px;font-size:12.5px;left:83.7px;transform-origin:0 50%;transform:scaleX(0.8600);">18:00</span>
<div class="" style="left:5px;top:949px;width:1907px;height:16px;background:linear-gradient(#f8f8f8,#efefef);"></div>
<div class="" style="left:5px;top:965px;width:1907px;height:1px;background:#c4ccd4;"></div>
<div class="" style="left:3px;top:966px;width:1910px;height:1px;background:#9a9ea4;"></div>
<div class="w" style="left:4px;top:967px;width:1909px;height:2px;"></div>
<div class="" style="left:22px;top:949px;width:926px;height:15px;background:linear-gradient(#f6f6f6 0%,#e6e6e6 48%,#cdcdcd 52%,#d6d6d6 100%);border:1px solid #999;border-radius:2px;"></div>
<div class="" style="left:481px;top:953px;width:1px;height:7px;background:#9a9a9a;"></div>
<div class="" style="left:483px;top:953px;width:1px;height:7px;background:#9a9a9a;"></div>
<div class="" style="left:485px;top:953px;width:1px;height:7px;background:#9a9a9a;"></div>
<div class="" style="left:487px;top:953px;width:1px;height:7px;background:#9a9a9a;"></div>
<svg style="left:10px;top:951px" width="5" height="11" viewBox="0 0 5 11"><path d="M5 0.500v10L0 5.500z" fill="#3c4c7c"/></svg>
<svg style="left:1902px;top:951px" width="5" height="11" viewBox="0 0 5 11"><path d="M0 0.500v10L5 5.500z" fill="#3c4c7c"/></svg>
<div class="b" style="left:6px;top:971px;width:99px;height:19px;"></div>
<div class="b" style="left:6px;top:991px;width:99px;height:19px;"></div>
<span class="t m" style="top:972.5px;line-height:16px;font-size:12.5px;left:12.8px;width:85.4px;text-align:center;transform-origin:50% 50%;transform:scaleX(0.8695);">Agendar/Editar</span>
<span class="t m" style="top:992.5px;line-height:16px;font-size:12.5px;left:10.9px;transform-origin:0 50%;transform:scaleX(0.8415);">Situação(status)</span>
<div class="" style="left:90px;top:994px;width:1px;height:13px;background:#6a6a6a;"></div>
<div class="" style="left:91px;top:994px;width:1px;height:13px;background:#f8f8f8;"></div>
<svg style="left:93px;top:998px" width="9" height="5" viewBox="0 0 9 5"><path d="M0 0h9L4.500 5z" fill="#000"/></svg>
<div class="b" style="left:106px;top:971px;width:93px;height:19px;"></div>
<div class="b" style="left:106px;top:991px;width:93px;height:19px;"></div>
<span class="t m" style="top:972.5px;line-height:16px;font-size:12.5px;left:126.5px;width:52.0px;text-align:center;transform-origin:50% 50%;transform:scaleX(0.8296);">Cancelar</span>
<span class="t m" style="top:992.5px;line-height:16px;font-size:12.5px;left:99.4px;width:106.2px;text-align:center;transform-origin:50% 50%;transform:scaleX(0.8254);">Criar Novo Horário</span>
<div class="b" style="left:200px;top:971px;width:93px;height:19px;"></div>
<div class="b" style="left:200px;top:991px;width:93px;height:19px;"></div>
<span class="t m" style="top:972.5px;line-height:16px;font-size:12.5px;left:219.0px;width:55.0px;text-align:center;transform-origin:50% 50%;transform:scaleX(0.8111);">Transferir</span>
<span class="t m" style="top:992.5px;line-height:16px;font-size:12.5px;left:218.5px;width:56.0px;text-align:center;transform-origin:50% 50%;transform:scaleX(0.8154);">Visualizar</span>
<div class="b" style="left:294px;top:971px;width:113px;height:19px;"></div>
<div class="b" style="left:294px;top:991px;width:113px;height:19px;"></div>
<span class="t m" style="top:972.5px;line-height:16px;font-size:12.5px;left:287.3px;width:126.4px;text-align:center;transform-origin:50% 50%;transform:scaleX(0.8522);">Bloquear/Desbloquear</span>
<span class="t m" style="top:992.5px;line-height:16px;font-size:12.5px;left:331.1px;width:38.8px;text-align:center;transform-origin:50% 50%;transform:scaleX(0.7985);">Copiar</span>
<div class="b" style="left:408px;top:971px;width:73px;height:19px;"></div>
<div class="b" style="left:408px;top:991px;width:73px;height:19px;"></div>
<span class="t m" style="top:972.5px;line-height:16px;font-size:12.5px;left:422.0px;width:45.1px;text-align:center;transform-origin:50% 50%;transform:scaleX(0.8358);">Internar</span>
<span class="t m" style="top:992.5px;line-height:16px;font-size:12.5px;left:426.8px;width:35.4px;text-align:center;transform-origin:50% 50%;transform:scaleX(0.8245);">Conta</span>
<div class="b" style="left:482px;top:971px;width:93px;height:19px;"></div>
<div class="b" style="left:482px;top:991px;width:93px;height:19px;"></div>
<span class="t m" style="top:972.5px;line-height:16px;font-size:12.5px;left:494.2px;width:68.7px;text-align:center;transform-origin:50% 50%;transform:scaleX(0.8337);">Editar Ficha</span>
<span class="t m" style="top:992.5px;line-height:16px;font-size:12.5px;left:488.0px;width:81.0px;text-align:center;transform-origin:50% 50%;transform:scaleX(0.8484);">Vincular Ficha</span>
<div class="b" style="left:576px;top:971px;width:93px;height:19px;"></div>
<div class="b" style="left:576px;top:991px;width:93px;height:19px;background:#cccccc;border-color:#bfbfbf;"></div>
<span class="t m" style="top:972.5px;line-height:16px;font-size:12.5px;left:575.0px;width:95.1px;text-align:center;transform-origin:50% 50%;transform:scaleX(0.8219);">Registrar Exame</span>
<span class="t m" style="top:992.5px;line-height:16px;font-size:12.5px;color:#838383;left:571.6px;width:101.8px;text-align:center;transform-origin:50% 50%;transform:scaleX(0.8515);">Avaliar Satisfação</span>
<div class="b" style="left:670px;top:971px;width:94px;height:19px;"></div>
<div class="b" style="left:670px;top:991px;width:94px;height:19px;"></div>
<span class="t m" style="top:972.5px;line-height:16px;font-size:12.5px;left:671.9px;width:90.2px;text-align:center;transform-origin:50% 50%;transform:scaleX(0.8544);">Ag. Cancelados</span>
<span class="t m" style="top:992.5px;line-height:16px;font-size:12.5px;left:662.5px;width:109.0px;text-align:center;transform-origin:50% 50%;transform:scaleX(0.8411);">Exames desta data</span>
<div class="b" style="left:765px;top:971px;width:94px;height:19px;"></div>
<div class="b" style="left:765px;top:991px;width:94px;height:19px;"></div>
<span class="t m" style="top:972.5px;line-height:16px;font-size:12.5px;left:759.9px;width:104.1px;text-align:center;transform-origin:50% 50%;transform:scaleX(0.8567);">Lib. Hr. Excedente</span>
<span class="t m" style="top:992.5px;line-height:16px;font-size:12.5px;left:772.1px;width:79.8px;text-align:center;transform-origin:50% 50%;transform:scaleX(0.8353);">Ag. Consultas</span>
<div class="b" style="left:860px;top:971px;width:73px;height:19px;"></div>
<div class="b" style="left:860px;top:991px;width:73px;height:19px;"></div>
<span class="t m" style="top:972.5px;line-height:16px;font-size:12.5px;left:866.1px;transform-origin:0 50%;transform:scaleX(0.8446);">Protocolo</span>
<span class="t m" style="top:992.5px;line-height:16px;font-size:12.5px;left:873.3px;width:46.5px;text-align:center;transform-origin:50% 50%;transform:scaleX(0.8265);">Preparo</span>
<div class="" style="left:918px;top:974px;width:1px;height:13px;background:#6a6a6a;"></div>
<div class="" style="left:919px;top:974px;width:1px;height:13px;background:#f8f8f8;"></div>
<svg style="left:921px;top:978px" width="9" height="5" viewBox="0 0 9 5"><path d="M0 0h9L4.500 5z" fill="#000"/></svg>
<div class="b" style="left:934px;top:971px;width:93px;height:19px;"></div>
<div class="b" style="left:934px;top:991px;width:93px;height:19px;"></div>
<span class="t m" style="top:972.5px;line-height:16px;font-size:12.5px;left:937.0px;transform-origin:0 50%;transform:scaleX(0.8428);">Dig. Img Dicom</span>
<span class="t m" style="top:992.5px;line-height:16px;font-size:12.5px;left:930.5px;width:99.9px;text-align:center;transform-origin:50% 50%;transform:scaleX(0.8046);">Horários Confirm.</span>
<div class="" style="left:1012px;top:974px;width:1px;height:13px;background:#6a6a6a;"></div>
<div class="" style="left:1013px;top:974px;width:1px;height:13px;background:#f8f8f8;"></div>
<svg style="left:1015px;top:978px" width="9" height="5" viewBox="0 0 9 5"><path d="M0 0h9L4.500 5z" fill="#000"/></svg>
<div class="" style="left:84px;top:161px;width:82px;height:43px;border:3px solid #f94144;box-shadow:0 3px 5px rgba(0,0,0,.40), inset 0 3px 4px rgba(0,0,0,.28);"></div>
<div class="" style="left:94px;top:210px;width:40.5px;height:40.5px;border-radius:50%;background:#f94144;box-shadow:0 3px 5px rgba(0,0,0,.42);"></div>
<span class="t" style="top:211.5px;line-height:37px;font-size:30px;font-weight:bold;color:#fff;left:104.8px;width:18.7px;text-align:center;transform-origin:50% 50%;transform:scaleX(1.0000);-webkit-text-stroke:.25px #fff;clip-path:polygon(0 0,100% 0,100% 25.7px,12.4px 25.7px,12.4px 100%,7.800px 100%,7.800px 25.7px,0 25.7px);">1</span>
<svg style="left:159px;top:189px" width="14" height="22" viewBox="0 0 14 22"><path d="M1.500 1.500v16.500l3.800-3.600 2.700 6.100 2.600-1.100-2.700-6h5.300z" fill="#fff" stroke="#000" stroke-width="1" stroke-linejoin="miter"/></svg>
</body></html>
